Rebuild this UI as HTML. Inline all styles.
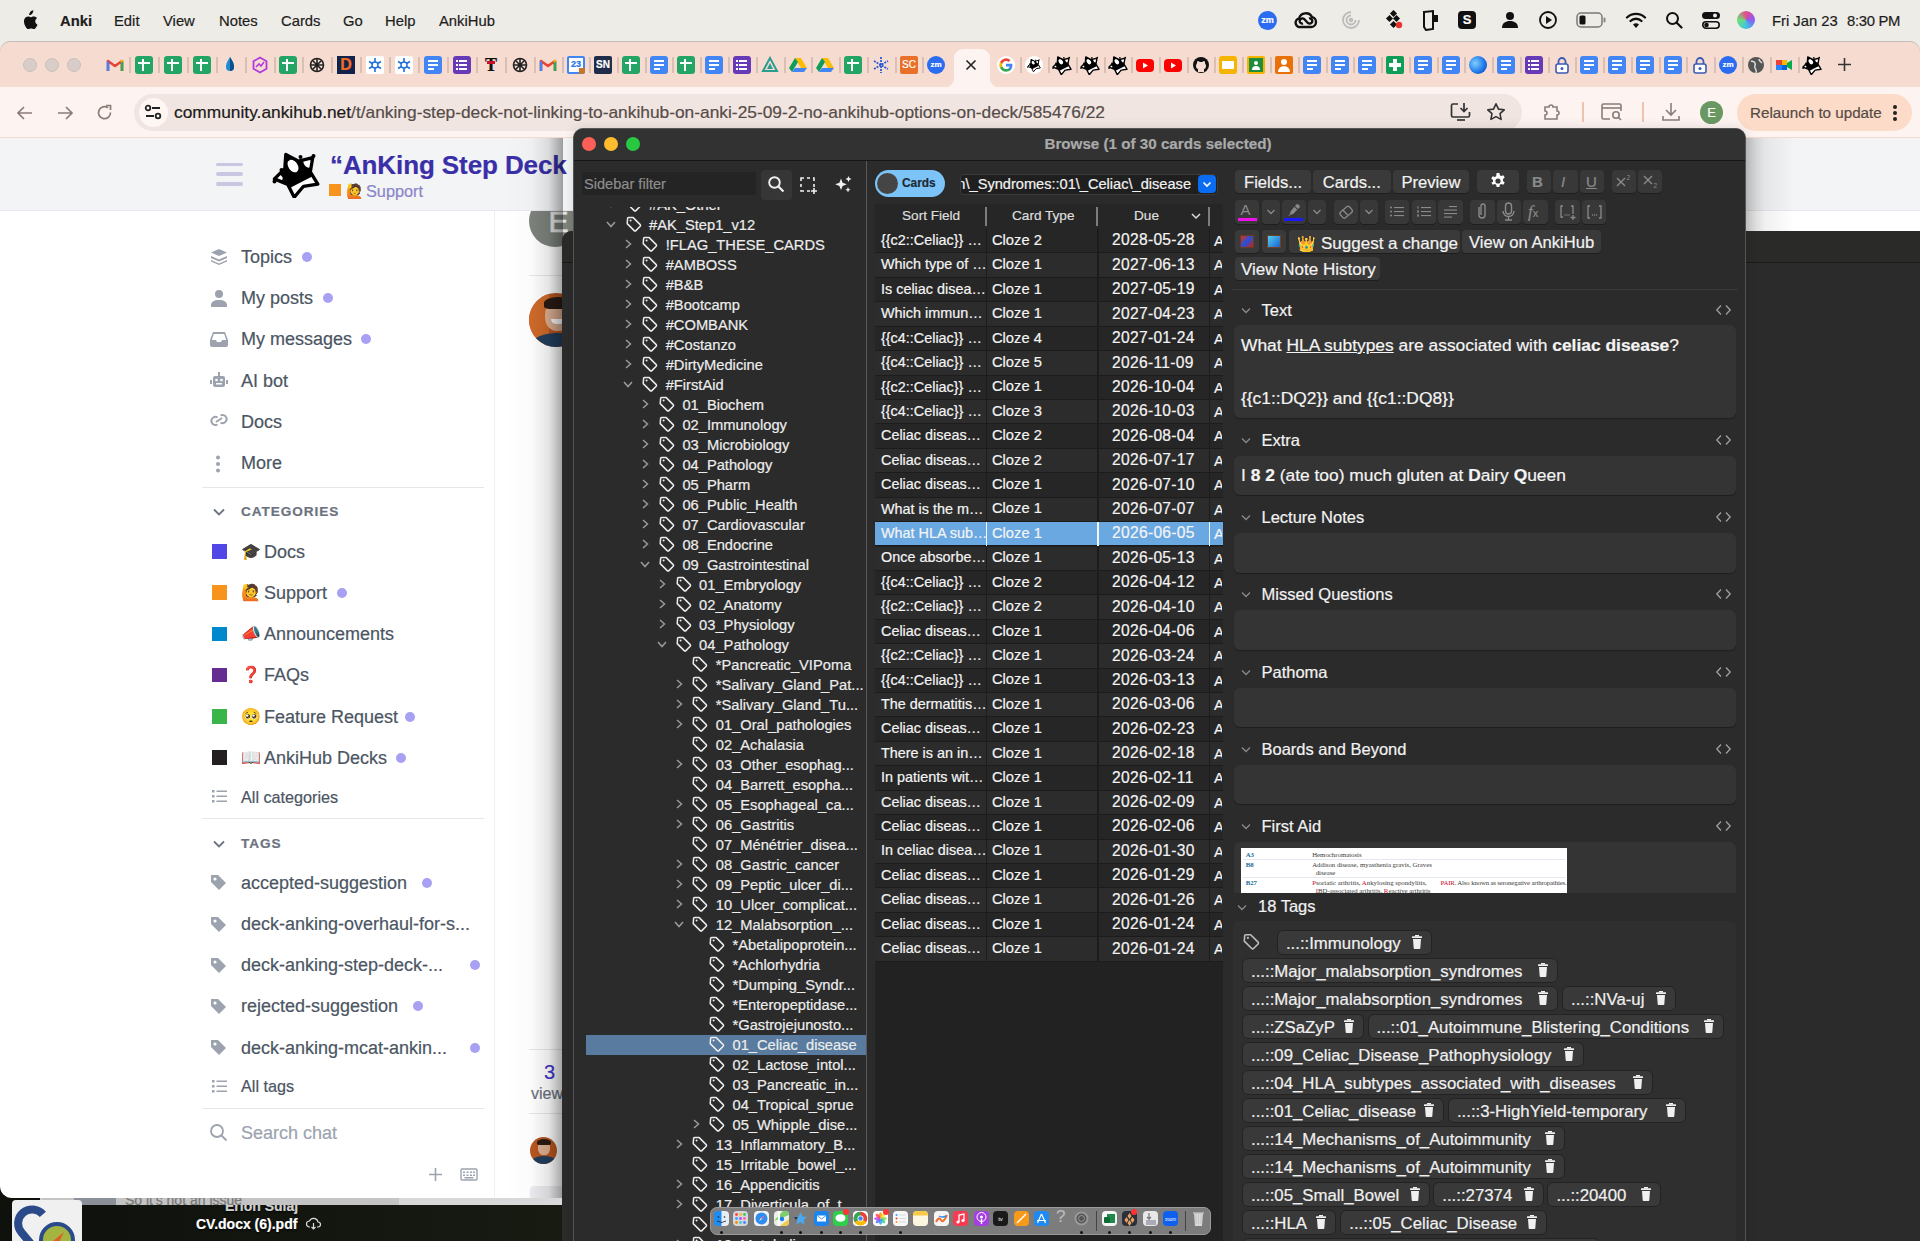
<!DOCTYPE html>
<html><head><meta charset="utf-8">
<style>
*{box-sizing:border-box;margin:0;padding:0}
html,body{width:1920px;height:1241px;overflow:hidden;background:#1a1c14;font-family:"Liberation Sans",sans-serif;position:relative}
.a{position:absolute}
span.a,div.a{-webkit-text-stroke:0.2px currentColor}
.fa{position:absolute;-webkit-text-stroke:0}
#menubar{left:0;top:0;width:1920px;height:42px;background:#eeece6;color:#1d1d1d;font-size:14.8px}
#menubar span.m{position:absolute;top:12.5px;line-height:17px;white-space:nowrap;-webkit-text-stroke:0.2px currentColor}
#tabs{left:0;top:42px;width:1920px;height:46px;background:#f6dcd0;border-radius:10px 10px 0 0;box-shadow:0 -1px 0 #c4beb8}
#toolbar{left:0;top:87px;width:1920px;height:51px;background:#fdf3f0;border-bottom:1px solid #f3d9cf}
</style></head><body>
<svg width="0" height="0" style="position:absolute"><defs><clipPath id="akc"><path d="M22.2 47.3L15.8 34.4 2.4 28.9 12.8 18.8 13.8 4.4 26.6 11.1 40.7 7.7 38.3 21.9 45.8 34.2 31.5 36.3z"/></clipPath><symbol id="ak" viewBox="0 0 48 48"><path d="M22.2 47.3L15.8 34.4 2.4 28.9 12.8 18.8 13.8 4.4 26.6 11.1 40.7 7.7 38.3 21.9 45.8 34.2 31.5 36.3z" fill="#fff"/><g clip-path="url(#akc)"><path d="M0 32L10 42 47 23 44 0 0 0z" fill="#000"/><ellipse cx="21" cy="16" rx="4.6" ry="7" fill="#fff" transform="rotate(-35 21 16)"/><ellipse cx="35.5" cy="12.5" rx="3.8" ry="5.5" fill="#fff" transform="rotate(-30 35.5 12.5)"/><ellipse cx="7" cy="27.5" rx="2.8" ry="4" fill="#fff" transform="rotate(-50 7 27.5)"/></g><path d="M22.2 47.3L15.8 34.4 2.4 28.9 12.8 18.8 13.8 4.4 26.6 11.1 40.7 7.7 38.3 21.9 45.8 34.2 31.5 36.3z" fill="none" stroke="#000" stroke-width="3.3" stroke-linejoin="round"/><g fill="#000"><circle cx="16" cy="9" r="2"/><circle cx="28.5" cy="7" r="2"/><circle cx="41.5" cy="6" r="2"/><circle cx="9.5" cy="20" r="2"/><circle cx="2.5" cy="31.5" r="2"/></g></symbol></defs></svg><div class="a" style="left:0;top:0;width:1920px;height:70px;background:#eeece6"></div>
<div class="a" style="left:0;top:1190px;width:1920px;height:51px;background:linear-gradient(90deg,#0e110c,#171b12 30%,#1e2317 60%,#12150f)"></div>
<span class="a" style="left:225px;top:1198px;font-size:14px;line-height:16px;color:#d0d0d0;font-weight:bold;white-space:nowrap;text-shadow:0 1px 2px #000">Erion Sulaj</span>
<span class="a" style="left:196px;top:1216px;font-size:14px;line-height:16px;color:#fff;font-weight:bold;white-space:nowrap;text-shadow:0 1px 2px #000">CV.docx (6).pdf</span>
<svg class="a" style="left:306px;top:1217px" width="15" height="13" viewBox="0 0 15 13"><path d="M4 10H3.5a3 3 0 0 1 0-6 4.5 4.5 0 0 1 8.5 1 2.5 2.5 0 0 1 0 5H11M7.5 6v6M5.5 10l2 2 2-2" fill="none" stroke="#ddd" stroke-width="1.2"/></svg>
<div class="a" style="left:40px;top:1190px;width:1220px;height:15px;background:#d8d8d8;border-radius:0 0 6px 6px"></div><div class="a" style="left:42px;top:1190px;width:357px;height:15px;background:#c4c4c4"></div>
<div class="a" style="left:74px;top:1190px;width:42px;height:15px;background:#8a8f98"></div>
<span class="a" style="left:125px;top:1193px;font-size:14px;line-height:14px;color:#777">So it's not an issue</span>
<div class="a" style="left:12px;top:1200px;width:70px;height:41px;background:#f0f0f0;border-radius:4px 4px 0 0;overflow:hidden"><svg class="a" style="left:0;top:0" width="70" height="41" viewBox="0 0 70 41"><path d="M10 46V22a14 14 0 0 1 28 0" fill="none" stroke="#2b4a8a" stroke-width="8" transform="rotate(-40 24 28)"/><circle cx="45" cy="40" r="16" fill="#a3b540" stroke="#2b4a8a" stroke-width="4"/><path d="M40 42l12-10-6 12z" fill="#e05a2a"/></svg></div>
<div class="a" style="left:0;top:87px;width:1920px;height:1111px;background:#fff;border-radius:0 0 12px 12px"></div>
<div class="a" style="left:0;top:138px;width:1920px;height:73px;background:#f3f4f6;border-bottom:1px solid #e8e9ee"></div>
<div class="a" style="left:216px;top:162.75px;width:27px;height:3.5px;border-radius:2px;background:#c9c6e2"></div>
<div class="a" style="left:216px;top:172.45px;width:27px;height:3.5px;border-radius:2px;background:#c9c6e2"></div>
<div class="a" style="left:216px;top:182.25px;width:27px;height:3.5px;border-radius:2px;background:#c9c6e2"></div>
<svg class="a" style="left:272px;top:150px;width:48px;height:48px"><use href="#ak"/></svg>
<span class="a" style="left:330px;top:152.3px;font-size:26px;line-height:26px;color:#3a2fa8;white-space:nowrap;font-weight:bold;letter-spacing:-0.1px;">“AnKing Step Deck</span>
<div class="a" style="left:329px;top:184px;width:12px;height:12px;background:#f7941d"></div>
<span class="a" style="left:346px;top:184.1px;font-size:14px;line-height:14px;color:#000;white-space:nowrap;">🙋</span>
<span class="a" style="left:366px;top:183.0px;font-size:16.3px;line-height:16.3px;color:#8b86c8;white-space:nowrap;">Support</span>
<svg class="a" style="left:210px;top:248.0px" width="18" height="17" viewBox="0 0 18 17"><g fill="#9ca3af"><path d="M9 1l8 3.5-8 3.5-8-3.5z"/><path d="M1 8l8 3.5L17 8v2l-8 3.5L1 10z"/><path d="M1 12l8 3.5 8-3.5v1.5L9 17l-8-3.5z"/></g></svg>
<span class="a" style="left:241px;top:247.7px;font-size:18px;line-height:18px;color:#4b5563;white-space:nowrap;">Topics</span>
<div class="a" style="left:302.0px;top:251.5px;width:10px;height:10px;border-radius:50%;background:#a8a0f3"></div>
<svg class="a" style="left:210px;top:289.2px" width="18" height="18" viewBox="0 0 18 18"><circle cx="9" cy="5" r="4" fill="#9ca3af"/><path d="M1 18v-2c0-3 3-5 8-5s8 2 8 5v2z" fill="#9ca3af"/></svg>
<span class="a" style="left:241px;top:288.9px;font-size:18px;line-height:18px;color:#4b5563;white-space:nowrap;">My posts</span>
<div class="a" style="left:323.0px;top:292.7px;width:10px;height:10px;border-radius:50%;background:#a8a0f3"></div>
<svg class="a" style="left:210px;top:330.5px" width="18" height="16" viewBox="0 0 18 16"><path d="M3 1h12l3 8v5a2 2 0 0 1-2 2H2a2 2 0 0 1-2-2V9z" fill="#9ca3af"/><path d="M3.8 3h10.4l2 6H12l-1 2H7L6 9H1.8z" fill="#fff"/></svg>
<span class="a" style="left:241px;top:330.2px;font-size:18px;line-height:18px;color:#4b5563;white-space:nowrap;">My messages</span>
<div class="a" style="left:360.5px;top:334.0px;width:10px;height:10px;border-radius:50%;background:#a8a0f3"></div>
<svg class="a" style="left:210px;top:372.2px" width="18" height="16" viewBox="0 0 18 16"><rect x="3" y="4" width="12" height="11" rx="2" fill="#9ca3af"/><rect x="8" y="0" width="2" height="4" fill="#9ca3af"/><rect x="0" y="8" width="2" height="4" fill="#9ca3af"/><rect x="16" y="8" width="2" height="4" fill="#9ca3af"/><circle cx="6.5" cy="8" r="1.3" fill="#fff"/><circle cx="11.5" cy="8" r="1.3" fill="#fff"/><rect x="6" y="11" width="6" height="1.5" fill="#fff"/></svg>
<span class="a" style="left:241px;top:371.9px;font-size:18px;line-height:18px;color:#4b5563;white-space:nowrap;">AI bot</span>
<svg class="a" style="left:210px;top:413.0px" width="18" height="14" viewBox="0 0 18 14"><g fill="none" stroke="#9ca3af" stroke-width="2"><path d="M7.5 4.5A4 4 0 0 0 2 10a4 4 0 0 0 5.5 1.5"/><path d="M10.5 9.5A4 4 0 0 0 16 4a4 4 0 0 0-5.5-1.5"/><path d="M6 9l6-4"/></g></svg>
<span class="a" style="left:241px;top:412.7px;font-size:18px;line-height:18px;color:#4b5563;white-space:nowrap;">Docs</span>
<svg class="a" style="left:215px;top:454.5px" width="6" height="18" viewBox="0 0 6 18"><g fill="#9ca3af"><circle cx="3" cy="2.5" r="2"/><circle cx="3" cy="9" r="2"/><circle cx="3" cy="15.5" r="2"/></g></svg>
<span class="a" style="left:241px;top:454.2px;font-size:18px;line-height:18px;color:#4b5563;white-space:nowrap;">More</span>
<div class="a" style="left:202px;top:487px;width:282px;height:1px;background:#e5e7eb"></div>
<svg class="a" style="left:212px;top:507px" width="14" height="10" viewBox="0 0 14 10"><path d="M2 2.5l5 5 5-5" fill="none" stroke="#6b7280" stroke-width="1.8"/></svg>
<span class="a" style="left:241px;top:505.3px;font-size:13.6px;line-height:13.6px;color:#6b7280;white-space:nowrap;font-weight:bold;letter-spacing:0.95px;">CATEGORIES</span>
<div class="a" style="left:212px;top:544.05px;width:14.5px;height:14.5px;background:#5146e6"></div>
<span class="a" style="left:241px;top:543.5px;font-size:16px;line-height:16px;color:#000;white-space:nowrap;">🎓</span>
<span class="a" style="left:264px;top:542.5px;font-size:18px;line-height:18px;color:#4b5563;white-space:nowrap;">Docs</span>
<div class="a" style="left:212px;top:585.45px;width:14.5px;height:14.5px;background:#f7941d"></div>
<span class="a" style="left:241px;top:584.9px;font-size:16px;line-height:16px;color:#000;white-space:nowrap;">🙋</span>
<span class="a" style="left:264px;top:583.9px;font-size:18px;line-height:18px;color:#4b5563;white-space:nowrap;">Support</span>
<div class="a" style="left:337.0px;top:587.7px;width:10px;height:10px;border-radius:50%;background:#a8a0f3"></div>
<div class="a" style="left:212px;top:626.55px;width:14.5px;height:14.5px;background:#0088cc"></div>
<span class="a" style="left:241px;top:626.0px;font-size:16px;line-height:16px;color:#000;white-space:nowrap;">📣</span>
<span class="a" style="left:264px;top:625.0px;font-size:18px;line-height:18px;color:#4b5563;white-space:nowrap;">Announcements</span>
<div class="a" style="left:212px;top:667.95px;width:14.5px;height:14.5px;background:#652d90"></div>
<span class="a" style="left:241px;top:667.4px;font-size:16px;line-height:16px;color:#000;white-space:nowrap;">❓</span>
<span class="a" style="left:264px;top:666.4px;font-size:18px;line-height:18px;color:#4b5563;white-space:nowrap;">FAQs</span>
<div class="a" style="left:212px;top:709.35px;width:14.5px;height:14.5px;background:#3ab54a"></div>
<span class="a" style="left:241px;top:708.8px;font-size:16px;line-height:16px;color:#000;white-space:nowrap;">🥺</span>
<span class="a" style="left:264px;top:707.8px;font-size:18px;line-height:18px;color:#4b5563;white-space:nowrap;">Feature Request</span>
<div class="a" style="left:404.7px;top:711.6px;width:10px;height:10px;border-radius:50%;background:#a8a0f3"></div>
<div class="a" style="left:212px;top:750.45px;width:14.5px;height:14.5px;background:#231f20"></div>
<span class="a" style="left:241px;top:749.9px;font-size:16px;line-height:16px;color:#000;white-space:nowrap;">📖</span>
<span class="a" style="left:264px;top:748.9px;font-size:18px;line-height:18px;color:#4b5563;white-space:nowrap;">AnkiHub Decks</span>
<div class="a" style="left:395.6px;top:752.7px;width:10px;height:10px;border-radius:50%;background:#a8a0f3"></div>
<svg class="a" style="left:212px;top:790px" width="15" height="13" viewBox="0 0 15 13"><g fill="#9ca3af"><rect x="0" y="0" width="2.5" height="2.5"/><rect x="0" y="5" width="2.5" height="2.5"/><rect x="0" y="10" width="2.5" height="2.5"/><rect x="4.5" y="0.5" width="10.5" height="1.5"/><rect x="4.5" y="5.5" width="10.5" height="1.5"/><rect x="4.5" y="10.5" width="10.5" height="1.5"/></g></svg>
<span class="a" style="left:241px;top:788.7px;font-size:16.2px;line-height:16.2px;color:#4b5563;white-space:nowrap;">All categories</span>
<div class="a" style="left:202px;top:818px;width:282px;height:1px;background:#e5e7eb"></div>
<svg class="a" style="left:212px;top:838.5px" width="14" height="10" viewBox="0 0 14 10"><path d="M2 2.5l5 5 5-5" fill="none" stroke="#6b7280" stroke-width="1.8"/></svg>
<span class="a" style="left:241px;top:836.8px;font-size:13.6px;line-height:13.6px;color:#6b7280;white-space:nowrap;font-weight:bold;letter-spacing:0.95px;">TAGS</span>
<svg class="a" style="left:210px;top:874.0px" width="17" height="17" viewBox="0 0 17 17"><path d="M1 1h7l8 8-7 7-8-8z" fill="#9ca3af"/><circle cx="5" cy="5" r="1.6" fill="#fff"/></svg>
<span class="a" style="left:241px;top:873.7px;font-size:18px;line-height:18px;color:#4b5563;white-space:nowrap;">accepted-suggestion</span>
<div class="a" style="left:422.0px;top:877.5px;width:10px;height:10px;border-radius:50%;background:#a8a0f3"></div>
<svg class="a" style="left:210px;top:915.5px" width="17" height="17" viewBox="0 0 17 17"><path d="M1 1h7l8 8-7 7-8-8z" fill="#9ca3af"/><circle cx="5" cy="5" r="1.6" fill="#fff"/></svg>
<span class="a" style="left:241px;top:915.2px;font-size:18px;line-height:18px;color:#4b5563;white-space:nowrap;">deck-anking-overhaul-for-s...</span>
<svg class="a" style="left:210px;top:956.5px" width="17" height="17" viewBox="0 0 17 17"><path d="M1 1h7l8 8-7 7-8-8z" fill="#9ca3af"/><circle cx="5" cy="5" r="1.6" fill="#fff"/></svg>
<span class="a" style="left:241px;top:956.2px;font-size:18px;line-height:18px;color:#4b5563;white-space:nowrap;">deck-anking-step-deck-...</span>
<div class="a" style="left:469.8px;top:960.0px;width:10px;height:10px;border-radius:50%;background:#a8a0f3"></div>
<svg class="a" style="left:210px;top:997.5px" width="17" height="17" viewBox="0 0 17 17"><path d="M1 1h7l8 8-7 7-8-8z" fill="#9ca3af"/><circle cx="5" cy="5" r="1.6" fill="#fff"/></svg>
<span class="a" style="left:241px;top:997.2px;font-size:18px;line-height:18px;color:#4b5563;white-space:nowrap;">rejected-suggestion</span>
<div class="a" style="left:412.8px;top:1001.0px;width:10px;height:10px;border-radius:50%;background:#a8a0f3"></div>
<svg class="a" style="left:210px;top:1039.0px" width="17" height="17" viewBox="0 0 17 17"><path d="M1 1h7l8 8-7 7-8-8z" fill="#9ca3af"/><circle cx="5" cy="5" r="1.6" fill="#fff"/></svg>
<span class="a" style="left:241px;top:1038.7px;font-size:18px;line-height:18px;color:#4b5563;white-space:nowrap;">deck-anking-mcat-ankin...</span>
<div class="a" style="left:469.8px;top:1042.5px;width:10px;height:10px;border-radius:50%;background:#a8a0f3"></div>
<svg class="a" style="left:212px;top:1080px" width="15" height="13" viewBox="0 0 15 13"><g fill="#9ca3af"><rect x="0" y="0" width="2.5" height="2.5"/><rect x="0" y="5" width="2.5" height="2.5"/><rect x="0" y="10" width="2.5" height="2.5"/><rect x="4.5" y="0.5" width="10.5" height="1.5"/><rect x="4.5" y="5.5" width="10.5" height="1.5"/><rect x="4.5" y="10.5" width="10.5" height="1.5"/></g></svg>
<span class="a" style="left:241px;top:1078.4px;font-size:16.2px;line-height:16.2px;color:#4b5563;white-space:nowrap;">All tags</span>
<div class="a" style="left:202px;top:1108px;width:282px;height:1px;background:#e5e7eb"></div>
<svg class="a" style="left:209px;top:1123px" width="19" height="19" viewBox="0 0 19 19"><circle cx="8" cy="8" r="6" fill="none" stroke="#9ca3af" stroke-width="1.8"/><path d="M12.5 12.5l5 5" stroke="#9ca3af" stroke-width="1.8"/></svg>
<span class="a" style="left:241px;top:1123.8px;font-size:18px;line-height:18px;color:#9ca3af;white-space:nowrap;">Search chat</span>
<svg class="a" style="left:428px;top:1167px" width="15" height="15" viewBox="0 0 15 15"><path d="M7.5 1v13M1 7.5h13" stroke="#9ca3af" stroke-width="1.6"/></svg>
<svg class="a" style="left:460px;top:1168px" width="18" height="13" viewBox="0 0 18 13"><rect x="1" y="1" width="16" height="11" rx="1" fill="none" stroke="#9ca3af" stroke-width="1.4"/><g fill="#9ca3af"><rect x="3" y="3.5" width="2" height="1.5"/><rect x="6.5" y="3.5" width="2" height="1.5"/><rect x="10" y="3.5" width="2" height="1.5"/><rect x="13" y="3.5" width="2" height="1.5"/><rect x="3" y="6.5" width="2" height="1.5"/><rect x="6.5" y="6.5" width="2" height="1.5"/><rect x="10" y="6.5" width="2" height="1.5"/><rect x="13" y="6.5" width="2" height="1.5"/><rect x="4.5" y="9" width="9" height="1.5"/></g></svg>
<div class="a" style="left:494px;top:211px;width:1px;height:986px;background:#eeeff3"></div>
<div class="a" style="left:520px;top:211px;width:60px;height:40px;overflow:hidden"><div class="a" style="left:9px;top:-16px;width:52px;height:52px;border-radius:50%;background:#7d827c;overflow:hidden"><span class="a" style="left:19.5px;top:10px;font-size:30px;color:#e4e4e4;-webkit-text-stroke:0.7px #e4e4e4">E</span></div></div>
<div class="a" style="left:529px;top:275px;width:40px;height:1px;background:#e5e7eb"></div>
<div class="a" style="left:529px;top:293px;width:54px;height:54px;border-radius:50%;background:#b8561f;overflow:hidden"><div class="a" style="left:0;top:0;width:20px;height:54px;background:#d06a2a"></div><div class="a" style="left:16px;top:8px;width:26px;height:30px;border-radius:45%;background:#dcae90"></div><div class="a" style="left:15px;top:4px;width:28px;height:12px;border-radius:50% 50% 20% 20%;background:#2a1a12"></div><div class="a" style="left:22px;top:26px;width:14px;height:5px;border-radius:0 0 7px 7px;background:#fff"></div><div class="a" style="left:4px;top:40px;width:48px;height:20px;border-radius:50% 50% 0 0;background:#223e5e"></div></div>
<div class="a" style="left:529px;top:1049px;width:40px;height:1px;background:#e5e7eb"></div>
<span class="a" style="left:544px;top:1062.2px;font-size:20px;line-height:20px;color:#3d35c9;white-space:nowrap;">3</span>
<span class="a" style="left:531px;top:1086.2px;font-size:16px;line-height:16px;color:#6b7280;white-space:nowrap;">views</span>
<div class="a" style="left:529px;top:1113px;width:40px;height:1px;background:#e5e7eb"></div>
<div class="a" style="left:530px;top:1137px;width:27px;height:27px;border-radius:50%;background:#b8561f;overflow:hidden"><div class="a" style="left:8px;top:4px;width:12px;height:14px;border-radius:45%;background:#dcae90"></div><div class="a" style="left:7px;top:2px;width:14px;height:6px;border-radius:50% 50% 20% 20%;background:#2a1a12"></div><div class="a" style="left:2px;top:19px;width:24px;height:10px;border-radius:50% 50% 0 0;background:#223e5e"></div></div>
<div class="a" style="left:530px;top:1186px;width:40px;height:12px;border-radius:4px 4px 0 0;background:#ececf0"></div>
<div class="a" style="left:505px;top:138px;width:58px;height:1060px;background:linear-gradient(90deg,rgba(0,0,0,0),rgba(0,0,0,.015) 45%,rgba(0,0,0,.1) 75%,rgba(0,0,0,.36))"></div>
<div class="a" style="left:1745px;top:138px;width:50px;height:95px;background:linear-gradient(90deg,rgba(0,0,0,.22),rgba(0,0,0,.06) 40%,rgba(0,0,0,0))"></div>
<div id="menubar" class="a">
<svg class="a" style="left:20px;top:10px" width="18" height="21" viewBox="0 0 20 23"><path fill="#111" d="M13.6 3.9c.8-1 1.4-2.3 1.2-3.7-1.2.1-2.6.8-3.4 1.8-.8.9-1.4 2.2-1.2 3.5 1.3.1 2.6-.7 3.4-1.6zM16.9 12.4c0-2.3 1.9-3.4 2-3.5-1.1-1.6-2.8-1.8-3.4-1.8-1.4-.2-2.8.8-3.5.8-.7 0-1.8-.8-3-.8-1.6 0-3 .9-3.8 2.3-1.6 2.8-.4 7 1.2 9.3.8 1.1 1.7 2.4 2.9 2.3 1.2 0 1.6-.7 3-.7s1.8.7 3 .7c1.3 0 2.1-1.1 2.8-2.3.9-1.3 1.3-2.5 1.3-2.6-.1 0-2.5-1-2.5-3.7z"/></svg>
<span class="m" style="left:60px;font-weight:bold;">Anki</span>
<span class="m" style="left:114px;">Edit</span>
<span class="m" style="left:163px;">View</span>
<span class="m" style="left:219px;">Notes</span>
<span class="m" style="left:281px;">Cards</span>
<span class="m" style="left:343px;">Go</span>
<span class="m" style="left:385px;">Help</span>
<span class="m" style="left:439px;">AnkiHub</span>
<div class="a" style="left:1258px;top:11px;width:19px;height:19px;border-radius:50%;background:#2b6cf0;color:#fff;font-size:9px;font-weight:bold;text-align:center;line-height:19px">zm</div>
<svg class="a" style="left:1294px;top:10px" width="24" height="20" viewBox="0 0 24 20"><g fill="none" stroke="#111" stroke-width="2.4" stroke-linejoin="round"><path d="M7 17h10a5 5 0 0 0 1-9.9A7 7 0 0 0 5 8.5 4.3 4.3 0 0 0 7 17z"/><path d="M9 13.5a2.6 2.6 0 1 1 0-5c2 0 4 5 6 5a2.6 2.6 0 1 0 0-5"/></g></svg>
<svg class="a" style="left:1341px;top:10px" width="20" height="20" viewBox="0 0 20 20"><g fill="none" stroke="#bbb" stroke-width="1.8"><path d="M10 2a8 8 0 1 0 8 8"/><path d="M10 5.5a4.5 4.5 0 1 0 4.5 4.5"/><circle cx="10" cy="10" r="1.3"/></g></svg>
<svg class="a" style="left:1384px;top:10px" width="20" height="21" viewBox="0 0 20 21"><g fill="#111"><rect x="7" y="1" width="5" height="5" transform="rotate(45 9.5 3.5)"/><rect x="3" y="6" width="5" height="5" transform="rotate(45 5.5 8.5)"/><rect x="10" y="6" width="5" height="5" transform="rotate(45 12.5 8.5)"/><rect x="7" y="12" width="5" height="5" transform="rotate(45 9.5 14.5)"/></g><circle cx="15" cy="15" r="3.2" fill="#e8322d"/></svg>
<svg class="a" style="left:1421px;top:9px" width="20" height="22" viewBox="0 0 20 22"><path d="M3 3l9-1v18l-7 1-2-3z" fill="none" stroke="#111" stroke-width="2"/><rect x="13" y="6" width="4" height="7" fill="#111"/></svg>
<div class="a" style="left:1458px;top:11px;width:18px;height:18px;border-radius:4px;background:#111;color:#fff;font-size:13px;font-weight:bold;text-align:center;line-height:18px">S</div>
<svg class="a" style="left:1501px;top:11px" width="18" height="18" viewBox="0 0 18 18"><circle cx="9" cy="5" r="4" fill="#111"/><path d="M1 17c0-5 3.5-7 8-7s8 2 8 7z" fill="#111"/></svg>
<svg class="a" style="left:1538px;top:10px" width="20" height="20" viewBox="0 0 20 20"><circle cx="10" cy="10" r="8" fill="none" stroke="#111" stroke-width="1.8"/><path d="M8 6l6 4-6 4z" fill="#111"/></svg>
<svg class="a" style="left:1576px;top:12px" width="30" height="16" viewBox="0 0 30 16"><rect x="1" y="1" width="25" height="14" rx="4" fill="none" stroke="#777" stroke-width="1.5"/><rect x="3.5" y="3.5" width="6" height="9" rx="1.5" fill="#111"/><rect x="27.5" y="5.5" width="2" height="5" rx="1" fill="#888"/></svg>
<svg class="a" style="left:1625px;top:11px" width="22" height="18" viewBox="0 0 22 18"><g fill="none" stroke="#111" stroke-width="2.4" stroke-linecap="round"><path d="M2 6.5a13 13 0 0 1 18 0"/><path d="M5.5 10a8 8 0 0 1 11 0"/></g><path d="M8 13.5a4.5 4.5 0 0 1 6 0L11 17z" fill="#111"/></svg>
<svg class="a" style="left:1665px;top:11px" width="18" height="18" viewBox="0 0 18 18"><circle cx="7.5" cy="7.5" r="5.5" fill="none" stroke="#111" stroke-width="2"/><path d="M11.5 11.5l5 5" stroke="#111" stroke-width="2.2" stroke-linecap="round"/></svg>
<svg class="a" style="left:1701px;top:10px" width="20" height="20" viewBox="0 0 20 20"><rect x="1" y="2" width="18" height="7" rx="3.5" fill="#111"/><circle cx="14" cy="5.5" r="2" fill="#eee"/><rect x="1.8" y="11.8" width="16.4" height="6.4" rx="3.2" fill="none" stroke="#111" stroke-width="1.6"/><circle cx="5.5" cy="15" r="2.3" fill="#111"/></svg>
<div class="a" style="left:1737px;top:11px;width:18px;height:18px;border-radius:50%;background:conic-gradient(#e84a8b,#8a5cf6,#3ec6e0,#6ae07a,#e84a8b)"></div>
<span class="m" style="left:1772px">Fri Jan 23</span><span class="m" style="left:1847px;letter-spacing:-0.3px">8:30 PM</span>
</div>
<div id="tabs" class="a">
<div class="a" style="left:23px;top:16px;width:14px;height:14px;border-radius:50%;background:#d8cdc8;border:1px solid #cbbfba"></div>
<div class="a" style="left:45px;top:16px;width:14px;height:14px;border-radius:50%;background:#d8cdc8;border:1px solid #cbbfba"></div>
<div class="a" style="left:67px;top:16px;width:14px;height:14px;border-radius:50%;background:#d8cdc8;border:1px solid #cbbfba"></div>
</div>
<svg class="a" style="left:106px;top:56px;width:18px;height:18px;" viewBox="0 0 18 18"><path d="M2 15V5l7 5 7-5v10" fill="none" stroke="#ea4335" stroke-width="2.6" stroke-linejoin="round"/><path d="M2 15V5.5" stroke="#4285f4" stroke-width="2.6"/><path d="M16 15V5.5" stroke="#34a853" stroke-width="2.6"/><path d="M15 4.5l1.5 1" stroke="#fbbc04" stroke-width="2.6"/></svg>
<div class="a" style="left:135px;top:56px;width:18px;height:18px;background:#23a566;border-radius:3px"><div class="a" style="left:3px;top:6px;width:12px;height:2.2px;background:#fff"></div><div class="a" style="left:7px;top:3px;width:2.2px;height:12px;background:#fff"></div></div>
<div class="a" style="left:164px;top:56px;width:18px;height:18px;background:#23a566;border-radius:3px"><div class="a" style="left:3px;top:6px;width:12px;height:2.2px;background:#fff"></div><div class="a" style="left:7px;top:3px;width:2.2px;height:12px;background:#fff"></div></div>
<div class="a" style="left:193px;top:56px;width:18px;height:18px;background:#23a566;border-radius:3px"><div class="a" style="left:3px;top:6px;width:12px;height:2.2px;background:#fff"></div><div class="a" style="left:7px;top:3px;width:2.2px;height:12px;background:#fff"></div></div>
<svg class="a" style="left:221px;top:56px;width:18px;height:18px;" viewBox="0 0 18 18"><path d="M9 1c3 5 4 7 4 10a4 4 0 0 1-8 0c0-3 1-5 4-10z" fill="#1f8ad6"/><path d="M9 1c3 5 4 7 4 10a4 4 0 0 1-4 4z" fill="#0d4f8a"/></svg>
<svg class="a" style="left:251px;top:56px;width:18px;height:18px;" viewBox="0 0 18 18"><path d="M9 1.5l6.5 3.7v7.6L9 16.5l-6.5-3.7V5.2z" fill="none" stroke="#b23adb" stroke-width="1.8"/><path d="M5 11l3-3 2 2 3-4" fill="none" stroke="#b23adb" stroke-width="1.6"/></svg>
<div class="a" style="left:279px;top:56px;width:18px;height:18px;background:#23a566;border-radius:3px"><div class="a" style="left:3px;top:6px;width:12px;height:2.2px;background:#fff"></div><div class="a" style="left:7px;top:3px;width:2.2px;height:12px;background:#fff"></div></div>
<svg class="a" style="left:308px;top:56px;width:18px;height:18px;" viewBox="0 0 18 18"><g fill="none" stroke="#222" stroke-width="1.6"><circle cx="9" cy="9" r="6.5"/><path d="M5 5l8 8M13 5l-8 8M9 2.5v13M2.5 9h13"/></g></svg>
<div class="a" style="left:337px;top:56px;width:18px;height:18px;background:#13224a;color:#f26b21;font-weight:bold;font-size:16px;line-height:18px;text-align:center">D</div>
<div class="a" style="left:366px;top:56px;width:18px;height:18px;background:#fff;border-radius:2px"></div><svg class="a" style="left:366px;top:56px;width:18px;height:18px;" viewBox="0 0 18 18"><g stroke="#1e6fd9" stroke-width="1.6"><path d="M9 2v14M3 5.5l12 7M3 12.5l12-7"/></g><circle cx="9" cy="9" r="3" fill="#fff" stroke="#1e6fd9" stroke-width="1.4"/></svg>
<div class="a" style="left:395px;top:56px;width:18px;height:18px;background:#fff;border-radius:2px"></div><svg class="a" style="left:395px;top:56px;width:18px;height:18px;" viewBox="0 0 18 18"><g stroke="#1e6fd9" stroke-width="1.6"><path d="M9 2v14M3 5.5l12 7M3 12.5l12-7"/></g><circle cx="9" cy="9" r="3" fill="#fff" stroke="#1e6fd9" stroke-width="1.4"/></svg>
<div class="a" style="left:424px;top:56px;width:18px;height:18px;background:#4285f4;border-radius:3px"><div class="a" style="left:4px;top:4px;width:10px;height:2px;background:#fff;box-shadow:0 4px 0 #fff"></div><div class="a" style="left:4px;top:12px;width:6px;height:2px;background:#fff"></div></div>
<div class="a" style="left:453px;top:56px;width:18px;height:18px;background:#673ab7;border-radius:3px"><div class="a" style="left:6px;top:4px;width:8px;height:2px;background:#fff;box-shadow:0 4px 0 #fff,0 8px 0 #fff"></div><div class="a" style="left:3px;top:4px;width:2px;height:2px;background:#fff;box-shadow:0 4px 0 #fff,0 8px 0 #fff"></div></div>
<div class="a" style="left:482px;top:56px;width:18px;height:18px;color:#111;font-weight:bold;font-size:18px;line-height:18px;text-align:center;font-family:'Liberation Serif',serif">T</div><div class="a" style="left:487px;top:61px;width:8px;height:3px;background:#c8102e"></div>
<svg class="a" style="left:511px;top:56px;width:18px;height:18px;" viewBox="0 0 18 18"><g fill="none" stroke="#222" stroke-width="1.6"><circle cx="9" cy="9" r="6.5"/><path d="M5 5l8 8M13 5l-8 8M9 2.5v13M2.5 9h13"/></g></svg>
<svg class="a" style="left:539px;top:56px;width:18px;height:18px;" viewBox="0 0 18 18"><path d="M2 15V5l7 5 7-5v10" fill="none" stroke="#ea4335" stroke-width="2.6" stroke-linejoin="round"/><path d="M2 15V5.5" stroke="#4285f4" stroke-width="2.6"/><path d="M16 15V5.5" stroke="#34a853" stroke-width="2.6"/><path d="M15 4.5l1.5 1" stroke="#fbbc04" stroke-width="2.6"/></svg>
<div class="a" style="left:567px;top:56px;width:18px;height:18px;background:#fff;border:2px solid #4285f4;border-radius:2px;font-size:9px;color:#1a73e8;text-align:center;line-height:13px;font-weight:bold">23</div><div class="a" style="left:579px;top:68px;width:6px;height:6px;background:#c5762b;border-radius:0 0 3px 0"></div>
<div class="a" style="left:594px;top:56px;width:18px;height:18px;background:#1f2d4a;border-radius:2px;color:#fff;font-size:10px;font-weight:bold;line-height:18px;text-align:center">SN</div>
<div class="a" style="left:622px;top:56px;width:18px;height:18px;background:#23a566;border-radius:3px"><div class="a" style="left:3px;top:6px;width:12px;height:2.2px;background:#fff"></div><div class="a" style="left:7px;top:3px;width:2.2px;height:12px;background:#fff"></div></div>
<div class="a" style="left:650px;top:56px;width:18px;height:18px;background:#4285f4;border-radius:3px"><div class="a" style="left:4px;top:4px;width:10px;height:2px;background:#fff;box-shadow:0 4px 0 #fff"></div><div class="a" style="left:4px;top:12px;width:6px;height:2px;background:#fff"></div></div>
<div class="a" style="left:677px;top:56px;width:18px;height:18px;background:#23a566;border-radius:3px"><div class="a" style="left:3px;top:6px;width:12px;height:2.2px;background:#fff"></div><div class="a" style="left:7px;top:3px;width:2.2px;height:12px;background:#fff"></div></div>
<div class="a" style="left:705px;top:56px;width:18px;height:18px;background:#4285f4;border-radius:3px"><div class="a" style="left:4px;top:4px;width:10px;height:2px;background:#fff;box-shadow:0 4px 0 #fff"></div><div class="a" style="left:4px;top:12px;width:6px;height:2px;background:#fff"></div></div>
<div class="a" style="left:733px;top:56px;width:18px;height:18px;background:#673ab7;border-radius:3px"><div class="a" style="left:6px;top:4px;width:8px;height:2px;background:#fff;box-shadow:0 4px 0 #fff,0 8px 0 #fff"></div><div class="a" style="left:3px;top:4px;width:2px;height:2px;background:#fff;box-shadow:0 4px 0 #fff,0 8px 0 #fff"></div></div>
<svg class="a" style="left:761px;top:56px;width:18px;height:18px;" viewBox="0 0 18 18"><path d="M9 2l7 13H2z" fill="none" stroke="#2a9d8f" stroke-width="2"/><path d="M9 7l3 6H6z" fill="#2a9d8f"/></svg>
<svg class="a" style="left:789px;top:56px;width:18px;height:18px;" viewBox="0 0 18 18"><path d="M6 2h6l6 10h-6z" fill="#fbbc04"/><path d="M6 2L0 12l3 4 6-10z" fill="#0f9d58"/><path d="M3 16h12l3-4H6z" fill="#4285f4"/></svg>
<svg class="a" style="left:816px;top:56px;width:18px;height:18px;" viewBox="0 0 18 18"><path d="M6 2h6l6 10h-6z" fill="#fbbc04"/><path d="M6 2L0 12l3 4 6-10z" fill="#0f9d58"/><path d="M3 16h12l3-4H6z" fill="#4285f4"/></svg>
<div class="a" style="left:844px;top:56px;width:18px;height:18px;background:#23a566;border-radius:3px"><div class="a" style="left:3px;top:6px;width:12px;height:2.2px;background:#fff"></div><div class="a" style="left:7px;top:3px;width:2.2px;height:12px;background:#fff"></div></div>
<svg class="a" style="left:872px;top:56px;width:18px;height:18px;" viewBox="0 0 18 18"><g stroke="#2a5bd7" stroke-width="1.8" stroke-dasharray="2 1"><path d="M9 1v16M2 5l14 8M2 13l14-8"/></g></svg>
<div class="a" style="left:900px;top:56px;width:18px;height:18px;background:#e8702a;border-radius:2px;color:#fff;font-size:10px;line-height:18px;text-align:center">SC</div>
<div class="a" style="left:927px;top:56px;width:18px;height:18px;background:#2b6cf0;border-radius:50%;color:#fff;font-size:8px;font-weight:bold;line-height:18px;text-align:center">zm</div>
<div class="a" style="left:997px;top:56px;width:18px;height:18px;background:#fff;border-radius:50%"></div><svg class="a" style="left:999px;top:58px;width:14px;height:14px" viewBox="0 0 24 24"><path d="M23 12.3c0-.8-.1-1.6-.2-2.3H12v4.4h6.2a5.3 5.3 0 0 1-2.3 3.5v2.9h3.7c2.2-2 3.4-5 3.4-8.5z" fill="#4285f4"/><path d="M12 23.5c3.1 0 5.7-1 7.6-2.8l-3.7-2.9c-1 .7-2.3 1.1-3.9 1.1-3 0-5.5-2-6.4-4.7H1.8v3A11.5 11.5 0 0 0 12 23.5z" fill="#34a853"/><path d="M5.6 14.2a7 7 0 0 1 0-4.4v-3H1.8a11.5 11.5 0 0 0 0 10.4z" fill="#fbbc05"/><path d="M12 5c1.7 0 3.2.6 4.4 1.7l3.3-3.3A11.5 11.5 0 0 0 1.8 6.8l3.8 3C6.5 7 9 5 12 5z" fill="#ea4335"/></svg>
<div class="a" style="left:1025px;top:56px;width:18px;height:18px;border-radius:50%;background:#fff"></div><svg class="a" style="left:1027px;top:58px;width:14px;height:14px"><use href="#ak"/></svg>
<svg class="a" style="left:1052px;top:55px;width:20px;height:20px"><use href="#ak"/></svg>
<svg class="a" style="left:1080px;top:55px;width:20px;height:20px"><use href="#ak"/></svg>
<svg class="a" style="left:1108px;top:55px;width:20px;height:20px"><use href="#ak"/></svg>
<div class="a" style="left:1136px;top:59px;width:18px;height:13px;background:#f00;border-radius:4px"></div><svg class="a" style="left:1136px;top:56px;width:18px;height:18px;" viewBox="0 0 18 18"><path d="M7 6.5l5 3-5 3z" fill="#fff"/></svg>
<div class="a" style="left:1164px;top:59px;width:18px;height:13px;background:#f00;border-radius:4px"></div><svg class="a" style="left:1164px;top:56px;width:18px;height:18px;" viewBox="0 0 18 18"><path d="M7 6.5l5 3-5 3z" fill="#fff"/></svg>
<svg class="a" style="left:1192px;top:56px;width:18px;height:18px;" viewBox="0 0 18 18"><circle cx="9" cy="9" r="8" fill="#111"/><path d="M6 16v-3c-1-.3-2-1-2-3s1-2 1-3 0-2 1-2l2 1h2l2-1c1 0 1 1 1 2s1 1 1 3-1 2.7-2 3v3z" fill="#f6dcd0"/></svg>
<div class="a" style="left:1219px;top:56px;width:18px;height:18px;background:#f4b400;border-radius:3px"><div class="a" style="left:3px;top:5px;width:12px;height:8px;background:#fff"></div></div>
<div class="a" style="left:1247px;top:56px;width:18px;height:18px;background:#1e8e3e;border-radius:2px;border:2px solid #f4b400"><div class="a" style="left:5px;top:3px;width:4px;height:4px;border-radius:50%;background:#fff"></div><div class="a" style="left:3px;top:8px;width:8px;height:4px;border-radius:4px 4px 0 0;background:#fff"></div></div>
<div class="a" style="left:1275px;top:56px;width:18px;height:18px;background:#e8710a;border-radius:2px"><div class="a" style="left:6px;top:3px;width:6px;height:6px;border-radius:50%;background:#fff"></div><div class="a" style="left:3px;top:10px;width:12px;height:6px;border-radius:6px 6px 0 0;background:#fff"></div></div>
<div class="a" style="left:1303px;top:56px;width:18px;height:18px;background:#4285f4;border-radius:3px"><div class="a" style="left:4px;top:4px;width:10px;height:2px;background:#fff;box-shadow:0 4px 0 #fff"></div><div class="a" style="left:4px;top:12px;width:6px;height:2px;background:#fff"></div></div>
<div class="a" style="left:1331px;top:56px;width:18px;height:18px;background:#4285f4;border-radius:3px"><div class="a" style="left:4px;top:4px;width:10px;height:2px;background:#fff;box-shadow:0 4px 0 #fff"></div><div class="a" style="left:4px;top:12px;width:6px;height:2px;background:#fff"></div></div>
<div class="a" style="left:1358px;top:56px;width:18px;height:18px;background:#4285f4;border-radius:3px"><div class="a" style="left:4px;top:4px;width:10px;height:2px;background:#fff;box-shadow:0 4px 0 #fff"></div><div class="a" style="left:4px;top:12px;width:6px;height:2px;background:#fff"></div></div>
<div class="a" style="left:1386px;top:56px;width:18px;height:18px;background:#0f9d58;border-radius:2px"><div class="a" style="left:3px;top:7px;width:12px;height:4px;background:#fff"></div><div class="a" style="left:7px;top:3px;width:4px;height:12px;background:#fff"></div></div>
<div class="a" style="left:1414px;top:56px;width:18px;height:18px;background:#4285f4;border-radius:3px"><div class="a" style="left:4px;top:4px;width:10px;height:2px;background:#fff;box-shadow:0 4px 0 #fff"></div><div class="a" style="left:4px;top:12px;width:6px;height:2px;background:#fff"></div></div>
<div class="a" style="left:1442px;top:56px;width:18px;height:18px;background:#4285f4;border-radius:3px"><div class="a" style="left:4px;top:4px;width:10px;height:2px;background:#fff;box-shadow:0 4px 0 #fff"></div><div class="a" style="left:4px;top:12px;width:6px;height:2px;background:#fff"></div></div>
<div class="a" style="left:1469px;top:56px;width:18px;height:18px;background:radial-gradient(circle at 35% 40%,#7fd0ff,#1a73e8 60%,#0b3d91);border-radius:50%"></div>
<div class="a" style="left:1497px;top:56px;width:18px;height:18px;background:#4285f4;border-radius:3px"><div class="a" style="left:4px;top:4px;width:10px;height:2px;background:#fff;box-shadow:0 4px 0 #fff"></div><div class="a" style="left:4px;top:12px;width:6px;height:2px;background:#fff"></div></div>
<div class="a" style="left:1525px;top:56px;width:18px;height:18px;background:#673ab7;border-radius:3px"><div class="a" style="left:6px;top:4px;width:8px;height:2px;background:#fff;box-shadow:0 4px 0 #fff,0 8px 0 #fff"></div><div class="a" style="left:3px;top:4px;width:2px;height:2px;background:#fff;box-shadow:0 4px 0 #fff,0 8px 0 #fff"></div></div>
<svg class="a" style="left:1553px;top:56px;width:18px;height:18px;" viewBox="0 0 18 18"><path d="M5.5 8V5.5a3.5 3.5 0 0 1 7 0V8" fill="none" stroke="#3b5bb5" stroke-width="1.8"/><rect x="3" y="8" width="12" height="9" rx="2" fill="#fff" stroke="#3b5bb5" stroke-width="1.6"/><circle cx="9" cy="12.5" r="1.5" fill="#3b5bb5"/></svg>
<div class="a" style="left:1580px;top:56px;width:18px;height:18px;background:#4285f4;border-radius:3px"><div class="a" style="left:4px;top:4px;width:10px;height:2px;background:#fff;box-shadow:0 4px 0 #fff"></div><div class="a" style="left:4px;top:12px;width:6px;height:2px;background:#fff"></div></div>
<div class="a" style="left:1608px;top:56px;width:18px;height:18px;background:#4285f4;border-radius:3px"><div class="a" style="left:4px;top:4px;width:10px;height:2px;background:#fff;box-shadow:0 4px 0 #fff"></div><div class="a" style="left:4px;top:12px;width:6px;height:2px;background:#fff"></div></div>
<div class="a" style="left:1636px;top:56px;width:18px;height:18px;background:#4285f4;border-radius:3px"><div class="a" style="left:4px;top:4px;width:10px;height:2px;background:#fff;box-shadow:0 4px 0 #fff"></div><div class="a" style="left:4px;top:12px;width:6px;height:2px;background:#fff"></div></div>
<div class="a" style="left:1664px;top:56px;width:18px;height:18px;background:#4285f4;border-radius:3px"><div class="a" style="left:4px;top:4px;width:10px;height:2px;background:#fff;box-shadow:0 4px 0 #fff"></div><div class="a" style="left:4px;top:12px;width:6px;height:2px;background:#fff"></div></div>
<svg class="a" style="left:1691px;top:56px;width:18px;height:18px;" viewBox="0 0 18 18"><path d="M5.5 8V5.5a3.5 3.5 0 0 1 7 0V8" fill="none" stroke="#3b5bb5" stroke-width="1.8"/><rect x="3" y="8" width="12" height="9" rx="2" fill="#fff" stroke="#3b5bb5" stroke-width="1.6"/><circle cx="9" cy="12.5" r="1.5" fill="#3b5bb5"/></svg>
<div class="a" style="left:1719px;top:56px;width:18px;height:18px;background:#2b6cf0;border-radius:50%;color:#fff;font-size:8px;font-weight:bold;line-height:18px;text-align:center">zm</div>
<svg class="a" style="left:1747px;top:56px;width:18px;height:18px;" viewBox="0 0 18 18"><circle cx="9" cy="9" r="8" fill="#555"/><path d="M4 5c2 1 3 0 4 2s-1 3 0 5 2 3 1 5M12 3c0 2 2 3 3 4" fill="none" stroke="#ddd" stroke-width="1.5"/></svg>
<svg class="a" style="left:1775px;top:56px;width:18px;height:18px;" viewBox="0 0 18 18"><rect x="1" y="4" width="11" height="10" rx="1.5" fill="#00832d"/><path d="M1 4h6v5H1z" fill="#ea4335"/><path d="M7 9h5v5H7z" fill="#0066da"/><path d="M1 9h6v5H2.5A1.5 1.5 0 0 1 1 12.5z" fill="#2684fc"/><path d="M7 4h3.5A1.5 1.5 0 0 1 12 5.5V9H7z" fill="#ffba00"/><path d="M12 7l5-3v10l-5-3z" fill="#00ac47"/></svg>
<svg class="a" style="left:1802px;top:55px;width:20px;height:20px"><use href="#ak"/></svg>
<div class="a" style="left:129px;top:57px;width:1.5px;height:16px;background:#d9bfb4"></div>
<div class="a" style="left:158px;top:57px;width:1.5px;height:16px;background:#d9bfb4"></div>
<div class="a" style="left:187px;top:57px;width:1.5px;height:16px;background:#d9bfb4"></div>
<div class="a" style="left:216px;top:57px;width:1.5px;height:16px;background:#d9bfb4"></div>
<div class="a" style="left:245px;top:57px;width:1.5px;height:16px;background:#d9bfb4"></div>
<div class="a" style="left:274px;top:57px;width:1.5px;height:16px;background:#d9bfb4"></div>
<div class="a" style="left:302px;top:57px;width:1.5px;height:16px;background:#d9bfb4"></div>
<div class="a" style="left:331px;top:57px;width:1.5px;height:16px;background:#d9bfb4"></div>
<div class="a" style="left:360px;top:57px;width:1.5px;height:16px;background:#d9bfb4"></div>
<div class="a" style="left:389px;top:57px;width:1.5px;height:16px;background:#d9bfb4"></div>
<div class="a" style="left:418px;top:57px;width:1.5px;height:16px;background:#d9bfb4"></div>
<div class="a" style="left:447px;top:57px;width:1.5px;height:16px;background:#d9bfb4"></div>
<div class="a" style="left:476px;top:57px;width:1.5px;height:16px;background:#d9bfb4"></div>
<div class="a" style="left:505px;top:57px;width:1.5px;height:16px;background:#d9bfb4"></div>
<div class="a" style="left:534px;top:57px;width:1.5px;height:16px;background:#d9bfb4"></div>
<div class="a" style="left:562px;top:57px;width:1.5px;height:16px;background:#d9bfb4"></div>
<div class="a" style="left:589px;top:57px;width:1.5px;height:16px;background:#d9bfb4"></div>
<div class="a" style="left:617px;top:57px;width:1.5px;height:16px;background:#d9bfb4"></div>
<div class="a" style="left:645px;top:57px;width:1.5px;height:16px;background:#d9bfb4"></div>
<div class="a" style="left:672px;top:57px;width:1.5px;height:16px;background:#d9bfb4"></div>
<div class="a" style="left:700px;top:57px;width:1.5px;height:16px;background:#d9bfb4"></div>
<div class="a" style="left:728px;top:57px;width:1.5px;height:16px;background:#d9bfb4"></div>
<div class="a" style="left:756px;top:57px;width:1.5px;height:16px;background:#d9bfb4"></div>
<div class="a" style="left:784px;top:57px;width:1.5px;height:16px;background:#d9bfb4"></div>
<div class="a" style="left:811px;top:57px;width:1.5px;height:16px;background:#d9bfb4"></div>
<div class="a" style="left:839px;top:57px;width:1.5px;height:16px;background:#d9bfb4"></div>
<div class="a" style="left:867px;top:57px;width:1.5px;height:16px;background:#d9bfb4"></div>
<div class="a" style="left:895px;top:57px;width:1.5px;height:16px;background:#d9bfb4"></div>
<div class="a" style="left:922px;top:57px;width:1.5px;height:16px;background:#d9bfb4"></div>
<div class="a" style="left:1020px;top:57px;width:1.5px;height:16px;background:#d9bfb4"></div>
<div class="a" style="left:1048px;top:57px;width:1.5px;height:16px;background:#d9bfb4"></div>
<div class="a" style="left:1076px;top:57px;width:1.5px;height:16px;background:#d9bfb4"></div>
<div class="a" style="left:1104px;top:57px;width:1.5px;height:16px;background:#d9bfb4"></div>
<div class="a" style="left:1131px;top:57px;width:1.5px;height:16px;background:#d9bfb4"></div>
<div class="a" style="left:1159px;top:57px;width:1.5px;height:16px;background:#d9bfb4"></div>
<div class="a" style="left:1187px;top:57px;width:1.5px;height:16px;background:#d9bfb4"></div>
<div class="a" style="left:1214px;top:57px;width:1.5px;height:16px;background:#d9bfb4"></div>
<div class="a" style="left:1242px;top:57px;width:1.5px;height:16px;background:#d9bfb4"></div>
<div class="a" style="left:1270px;top:57px;width:1.5px;height:16px;background:#d9bfb4"></div>
<div class="a" style="left:1298px;top:57px;width:1.5px;height:16px;background:#d9bfb4"></div>
<div class="a" style="left:1326px;top:57px;width:1.5px;height:16px;background:#d9bfb4"></div>
<div class="a" style="left:1353px;top:57px;width:1.5px;height:16px;background:#d9bfb4"></div>
<div class="a" style="left:1381px;top:57px;width:1.5px;height:16px;background:#d9bfb4"></div>
<div class="a" style="left:1409px;top:57px;width:1.5px;height:16px;background:#d9bfb4"></div>
<div class="a" style="left:1437px;top:57px;width:1.5px;height:16px;background:#d9bfb4"></div>
<div class="a" style="left:1464px;top:57px;width:1.5px;height:16px;background:#d9bfb4"></div>
<div class="a" style="left:1492px;top:57px;width:1.5px;height:16px;background:#d9bfb4"></div>
<div class="a" style="left:1520px;top:57px;width:1.5px;height:16px;background:#d9bfb4"></div>
<div class="a" style="left:1548px;top:57px;width:1.5px;height:16px;background:#d9bfb4"></div>
<div class="a" style="left:1575px;top:57px;width:1.5px;height:16px;background:#d9bfb4"></div>
<div class="a" style="left:1603px;top:57px;width:1.5px;height:16px;background:#d9bfb4"></div>
<div class="a" style="left:1631px;top:57px;width:1.5px;height:16px;background:#d9bfb4"></div>
<div class="a" style="left:1659px;top:57px;width:1.5px;height:16px;background:#d9bfb4"></div>
<div class="a" style="left:1686px;top:57px;width:1.5px;height:16px;background:#d9bfb4"></div>
<div class="a" style="left:1714px;top:57px;width:1.5px;height:16px;background:#d9bfb4"></div>
<div class="a" style="left:1742px;top:57px;width:1.5px;height:16px;background:#d9bfb4"></div>
<div class="a" style="left:1770px;top:57px;width:1.5px;height:16px;background:#d9bfb4"></div>
<div class="a" style="left:1798px;top:57px;width:1.5px;height:16px;background:#d9bfb4"></div>
<svg class="a" style="left:944px;top:49px" width="56" height="39" viewBox="0 0 56 39"><path d="M0 39a10 10 0 0 0 10-10V9a9 9 0 0 1 9-9h18a9 9 0 0 1 9 9v20a10 10 0 0 0 10 10z" fill="#fdf3f0"/></svg>
<svg class="a" style="left:965px;top:59px" width="12" height="12" viewBox="0 0 12 12"><path d="M1.5 1.5l9 9M10.5 1.5l-9 9" stroke="#222" stroke-width="1.6"/></svg>
<svg class="a" style="left:1837px;top:57px" width="15" height="15" viewBox="0 0 15 15"><path d="M7.5 1v13M1 7.5h13" stroke="#333" stroke-width="1.6"/></svg>
<div id="toolbar" class="a">
<svg class="a" style="left:15px;top:16px" width="20" height="20" viewBox="0 0 20 20"><path d="M17 10H3M9 4l-6 6 6 6" fill="none" stroke="#8a7d78" stroke-width="1.7"/></svg>
<svg class="a" style="left:55px;top:16px" width="20" height="20" viewBox="0 0 20 20"><path d="M3 10h14M11 4l6 6-6 6" fill="none" stroke="#8a7d78" stroke-width="1.7"/></svg>
<svg class="a" style="left:95px;top:16px" width="20" height="20" viewBox="0 0 20 20"><path d="M15.5 9.5A6 6 0 1 1 13 4.8" fill="none" stroke="#8a7d78" stroke-width="1.7"/><path d="M11 2.5h4.5V7" fill="none" stroke="#8a7d78" stroke-width="1.7"/></svg>
<div class="a" style="left:134px;top:7px;width:1388px;height:37px;border-radius:19px;background:#f1e5e1"></div>
<div class="a" style="left:139px;top:11px;width:29px;height:29px;border-radius:50%;background:#fdf6f3"></div>
<svg class="a" style="left:144px;top:17px" width="18" height="16" viewBox="0 0 18 16"><g fill="none" stroke="#222" stroke-width="1.8"><circle cx="4" cy="4" r="2.3"/><path d="M8 4h8M2 12h8"/><circle cx="14" cy="12" r="2.3"/></g></svg>
<span class="a" style="left:174px;top:15px;font-size:17.35px;color:#201a18;white-space:nowrap">community.ankihub.net<span style="color:#564c48">/t/anking-step-deck-not-linking-to-ankihub-on-anki-25-09-2-no-ankihub-options-on-deck/585476/22</span></span>
<svg class="a" style="left:1450px;top:15px" width="22" height="20" viewBox="0 0 22 20"><path d="M8 2H3a1.5 1.5 0 0 0-1.5 1.5v10A1.5 1.5 0 0 0 3 15h15a1.5 1.5 0 0 0 1.5-1.5V10" fill="none" stroke="#333" stroke-width="1.7"/><path d="M7 18h8" stroke="#333" stroke-width="1.7"/><path d="M14 1v8M10.5 6l3.5 3.5L17.5 6" fill="none" stroke="#333" stroke-width="1.7"/></svg>
<svg class="a" style="left:1486px;top:15px" width="20" height="20" viewBox="0 0 20 20"><path d="M10 1.8l2.5 5.3 5.7.7-4.2 3.9 1.1 5.7L10 14.6l-5.1 2.8 1.1-5.7L1.8 7.8l5.7-.7z" fill="none" stroke="#333" stroke-width="1.6" stroke-linejoin="round"/></svg>
<svg class="a" style="left:1542px;top:15px" width="20" height="20" viewBox="0 0 20 20"><path d="M3 5h4a2 2 0 0 1 4 0h4v4a2 2 0 0 1 0 4v4H3v-4a2 2 0 0 0 0-4z" fill="none" stroke="#8a7d78" stroke-width="1.6"/></svg>
<div class="a" style="left:1582px;top:15px;width:1.5px;height:20px;background:#f0c3b0"></div>
<svg class="a" style="left:1601px;top:15px" width="22" height="20" viewBox="0 0 22 20"><path d="M20 9V3.5A1.5 1.5 0 0 0 18.5 2h-16A1.5 1.5 0 0 0 1 3.5v12A1.5 1.5 0 0 0 2.5 17H9" fill="none" stroke="#8a7d78" stroke-width="1.6"/><path d="M1 6h19" stroke="#8a7d78" stroke-width="1.6"/><circle cx="15" cy="13" r="3.2" fill="none" stroke="#8a7d78" stroke-width="1.6"/><path d="M17.3 15.3l2.7 2.7" stroke="#8a7d78" stroke-width="1.6"/></svg>
<div class="a" style="left:1642px;top:15px;width:1.5px;height:20px;background:#f0c3b0"></div>
<svg class="a" style="left:1661px;top:14px" width="20" height="22" viewBox="0 0 20 22"><path d="M10 2v12M5 9l5 5 5-5M2 15v4h16v-4" fill="none" stroke="#8a7d78" stroke-width="1.6"/></svg>
<div class="a" style="left:1700px;top:14px;width:23px;height:23px;border-radius:50%;background:#6a9862;color:#fff;font-size:13px;text-align:center;line-height:23px">E</div>
<div class="a" style="left:1737px;top:7px;width:175px;height:37px;border-radius:19px;background:#fcdcc8"></div>
<span class="a" style="left:1750px;top:17px;font-size:15.2px;color:#554a45;white-space:nowrap">Relaunch to update</span>
<div class="a" style="left:1893px;top:18px;width:4px;height:4px;border-radius:50%;background:#222;box-shadow:0 6px 0 #222,0 12px 0 #222"></div>
</div>
<div class="a" style="left:562px;top:231px;width:1358px;height:1010px;background:#2b2b2b;border-radius:10px 0 0 0"></div>
<div class="a" style="left:562px;top:231px;width:1358px;height:32px;background:#2a2a28;border-radius:10px 0 0 0;border-bottom:1px solid #1a1a1a"></div>
<div class="a" style="left:573px;top:128px;width:1173px;height:1200px;border-radius:10px;box-shadow:0 0 12px rgba(0,0,0,.12)"></div>
<div class="a" style="left:573px;top:128px;width:1173px;height:1200px;background:#2b2b2b;border-radius:10px;border:1px solid #555;overflow:hidden">
<div class="a" style="left:0;top:0;width:100%;height:32px;background:#323232;border-bottom:1px solid #161616"></div>
<div class="a" style="left:8px;top:8px;width:14px;height:14px;border-radius:50%;background:#fe5f57"></div>
<div class="a" style="left:30px;top:8px;width:14px;height:14px;border-radius:50%;background:#febc2e"></div>
<div class="a" style="left:52px;top:8px;width:14px;height:14px;border-radius:50%;background:#28c840"></div>
<span class="a" style="left:0;width:1168px;top:6px;font-size:15.2px;line-height:18px;color:#aaaaaa;font-weight:bold;text-align:center;white-space:nowrap">Browse (1 of 30 cards selected)</span>
</div>
<div class="a" style="left:574px;top:161px;width:1171px;height:1080px;overflow:hidden">
<div class="a" style="left:8px;top:11px;width:174px;height:23px;background:#242424;border-radius:2px"></div>
<span class="a" style="left:10px;top:16.3px;font-size:14.6px;line-height:14.6px;color:#8d8d8d;white-space:nowrap;">Sidebar filter</span>
<div class="a" style="left:187px;top:8.5px;width:31px;height:30px;background:#363636;border-radius:4px"></div>
<svg class="a" style="left:193px;top:14px" width="19" height="19" viewBox="0 0 19 19"><circle cx="7.5" cy="7.5" r="5.3" fill="none" stroke="#f0f0f0" stroke-width="1.9"/><path d="M11.5 11.5l5 5" stroke="#f0f0f0" stroke-width="2.2"/></svg>
<svg class="a" style="left:226px;top:15.5px" width="18" height="18" viewBox="0 0 18 18"><path d="M1 4V1h3M7 1h3M13 1h1v3M1 7v3M1 13v1h3M7 14h3M14 7v3" fill="none" stroke="#f0f0f0" stroke-width="1.6"/><path d="M14 11v6M11 14h6" stroke="#f0f0f0" stroke-width="1.6"/></svg>
<svg class="a" style="left:260px;top:14px" width="19" height="19" viewBox="0 0 19 19"><path d="M7 3.5l1.6 4.2 4.2 1.6-4.2 1.6L7 15.1l-1.6-4.2-4.2-1.6 4.2-1.6z" fill="#f0f0f0"/><path d="M14.5 1l.9 2.1 2.1.9-2.1.9-.9 2.1-.9-2.1-2.1-.9 2.1-.9z" fill="#f0f0f0"/><path d="M14 12l.8 1.9 1.9.8-1.9.8-.8 1.9-.8-1.9-1.9-.8 1.9-.8z" fill="#f0f0f0"/></svg>
<div class="a" style="left:292px;top:0;width:1px;height:1080px;background:#5a5a5a"></div>
<div class="a" style="left:0px;top:46px;width:292px;height:1100px;overflow:hidden">
<svg class="a" style="left:31px;top:-8px" width="12" height="10" viewBox="0 0 12 10"><path d="M2 3l4 4.5L10 3" fill="none" stroke="#9b9b9b" stroke-width="1.5"/></svg>
<svg class="a" style="left:51.5px;top:-11px" width="16" height="16" viewBox="0 0 16 16"><path d="M1.6 2.6a1 1 0 0 1 1-1h4.6l7 7a1.2 1.2 0 0 1 0 1.7l-4.3 4.3a1.2 1.2 0 0 1-1.7 0l-7-7z" fill="none" stroke="#ececec" stroke-width="1.5" stroke-linejoin="round"/><circle cx="4.6" cy="4.6" r="1" fill="#ececec"/></svg>
<span class="a" style="left:75.0px;top:-9.5px;font-size:14.7px;line-height:14.7px;color:#ededed;white-space:nowrap;">#AK_Other</span>
<svg class="a" style="left:31px;top:12px" width="12" height="10" viewBox="0 0 12 10"><path d="M2 3l4 4.5L10 3" fill="none" stroke="#9b9b9b" stroke-width="1.5"/></svg>
<svg class="a" style="left:51.5px;top:9px" width="16" height="16" viewBox="0 0 16 16"><path d="M1.6 2.6a1 1 0 0 1 1-1h4.6l7 7a1.2 1.2 0 0 1 0 1.7l-4.3 4.3a1.2 1.2 0 0 1-1.7 0l-7-7z" fill="none" stroke="#ececec" stroke-width="1.5" stroke-linejoin="round"/><circle cx="4.6" cy="4.6" r="1" fill="#ececec"/></svg>
<span class="a" style="left:75.0px;top:10.5px;font-size:14.7px;line-height:14.7px;color:#ededed;white-space:nowrap;">#AK_Step1_v12</span>
<svg class="a" style="left:49px;top:31px" width="10" height="12" viewBox="0 0 10 12"><path d="M3 2l4.5 4L3 10" fill="none" stroke="#9b9b9b" stroke-width="1.5"/></svg>
<svg class="a" style="left:68.2px;top:29px" width="16" height="16" viewBox="0 0 16 16"><path d="M1.6 2.6a1 1 0 0 1 1-1h4.6l7 7a1.2 1.2 0 0 1 0 1.7l-4.3 4.3a1.2 1.2 0 0 1-1.7 0l-7-7z" fill="none" stroke="#ececec" stroke-width="1.5" stroke-linejoin="round"/><circle cx="4.6" cy="4.6" r="1" fill="#ececec"/></svg>
<span class="a" style="left:91.7px;top:30.5px;font-size:14.7px;line-height:14.7px;color:#ededed;white-space:nowrap;">!FLAG_THESE_CARDS</span>
<svg class="a" style="left:49px;top:51px" width="10" height="12" viewBox="0 0 10 12"><path d="M3 2l4.5 4L3 10" fill="none" stroke="#9b9b9b" stroke-width="1.5"/></svg>
<svg class="a" style="left:68.2px;top:49px" width="16" height="16" viewBox="0 0 16 16"><path d="M1.6 2.6a1 1 0 0 1 1-1h4.6l7 7a1.2 1.2 0 0 1 0 1.7l-4.3 4.3a1.2 1.2 0 0 1-1.7 0l-7-7z" fill="none" stroke="#ececec" stroke-width="1.5" stroke-linejoin="round"/><circle cx="4.6" cy="4.6" r="1" fill="#ececec"/></svg>
<span class="a" style="left:91.7px;top:50.5px;font-size:14.7px;line-height:14.7px;color:#ededed;white-space:nowrap;">#AMBOSS</span>
<svg class="a" style="left:49px;top:71px" width="10" height="12" viewBox="0 0 10 12"><path d="M3 2l4.5 4L3 10" fill="none" stroke="#9b9b9b" stroke-width="1.5"/></svg>
<svg class="a" style="left:68.2px;top:69px" width="16" height="16" viewBox="0 0 16 16"><path d="M1.6 2.6a1 1 0 0 1 1-1h4.6l7 7a1.2 1.2 0 0 1 0 1.7l-4.3 4.3a1.2 1.2 0 0 1-1.7 0l-7-7z" fill="none" stroke="#ececec" stroke-width="1.5" stroke-linejoin="round"/><circle cx="4.6" cy="4.6" r="1" fill="#ececec"/></svg>
<span class="a" style="left:91.7px;top:70.5px;font-size:14.7px;line-height:14.7px;color:#ededed;white-space:nowrap;">#B&amp;B</span>
<svg class="a" style="left:49px;top:91px" width="10" height="12" viewBox="0 0 10 12"><path d="M3 2l4.5 4L3 10" fill="none" stroke="#9b9b9b" stroke-width="1.5"/></svg>
<svg class="a" style="left:68.2px;top:89px" width="16" height="16" viewBox="0 0 16 16"><path d="M1.6 2.6a1 1 0 0 1 1-1h4.6l7 7a1.2 1.2 0 0 1 0 1.7l-4.3 4.3a1.2 1.2 0 0 1-1.7 0l-7-7z" fill="none" stroke="#ececec" stroke-width="1.5" stroke-linejoin="round"/><circle cx="4.6" cy="4.6" r="1" fill="#ececec"/></svg>
<span class="a" style="left:91.7px;top:90.5px;font-size:14.7px;line-height:14.7px;color:#ededed;white-space:nowrap;">#Bootcamp</span>
<svg class="a" style="left:49px;top:111px" width="10" height="12" viewBox="0 0 10 12"><path d="M3 2l4.5 4L3 10" fill="none" stroke="#9b9b9b" stroke-width="1.5"/></svg>
<svg class="a" style="left:68.2px;top:109px" width="16" height="16" viewBox="0 0 16 16"><path d="M1.6 2.6a1 1 0 0 1 1-1h4.6l7 7a1.2 1.2 0 0 1 0 1.7l-4.3 4.3a1.2 1.2 0 0 1-1.7 0l-7-7z" fill="none" stroke="#ececec" stroke-width="1.5" stroke-linejoin="round"/><circle cx="4.6" cy="4.6" r="1" fill="#ececec"/></svg>
<span class="a" style="left:91.7px;top:110.5px;font-size:14.7px;line-height:14.7px;color:#ededed;white-space:nowrap;">#COMBANK</span>
<svg class="a" style="left:49px;top:131px" width="10" height="12" viewBox="0 0 10 12"><path d="M3 2l4.5 4L3 10" fill="none" stroke="#9b9b9b" stroke-width="1.5"/></svg>
<svg class="a" style="left:68.2px;top:129px" width="16" height="16" viewBox="0 0 16 16"><path d="M1.6 2.6a1 1 0 0 1 1-1h4.6l7 7a1.2 1.2 0 0 1 0 1.7l-4.3 4.3a1.2 1.2 0 0 1-1.7 0l-7-7z" fill="none" stroke="#ececec" stroke-width="1.5" stroke-linejoin="round"/><circle cx="4.6" cy="4.6" r="1" fill="#ececec"/></svg>
<span class="a" style="left:91.7px;top:130.5px;font-size:14.7px;line-height:14.7px;color:#ededed;white-space:nowrap;">#Costanzo</span>
<svg class="a" style="left:49px;top:151px" width="10" height="12" viewBox="0 0 10 12"><path d="M3 2l4.5 4L3 10" fill="none" stroke="#9b9b9b" stroke-width="1.5"/></svg>
<svg class="a" style="left:68.2px;top:149px" width="16" height="16" viewBox="0 0 16 16"><path d="M1.6 2.6a1 1 0 0 1 1-1h4.6l7 7a1.2 1.2 0 0 1 0 1.7l-4.3 4.3a1.2 1.2 0 0 1-1.7 0l-7-7z" fill="none" stroke="#ececec" stroke-width="1.5" stroke-linejoin="round"/><circle cx="4.6" cy="4.6" r="1" fill="#ececec"/></svg>
<span class="a" style="left:91.7px;top:150.5px;font-size:14.7px;line-height:14.7px;color:#ededed;white-space:nowrap;">#DirtyMedicine</span>
<svg class="a" style="left:48px;top:172px" width="12" height="10" viewBox="0 0 12 10"><path d="M2 3l4 4.5L10 3" fill="none" stroke="#9b9b9b" stroke-width="1.5"/></svg>
<svg class="a" style="left:68.2px;top:169px" width="16" height="16" viewBox="0 0 16 16"><path d="M1.6 2.6a1 1 0 0 1 1-1h4.6l7 7a1.2 1.2 0 0 1 0 1.7l-4.3 4.3a1.2 1.2 0 0 1-1.7 0l-7-7z" fill="none" stroke="#ececec" stroke-width="1.5" stroke-linejoin="round"/><circle cx="4.6" cy="4.6" r="1" fill="#ececec"/></svg>
<span class="a" style="left:91.7px;top:170.5px;font-size:14.7px;line-height:14.7px;color:#ededed;white-space:nowrap;">#FirstAid</span>
<svg class="a" style="left:66px;top:191px" width="10" height="12" viewBox="0 0 10 12"><path d="M3 2l4.5 4L3 10" fill="none" stroke="#9b9b9b" stroke-width="1.5"/></svg>
<svg class="a" style="left:84.9px;top:189px" width="16" height="16" viewBox="0 0 16 16"><path d="M1.6 2.6a1 1 0 0 1 1-1h4.6l7 7a1.2 1.2 0 0 1 0 1.7l-4.3 4.3a1.2 1.2 0 0 1-1.7 0l-7-7z" fill="none" stroke="#ececec" stroke-width="1.5" stroke-linejoin="round"/><circle cx="4.6" cy="4.6" r="1" fill="#ececec"/></svg>
<span class="a" style="left:108.4px;top:190.5px;font-size:14.7px;line-height:14.7px;color:#ededed;white-space:nowrap;">01_Biochem</span>
<svg class="a" style="left:66px;top:211px" width="10" height="12" viewBox="0 0 10 12"><path d="M3 2l4.5 4L3 10" fill="none" stroke="#9b9b9b" stroke-width="1.5"/></svg>
<svg class="a" style="left:84.9px;top:209px" width="16" height="16" viewBox="0 0 16 16"><path d="M1.6 2.6a1 1 0 0 1 1-1h4.6l7 7a1.2 1.2 0 0 1 0 1.7l-4.3 4.3a1.2 1.2 0 0 1-1.7 0l-7-7z" fill="none" stroke="#ececec" stroke-width="1.5" stroke-linejoin="round"/><circle cx="4.6" cy="4.6" r="1" fill="#ececec"/></svg>
<span class="a" style="left:108.4px;top:210.5px;font-size:14.7px;line-height:14.7px;color:#ededed;white-space:nowrap;">02_Immunology</span>
<svg class="a" style="left:66px;top:231px" width="10" height="12" viewBox="0 0 10 12"><path d="M3 2l4.5 4L3 10" fill="none" stroke="#9b9b9b" stroke-width="1.5"/></svg>
<svg class="a" style="left:84.9px;top:229px" width="16" height="16" viewBox="0 0 16 16"><path d="M1.6 2.6a1 1 0 0 1 1-1h4.6l7 7a1.2 1.2 0 0 1 0 1.7l-4.3 4.3a1.2 1.2 0 0 1-1.7 0l-7-7z" fill="none" stroke="#ececec" stroke-width="1.5" stroke-linejoin="round"/><circle cx="4.6" cy="4.6" r="1" fill="#ececec"/></svg>
<span class="a" style="left:108.4px;top:230.5px;font-size:14.7px;line-height:14.7px;color:#ededed;white-space:nowrap;">03_Microbiology</span>
<svg class="a" style="left:66px;top:251px" width="10" height="12" viewBox="0 0 10 12"><path d="M3 2l4.5 4L3 10" fill="none" stroke="#9b9b9b" stroke-width="1.5"/></svg>
<svg class="a" style="left:84.9px;top:249px" width="16" height="16" viewBox="0 0 16 16"><path d="M1.6 2.6a1 1 0 0 1 1-1h4.6l7 7a1.2 1.2 0 0 1 0 1.7l-4.3 4.3a1.2 1.2 0 0 1-1.7 0l-7-7z" fill="none" stroke="#ececec" stroke-width="1.5" stroke-linejoin="round"/><circle cx="4.6" cy="4.6" r="1" fill="#ececec"/></svg>
<span class="a" style="left:108.4px;top:250.5px;font-size:14.7px;line-height:14.7px;color:#ededed;white-space:nowrap;">04_Pathology</span>
<svg class="a" style="left:66px;top:271px" width="10" height="12" viewBox="0 0 10 12"><path d="M3 2l4.5 4L3 10" fill="none" stroke="#9b9b9b" stroke-width="1.5"/></svg>
<svg class="a" style="left:84.9px;top:269px" width="16" height="16" viewBox="0 0 16 16"><path d="M1.6 2.6a1 1 0 0 1 1-1h4.6l7 7a1.2 1.2 0 0 1 0 1.7l-4.3 4.3a1.2 1.2 0 0 1-1.7 0l-7-7z" fill="none" stroke="#ececec" stroke-width="1.5" stroke-linejoin="round"/><circle cx="4.6" cy="4.6" r="1" fill="#ececec"/></svg>
<span class="a" style="left:108.4px;top:270.5px;font-size:14.7px;line-height:14.7px;color:#ededed;white-space:nowrap;">05_Pharm</span>
<svg class="a" style="left:66px;top:291px" width="10" height="12" viewBox="0 0 10 12"><path d="M3 2l4.5 4L3 10" fill="none" stroke="#9b9b9b" stroke-width="1.5"/></svg>
<svg class="a" style="left:84.9px;top:289px" width="16" height="16" viewBox="0 0 16 16"><path d="M1.6 2.6a1 1 0 0 1 1-1h4.6l7 7a1.2 1.2 0 0 1 0 1.7l-4.3 4.3a1.2 1.2 0 0 1-1.7 0l-7-7z" fill="none" stroke="#ececec" stroke-width="1.5" stroke-linejoin="round"/><circle cx="4.6" cy="4.6" r="1" fill="#ececec"/></svg>
<span class="a" style="left:108.4px;top:290.5px;font-size:14.7px;line-height:14.7px;color:#ededed;white-space:nowrap;">06_Public_Health</span>
<svg class="a" style="left:66px;top:311px" width="10" height="12" viewBox="0 0 10 12"><path d="M3 2l4.5 4L3 10" fill="none" stroke="#9b9b9b" stroke-width="1.5"/></svg>
<svg class="a" style="left:84.9px;top:309px" width="16" height="16" viewBox="0 0 16 16"><path d="M1.6 2.6a1 1 0 0 1 1-1h4.6l7 7a1.2 1.2 0 0 1 0 1.7l-4.3 4.3a1.2 1.2 0 0 1-1.7 0l-7-7z" fill="none" stroke="#ececec" stroke-width="1.5" stroke-linejoin="round"/><circle cx="4.6" cy="4.6" r="1" fill="#ececec"/></svg>
<span class="a" style="left:108.4px;top:310.5px;font-size:14.7px;line-height:14.7px;color:#ededed;white-space:nowrap;">07_Cardiovascular</span>
<svg class="a" style="left:66px;top:331px" width="10" height="12" viewBox="0 0 10 12"><path d="M3 2l4.5 4L3 10" fill="none" stroke="#9b9b9b" stroke-width="1.5"/></svg>
<svg class="a" style="left:84.9px;top:329px" width="16" height="16" viewBox="0 0 16 16"><path d="M1.6 2.6a1 1 0 0 1 1-1h4.6l7 7a1.2 1.2 0 0 1 0 1.7l-4.3 4.3a1.2 1.2 0 0 1-1.7 0l-7-7z" fill="none" stroke="#ececec" stroke-width="1.5" stroke-linejoin="round"/><circle cx="4.6" cy="4.6" r="1" fill="#ececec"/></svg>
<span class="a" style="left:108.4px;top:330.5px;font-size:14.7px;line-height:14.7px;color:#ededed;white-space:nowrap;">08_Endocrine</span>
<svg class="a" style="left:65px;top:352px" width="12" height="10" viewBox="0 0 12 10"><path d="M2 3l4 4.5L10 3" fill="none" stroke="#9b9b9b" stroke-width="1.5"/></svg>
<svg class="a" style="left:84.9px;top:349px" width="16" height="16" viewBox="0 0 16 16"><path d="M1.6 2.6a1 1 0 0 1 1-1h4.6l7 7a1.2 1.2 0 0 1 0 1.7l-4.3 4.3a1.2 1.2 0 0 1-1.7 0l-7-7z" fill="none" stroke="#ececec" stroke-width="1.5" stroke-linejoin="round"/><circle cx="4.6" cy="4.6" r="1" fill="#ececec"/></svg>
<span class="a" style="left:108.4px;top:350.5px;font-size:14.7px;line-height:14.7px;color:#ededed;white-space:nowrap;">09_Gastrointestinal</span>
<svg class="a" style="left:83px;top:371px" width="10" height="12" viewBox="0 0 10 12"><path d="M3 2l4.5 4L3 10" fill="none" stroke="#9b9b9b" stroke-width="1.5"/></svg>
<svg class="a" style="left:101.6px;top:369px" width="16" height="16" viewBox="0 0 16 16"><path d="M1.6 2.6a1 1 0 0 1 1-1h4.6l7 7a1.2 1.2 0 0 1 0 1.7l-4.3 4.3a1.2 1.2 0 0 1-1.7 0l-7-7z" fill="none" stroke="#ececec" stroke-width="1.5" stroke-linejoin="round"/><circle cx="4.6" cy="4.6" r="1" fill="#ececec"/></svg>
<span class="a" style="left:125.1px;top:370.5px;font-size:14.7px;line-height:14.7px;color:#ededed;white-space:nowrap;">01_Embryology</span>
<svg class="a" style="left:83px;top:391px" width="10" height="12" viewBox="0 0 10 12"><path d="M3 2l4.5 4L3 10" fill="none" stroke="#9b9b9b" stroke-width="1.5"/></svg>
<svg class="a" style="left:101.6px;top:389px" width="16" height="16" viewBox="0 0 16 16"><path d="M1.6 2.6a1 1 0 0 1 1-1h4.6l7 7a1.2 1.2 0 0 1 0 1.7l-4.3 4.3a1.2 1.2 0 0 1-1.7 0l-7-7z" fill="none" stroke="#ececec" stroke-width="1.5" stroke-linejoin="round"/><circle cx="4.6" cy="4.6" r="1" fill="#ececec"/></svg>
<span class="a" style="left:125.1px;top:390.5px;font-size:14.7px;line-height:14.7px;color:#ededed;white-space:nowrap;">02_Anatomy</span>
<svg class="a" style="left:83px;top:411px" width="10" height="12" viewBox="0 0 10 12"><path d="M3 2l4.5 4L3 10" fill="none" stroke="#9b9b9b" stroke-width="1.5"/></svg>
<svg class="a" style="left:101.6px;top:409px" width="16" height="16" viewBox="0 0 16 16"><path d="M1.6 2.6a1 1 0 0 1 1-1h4.6l7 7a1.2 1.2 0 0 1 0 1.7l-4.3 4.3a1.2 1.2 0 0 1-1.7 0l-7-7z" fill="none" stroke="#ececec" stroke-width="1.5" stroke-linejoin="round"/><circle cx="4.6" cy="4.6" r="1" fill="#ececec"/></svg>
<span class="a" style="left:125.1px;top:410.5px;font-size:14.7px;line-height:14.7px;color:#ededed;white-space:nowrap;">03_Physiology</span>
<svg class="a" style="left:82px;top:432px" width="12" height="10" viewBox="0 0 12 10"><path d="M2 3l4 4.5L10 3" fill="none" stroke="#9b9b9b" stroke-width="1.5"/></svg>
<svg class="a" style="left:101.6px;top:429px" width="16" height="16" viewBox="0 0 16 16"><path d="M1.6 2.6a1 1 0 0 1 1-1h4.6l7 7a1.2 1.2 0 0 1 0 1.7l-4.3 4.3a1.2 1.2 0 0 1-1.7 0l-7-7z" fill="none" stroke="#ececec" stroke-width="1.5" stroke-linejoin="round"/><circle cx="4.6" cy="4.6" r="1" fill="#ececec"/></svg>
<span class="a" style="left:125.1px;top:430.5px;font-size:14.7px;line-height:14.7px;color:#ededed;white-space:nowrap;">04_Pathology</span>
<svg class="a" style="left:118.3px;top:449px" width="16" height="16" viewBox="0 0 16 16"><path d="M1.6 2.6a1 1 0 0 1 1-1h4.6l7 7a1.2 1.2 0 0 1 0 1.7l-4.3 4.3a1.2 1.2 0 0 1-1.7 0l-7-7z" fill="none" stroke="#ececec" stroke-width="1.5" stroke-linejoin="round"/><circle cx="4.6" cy="4.6" r="1" fill="#ececec"/></svg>
<span class="a" style="left:141.8px;top:450.5px;font-size:14.7px;line-height:14.7px;color:#ededed;white-space:nowrap;">*Pancreatic_VIPoma</span>
<svg class="a" style="left:100px;top:471px" width="10" height="12" viewBox="0 0 10 12"><path d="M3 2l4.5 4L3 10" fill="none" stroke="#9b9b9b" stroke-width="1.5"/></svg>
<svg class="a" style="left:118.3px;top:469px" width="16" height="16" viewBox="0 0 16 16"><path d="M1.6 2.6a1 1 0 0 1 1-1h4.6l7 7a1.2 1.2 0 0 1 0 1.7l-4.3 4.3a1.2 1.2 0 0 1-1.7 0l-7-7z" fill="none" stroke="#ececec" stroke-width="1.5" stroke-linejoin="round"/><circle cx="4.6" cy="4.6" r="1" fill="#ececec"/></svg>
<span class="a" style="left:141.8px;top:470.5px;font-size:14.7px;line-height:14.7px;color:#ededed;white-space:nowrap;">*Salivary_Gland_Pat...</span>
<svg class="a" style="left:100px;top:491px" width="10" height="12" viewBox="0 0 10 12"><path d="M3 2l4.5 4L3 10" fill="none" stroke="#9b9b9b" stroke-width="1.5"/></svg>
<svg class="a" style="left:118.3px;top:489px" width="16" height="16" viewBox="0 0 16 16"><path d="M1.6 2.6a1 1 0 0 1 1-1h4.6l7 7a1.2 1.2 0 0 1 0 1.7l-4.3 4.3a1.2 1.2 0 0 1-1.7 0l-7-7z" fill="none" stroke="#ececec" stroke-width="1.5" stroke-linejoin="round"/><circle cx="4.6" cy="4.6" r="1" fill="#ececec"/></svg>
<span class="a" style="left:141.8px;top:490.5px;font-size:14.7px;line-height:14.7px;color:#ededed;white-space:nowrap;">*Salivary_Gland_Tu...</span>
<svg class="a" style="left:100px;top:511px" width="10" height="12" viewBox="0 0 10 12"><path d="M3 2l4.5 4L3 10" fill="none" stroke="#9b9b9b" stroke-width="1.5"/></svg>
<svg class="a" style="left:118.3px;top:509px" width="16" height="16" viewBox="0 0 16 16"><path d="M1.6 2.6a1 1 0 0 1 1-1h4.6l7 7a1.2 1.2 0 0 1 0 1.7l-4.3 4.3a1.2 1.2 0 0 1-1.7 0l-7-7z" fill="none" stroke="#ececec" stroke-width="1.5" stroke-linejoin="round"/><circle cx="4.6" cy="4.6" r="1" fill="#ececec"/></svg>
<span class="a" style="left:141.8px;top:510.5px;font-size:14.7px;line-height:14.7px;color:#ededed;white-space:nowrap;">01_Oral_pathologies</span>
<svg class="a" style="left:118.3px;top:529px" width="16" height="16" viewBox="0 0 16 16"><path d="M1.6 2.6a1 1 0 0 1 1-1h4.6l7 7a1.2 1.2 0 0 1 0 1.7l-4.3 4.3a1.2 1.2 0 0 1-1.7 0l-7-7z" fill="none" stroke="#ececec" stroke-width="1.5" stroke-linejoin="round"/><circle cx="4.6" cy="4.6" r="1" fill="#ececec"/></svg>
<span class="a" style="left:141.8px;top:530.5px;font-size:14.7px;line-height:14.7px;color:#ededed;white-space:nowrap;">02_Achalasia</span>
<svg class="a" style="left:100px;top:551px" width="10" height="12" viewBox="0 0 10 12"><path d="M3 2l4.5 4L3 10" fill="none" stroke="#9b9b9b" stroke-width="1.5"/></svg>
<svg class="a" style="left:118.3px;top:549px" width="16" height="16" viewBox="0 0 16 16"><path d="M1.6 2.6a1 1 0 0 1 1-1h4.6l7 7a1.2 1.2 0 0 1 0 1.7l-4.3 4.3a1.2 1.2 0 0 1-1.7 0l-7-7z" fill="none" stroke="#ececec" stroke-width="1.5" stroke-linejoin="round"/><circle cx="4.6" cy="4.6" r="1" fill="#ececec"/></svg>
<span class="a" style="left:141.8px;top:550.5px;font-size:14.7px;line-height:14.7px;color:#ededed;white-space:nowrap;">03_Other_esophag...</span>
<svg class="a" style="left:118.3px;top:569px" width="16" height="16" viewBox="0 0 16 16"><path d="M1.6 2.6a1 1 0 0 1 1-1h4.6l7 7a1.2 1.2 0 0 1 0 1.7l-4.3 4.3a1.2 1.2 0 0 1-1.7 0l-7-7z" fill="none" stroke="#ececec" stroke-width="1.5" stroke-linejoin="round"/><circle cx="4.6" cy="4.6" r="1" fill="#ececec"/></svg>
<span class="a" style="left:141.8px;top:570.5px;font-size:14.7px;line-height:14.7px;color:#ededed;white-space:nowrap;">04_Barrett_esopha...</span>
<svg class="a" style="left:100px;top:591px" width="10" height="12" viewBox="0 0 10 12"><path d="M3 2l4.5 4L3 10" fill="none" stroke="#9b9b9b" stroke-width="1.5"/></svg>
<svg class="a" style="left:118.3px;top:589px" width="16" height="16" viewBox="0 0 16 16"><path d="M1.6 2.6a1 1 0 0 1 1-1h4.6l7 7a1.2 1.2 0 0 1 0 1.7l-4.3 4.3a1.2 1.2 0 0 1-1.7 0l-7-7z" fill="none" stroke="#ececec" stroke-width="1.5" stroke-linejoin="round"/><circle cx="4.6" cy="4.6" r="1" fill="#ececec"/></svg>
<span class="a" style="left:141.8px;top:590.5px;font-size:14.7px;line-height:14.7px;color:#ededed;white-space:nowrap;">05_Esophageal_ca...</span>
<svg class="a" style="left:100px;top:611px" width="10" height="12" viewBox="0 0 10 12"><path d="M3 2l4.5 4L3 10" fill="none" stroke="#9b9b9b" stroke-width="1.5"/></svg>
<svg class="a" style="left:118.3px;top:609px" width="16" height="16" viewBox="0 0 16 16"><path d="M1.6 2.6a1 1 0 0 1 1-1h4.6l7 7a1.2 1.2 0 0 1 0 1.7l-4.3 4.3a1.2 1.2 0 0 1-1.7 0l-7-7z" fill="none" stroke="#ececec" stroke-width="1.5" stroke-linejoin="round"/><circle cx="4.6" cy="4.6" r="1" fill="#ececec"/></svg>
<span class="a" style="left:141.8px;top:610.5px;font-size:14.7px;line-height:14.7px;color:#ededed;white-space:nowrap;">06_Gastritis</span>
<svg class="a" style="left:118.3px;top:629px" width="16" height="16" viewBox="0 0 16 16"><path d="M1.6 2.6a1 1 0 0 1 1-1h4.6l7 7a1.2 1.2 0 0 1 0 1.7l-4.3 4.3a1.2 1.2 0 0 1-1.7 0l-7-7z" fill="none" stroke="#ececec" stroke-width="1.5" stroke-linejoin="round"/><circle cx="4.6" cy="4.6" r="1" fill="#ececec"/></svg>
<span class="a" style="left:141.8px;top:630.5px;font-size:14.7px;line-height:14.7px;color:#ededed;white-space:nowrap;">07_Ménétrier_disea...</span>
<svg class="a" style="left:100px;top:651px" width="10" height="12" viewBox="0 0 10 12"><path d="M3 2l4.5 4L3 10" fill="none" stroke="#9b9b9b" stroke-width="1.5"/></svg>
<svg class="a" style="left:118.3px;top:649px" width="16" height="16" viewBox="0 0 16 16"><path d="M1.6 2.6a1 1 0 0 1 1-1h4.6l7 7a1.2 1.2 0 0 1 0 1.7l-4.3 4.3a1.2 1.2 0 0 1-1.7 0l-7-7z" fill="none" stroke="#ececec" stroke-width="1.5" stroke-linejoin="round"/><circle cx="4.6" cy="4.6" r="1" fill="#ececec"/></svg>
<span class="a" style="left:141.8px;top:650.5px;font-size:14.7px;line-height:14.7px;color:#ededed;white-space:nowrap;">08_Gastric_cancer</span>
<svg class="a" style="left:100px;top:671px" width="10" height="12" viewBox="0 0 10 12"><path d="M3 2l4.5 4L3 10" fill="none" stroke="#9b9b9b" stroke-width="1.5"/></svg>
<svg class="a" style="left:118.3px;top:669px" width="16" height="16" viewBox="0 0 16 16"><path d="M1.6 2.6a1 1 0 0 1 1-1h4.6l7 7a1.2 1.2 0 0 1 0 1.7l-4.3 4.3a1.2 1.2 0 0 1-1.7 0l-7-7z" fill="none" stroke="#ececec" stroke-width="1.5" stroke-linejoin="round"/><circle cx="4.6" cy="4.6" r="1" fill="#ececec"/></svg>
<span class="a" style="left:141.8px;top:670.5px;font-size:14.7px;line-height:14.7px;color:#ededed;white-space:nowrap;">09_Peptic_ulcer_di...</span>
<svg class="a" style="left:100px;top:691px" width="10" height="12" viewBox="0 0 10 12"><path d="M3 2l4.5 4L3 10" fill="none" stroke="#9b9b9b" stroke-width="1.5"/></svg>
<svg class="a" style="left:118.3px;top:689px" width="16" height="16" viewBox="0 0 16 16"><path d="M1.6 2.6a1 1 0 0 1 1-1h4.6l7 7a1.2 1.2 0 0 1 0 1.7l-4.3 4.3a1.2 1.2 0 0 1-1.7 0l-7-7z" fill="none" stroke="#ececec" stroke-width="1.5" stroke-linejoin="round"/><circle cx="4.6" cy="4.6" r="1" fill="#ececec"/></svg>
<span class="a" style="left:141.8px;top:690.5px;font-size:14.7px;line-height:14.7px;color:#ededed;white-space:nowrap;">10_Ulcer_complicat...</span>
<svg class="a" style="left:99px;top:712px" width="12" height="10" viewBox="0 0 12 10"><path d="M2 3l4 4.5L10 3" fill="none" stroke="#9b9b9b" stroke-width="1.5"/></svg>
<svg class="a" style="left:118.3px;top:709px" width="16" height="16" viewBox="0 0 16 16"><path d="M1.6 2.6a1 1 0 0 1 1-1h4.6l7 7a1.2 1.2 0 0 1 0 1.7l-4.3 4.3a1.2 1.2 0 0 1-1.7 0l-7-7z" fill="none" stroke="#ececec" stroke-width="1.5" stroke-linejoin="round"/><circle cx="4.6" cy="4.6" r="1" fill="#ececec"/></svg>
<span class="a" style="left:141.8px;top:710.5px;font-size:14.7px;line-height:14.7px;color:#ededed;white-space:nowrap;">12_Malabsorption_...</span>
<svg class="a" style="left:135.0px;top:729px" width="16" height="16" viewBox="0 0 16 16"><path d="M1.6 2.6a1 1 0 0 1 1-1h4.6l7 7a1.2 1.2 0 0 1 0 1.7l-4.3 4.3a1.2 1.2 0 0 1-1.7 0l-7-7z" fill="none" stroke="#ececec" stroke-width="1.5" stroke-linejoin="round"/><circle cx="4.6" cy="4.6" r="1" fill="#ececec"/></svg>
<span class="a" style="left:158.5px;top:730.5px;font-size:14.7px;line-height:14.7px;color:#ededed;white-space:nowrap;">*Abetalipoprotein...</span>
<svg class="a" style="left:135.0px;top:749px" width="16" height="16" viewBox="0 0 16 16"><path d="M1.6 2.6a1 1 0 0 1 1-1h4.6l7 7a1.2 1.2 0 0 1 0 1.7l-4.3 4.3a1.2 1.2 0 0 1-1.7 0l-7-7z" fill="none" stroke="#ececec" stroke-width="1.5" stroke-linejoin="round"/><circle cx="4.6" cy="4.6" r="1" fill="#ececec"/></svg>
<span class="a" style="left:158.5px;top:750.5px;font-size:14.7px;line-height:14.7px;color:#ededed;white-space:nowrap;">*Achlorhydria</span>
<svg class="a" style="left:135.0px;top:769px" width="16" height="16" viewBox="0 0 16 16"><path d="M1.6 2.6a1 1 0 0 1 1-1h4.6l7 7a1.2 1.2 0 0 1 0 1.7l-4.3 4.3a1.2 1.2 0 0 1-1.7 0l-7-7z" fill="none" stroke="#ececec" stroke-width="1.5" stroke-linejoin="round"/><circle cx="4.6" cy="4.6" r="1" fill="#ececec"/></svg>
<span class="a" style="left:158.5px;top:770.5px;font-size:14.7px;line-height:14.7px;color:#ededed;white-space:nowrap;">*Dumping_Syndr...</span>
<svg class="a" style="left:135.0px;top:789px" width="16" height="16" viewBox="0 0 16 16"><path d="M1.6 2.6a1 1 0 0 1 1-1h4.6l7 7a1.2 1.2 0 0 1 0 1.7l-4.3 4.3a1.2 1.2 0 0 1-1.7 0l-7-7z" fill="none" stroke="#ececec" stroke-width="1.5" stroke-linejoin="round"/><circle cx="4.6" cy="4.6" r="1" fill="#ececec"/></svg>
<span class="a" style="left:158.5px;top:790.5px;font-size:14.7px;line-height:14.7px;color:#ededed;white-space:nowrap;">*Enteropeptidase...</span>
<svg class="a" style="left:135.0px;top:809px" width="16" height="16" viewBox="0 0 16 16"><path d="M1.6 2.6a1 1 0 0 1 1-1h4.6l7 7a1.2 1.2 0 0 1 0 1.7l-4.3 4.3a1.2 1.2 0 0 1-1.7 0l-7-7z" fill="none" stroke="#ececec" stroke-width="1.5" stroke-linejoin="round"/><circle cx="4.6" cy="4.6" r="1" fill="#ececec"/></svg>
<span class="a" style="left:158.5px;top:810.5px;font-size:14.7px;line-height:14.7px;color:#ededed;white-space:nowrap;">*Gastrojejunosto...</span>
<div class="a" style="left:11.5px;top:827.5px;width:281.1px;height:20px;background:#587b9f"></div>
<svg class="a" style="left:135.0px;top:829px" width="16" height="16" viewBox="0 0 16 16"><path d="M1.6 2.6a1 1 0 0 1 1-1h4.6l7 7a1.2 1.2 0 0 1 0 1.7l-4.3 4.3a1.2 1.2 0 0 1-1.7 0l-7-7z" fill="none" stroke="#ececec" stroke-width="1.5" stroke-linejoin="round"/><circle cx="4.6" cy="4.6" r="1" fill="#ececec"/></svg>
<span class="a" style="left:158.5px;top:830.5px;font-size:14.7px;line-height:14.7px;color:#ededed;white-space:nowrap;">01_Celiac_disease</span>
<svg class="a" style="left:135.0px;top:849px" width="16" height="16" viewBox="0 0 16 16"><path d="M1.6 2.6a1 1 0 0 1 1-1h4.6l7 7a1.2 1.2 0 0 1 0 1.7l-4.3 4.3a1.2 1.2 0 0 1-1.7 0l-7-7z" fill="none" stroke="#ececec" stroke-width="1.5" stroke-linejoin="round"/><circle cx="4.6" cy="4.6" r="1" fill="#ececec"/></svg>
<span class="a" style="left:158.5px;top:850.5px;font-size:14.7px;line-height:14.7px;color:#ededed;white-space:nowrap;">02_Lactose_intol...</span>
<svg class="a" style="left:135.0px;top:869px" width="16" height="16" viewBox="0 0 16 16"><path d="M1.6 2.6a1 1 0 0 1 1-1h4.6l7 7a1.2 1.2 0 0 1 0 1.7l-4.3 4.3a1.2 1.2 0 0 1-1.7 0l-7-7z" fill="none" stroke="#ececec" stroke-width="1.5" stroke-linejoin="round"/><circle cx="4.6" cy="4.6" r="1" fill="#ececec"/></svg>
<span class="a" style="left:158.5px;top:870.5px;font-size:14.7px;line-height:14.7px;color:#ededed;white-space:nowrap;">03_Pancreatic_in...</span>
<svg class="a" style="left:135.0px;top:889px" width="16" height="16" viewBox="0 0 16 16"><path d="M1.6 2.6a1 1 0 0 1 1-1h4.6l7 7a1.2 1.2 0 0 1 0 1.7l-4.3 4.3a1.2 1.2 0 0 1-1.7 0l-7-7z" fill="none" stroke="#ececec" stroke-width="1.5" stroke-linejoin="round"/><circle cx="4.6" cy="4.6" r="1" fill="#ececec"/></svg>
<span class="a" style="left:158.5px;top:890.5px;font-size:14.7px;line-height:14.7px;color:#ededed;white-space:nowrap;">04_Tropical_sprue</span>
<svg class="a" style="left:117px;top:911px" width="10" height="12" viewBox="0 0 10 12"><path d="M3 2l4.5 4L3 10" fill="none" stroke="#9b9b9b" stroke-width="1.5"/></svg>
<svg class="a" style="left:135.0px;top:909px" width="16" height="16" viewBox="0 0 16 16"><path d="M1.6 2.6a1 1 0 0 1 1-1h4.6l7 7a1.2 1.2 0 0 1 0 1.7l-4.3 4.3a1.2 1.2 0 0 1-1.7 0l-7-7z" fill="none" stroke="#ececec" stroke-width="1.5" stroke-linejoin="round"/><circle cx="4.6" cy="4.6" r="1" fill="#ececec"/></svg>
<span class="a" style="left:158.5px;top:910.5px;font-size:14.7px;line-height:14.7px;color:#ededed;white-space:nowrap;">05_Whipple_dise...</span>
<svg class="a" style="left:100px;top:931px" width="10" height="12" viewBox="0 0 10 12"><path d="M3 2l4.5 4L3 10" fill="none" stroke="#9b9b9b" stroke-width="1.5"/></svg>
<svg class="a" style="left:118.3px;top:929px" width="16" height="16" viewBox="0 0 16 16"><path d="M1.6 2.6a1 1 0 0 1 1-1h4.6l7 7a1.2 1.2 0 0 1 0 1.7l-4.3 4.3a1.2 1.2 0 0 1-1.7 0l-7-7z" fill="none" stroke="#ececec" stroke-width="1.5" stroke-linejoin="round"/><circle cx="4.6" cy="4.6" r="1" fill="#ececec"/></svg>
<span class="a" style="left:141.8px;top:930.5px;font-size:14.7px;line-height:14.7px;color:#ededed;white-space:nowrap;">13_Inflammatory_B...</span>
<svg class="a" style="left:118.3px;top:949px" width="16" height="16" viewBox="0 0 16 16"><path d="M1.6 2.6a1 1 0 0 1 1-1h4.6l7 7a1.2 1.2 0 0 1 0 1.7l-4.3 4.3a1.2 1.2 0 0 1-1.7 0l-7-7z" fill="none" stroke="#ececec" stroke-width="1.5" stroke-linejoin="round"/><circle cx="4.6" cy="4.6" r="1" fill="#ececec"/></svg>
<span class="a" style="left:141.8px;top:950.5px;font-size:14.7px;line-height:14.7px;color:#ededed;white-space:nowrap;">15_Irritable_bowel_...</span>
<svg class="a" style="left:100px;top:971px" width="10" height="12" viewBox="0 0 10 12"><path d="M3 2l4.5 4L3 10" fill="none" stroke="#9b9b9b" stroke-width="1.5"/></svg>
<svg class="a" style="left:118.3px;top:969px" width="16" height="16" viewBox="0 0 16 16"><path d="M1.6 2.6a1 1 0 0 1 1-1h4.6l7 7a1.2 1.2 0 0 1 0 1.7l-4.3 4.3a1.2 1.2 0 0 1-1.7 0l-7-7z" fill="none" stroke="#ececec" stroke-width="1.5" stroke-linejoin="round"/><circle cx="4.6" cy="4.6" r="1" fill="#ececec"/></svg>
<span class="a" style="left:141.8px;top:970.5px;font-size:14.7px;line-height:14.7px;color:#ededed;white-space:nowrap;">16_Appendicitis</span>
<svg class="a" style="left:100px;top:991px" width="10" height="12" viewBox="0 0 10 12"><path d="M3 2l4.5 4L3 10" fill="none" stroke="#9b9b9b" stroke-width="1.5"/></svg>
<svg class="a" style="left:118.3px;top:989px" width="16" height="16" viewBox="0 0 16 16"><path d="M1.6 2.6a1 1 0 0 1 1-1h4.6l7 7a1.2 1.2 0 0 1 0 1.7l-4.3 4.3a1.2 1.2 0 0 1-1.7 0l-7-7z" fill="none" stroke="#ececec" stroke-width="1.5" stroke-linejoin="round"/><circle cx="4.6" cy="4.6" r="1" fill="#ececec"/></svg>
<span class="a" style="left:141.8px;top:990.5px;font-size:14.7px;line-height:14.7px;color:#ededed;white-space:nowrap;">17_Diverticula_of_t...</span>
<svg class="a" style="left:118.3px;top:1009px" width="16" height="16" viewBox="0 0 16 16"><path d="M1.6 2.6a1 1 0 0 1 1-1h4.6l7 7a1.2 1.2 0 0 1 0 1.7l-4.3 4.3a1.2 1.2 0 0 1-1.7 0l-7-7z" fill="none" stroke="#ececec" stroke-width="1.5" stroke-linejoin="round"/><circle cx="4.6" cy="4.6" r="1" fill="#ececec"/></svg>
<span class="a" style="left:141.8px;top:1010.5px;font-size:14.7px;line-height:14.7px;color:#ededed;white-space:nowrap;">18_Malabsorption...</span>
<svg class="a" style="left:100px;top:1031px" width="10" height="12" viewBox="0 0 10 12"><path d="M3 2l4.5 4L3 10" fill="none" stroke="#9b9b9b" stroke-width="1.5"/></svg>
<svg class="a" style="left:118.3px;top:1029px" width="16" height="16" viewBox="0 0 16 16"><path d="M1.6 2.6a1 1 0 0 1 1-1h4.6l7 7a1.2 1.2 0 0 1 0 1.7l-4.3 4.3a1.2 1.2 0 0 1-1.7 0l-7-7z" fill="none" stroke="#ececec" stroke-width="1.5" stroke-linejoin="round"/><circle cx="4.6" cy="4.6" r="1" fill="#ececec"/></svg>
<span class="a" style="left:141.8px;top:1030.5px;font-size:14.7px;line-height:14.7px;color:#ededed;white-space:nowrap;">19_Metabolic...</span>
</div>
<div class="a" style="left:300.5px;top:9px;width:70px;height:27px;border-radius:14px;background:#7cc4f7"></div>
<div class="a" style="left:303px;top:12px;width:21px;height:21px;border-radius:50%;background:#454545"></div>
<span class="a" style="left:328px;top:16.7px;font-size:11.9px;line-height:11.9px;color:#1d2a35;white-space:nowrap;font-weight:bold;">Cards</span>
<div class="a" style="left:386px;top:12.5px;width:258px;height:21px;border-radius:4px;background:#1f1f1f;border:1px solid #3a3a3a;overflow:hidden"><span class="a" style="right:26px;top:0.5px;font-size:14.6px;line-height:18px;color:#f2f2f2;white-space:nowrap">n\_Syndromes::01\_Celiac\_disease</span></div>
<div class="a" style="left:624px;top:14px;width:18px;height:18px;border-radius:4px;background:#0a6cf0"></div>
<svg class="a" style="left:627px;top:17px" width="12" height="12" viewBox="0 0 12 12"><path d="M2.5 4.5L6 8l3.5-3.5" fill="none" stroke="#fff" stroke-width="1.7"/></svg>
<div class="a" style="left:301px;top:43px;width:348px;height:1100px;background:#222"></div>
<div class="a" style="left:301px;top:43px;width:348px;height:25px;background:#262626"></div>
<div class="a" style="left:410.5px;top:46px;width:2px;height:19px;background:#7d7d7d"></div>
<div class="a" style="left:522.3px;top:46px;width:2px;height:19px;background:#7d7d7d"></div>
<div class="a" style="left:633.5px;top:46px;width:2px;height:19px;background:#7d7d7d"></div>
<span class="a" style="left:328px;top:48.3px;font-size:13.6px;line-height:13.6px;color:#dedede;white-space:nowrap;font-weight:500;">Sort Field</span>
<span class="a" style="left:438px;top:48.3px;font-size:13.6px;line-height:13.6px;color:#dedede;white-space:nowrap;">Card Type</span>
<span class="a" style="left:560px;top:48.3px;font-size:13.6px;line-height:13.6px;color:#dedede;white-space:nowrap;">Due</span>
<svg class="a" style="left:616px;top:50px" width="12" height="10" viewBox="0 0 12 10"><path d="M2 3l4 4 4-4" fill="none" stroke="#dcdcdc" stroke-width="1.5"/></svg>
<div class="a" style="left:301px;top:68.0px;width:348px;height:24.42px;background:#262626;border-bottom:1px solid #1c1c1c"></div>
<div class="a" style="left:411.5px;top:68.0px;width:1.5px;height:24.42px;background:#1c1c1c"></div>
<div class="a" style="left:523.3px;top:68.0px;width:1.5px;height:24.42px;background:#1c1c1c"></div>
<div class="a" style="left:634.5px;top:68.0px;width:1.5px;height:24.42px;background:#1c1c1c"></div>
<span class="a" style="left:307px;top:71.9px;font-size:14.4px;line-height:14.4px;color:#f4f4f4;white-space:nowrap;">{{c2::Celiac}} …</span>
<span class="a" style="left:418px;top:71.8px;font-size:14.7px;line-height:14.7px;color:#f4f4f4;white-space:nowrap;">Cloze 2</span>
<span class="a" style="left:538px;top:71.4px;font-size:15.6px;line-height:15.6px;color:#f4f4f4;white-space:nowrap;letter-spacing:.3px;">2028-05-28</span>
<div class="a" style="left:638px;top:71.0px;width:10px;height:18px;overflow:hidden"><span class="a" style="left:2px;top:1px;font-size:15px;line-height:16px;color:#f4f4f4">A</span></div>
<div class="a" style="left:301px;top:92.4px;width:348px;height:24.42px;background:#2c2c2c;border-bottom:1px solid #1c1c1c"></div>
<div class="a" style="left:411.5px;top:92.4px;width:1.5px;height:24.42px;background:#1c1c1c"></div>
<div class="a" style="left:523.3px;top:92.4px;width:1.5px;height:24.42px;background:#1c1c1c"></div>
<div class="a" style="left:634.5px;top:92.4px;width:1.5px;height:24.42px;background:#1c1c1c"></div>
<span class="a" style="left:307px;top:96.4px;font-size:14.4px;line-height:14.4px;color:#f4f4f4;white-space:nowrap;">Which type of …</span>
<span class="a" style="left:418px;top:96.2px;font-size:14.7px;line-height:14.7px;color:#f4f4f4;white-space:nowrap;">Cloze 1</span>
<span class="a" style="left:538px;top:95.8px;font-size:15.6px;line-height:15.6px;color:#f4f4f4;white-space:nowrap;letter-spacing:.3px;">2027-06-13</span>
<div class="a" style="left:638px;top:95.4px;width:10px;height:18px;overflow:hidden"><span class="a" style="left:2px;top:1px;font-size:15px;line-height:16px;color:#f4f4f4">A</span></div>
<div class="a" style="left:301px;top:116.8px;width:348px;height:24.42px;background:#262626;border-bottom:1px solid #1c1c1c"></div>
<div class="a" style="left:411.5px;top:116.8px;width:1.5px;height:24.42px;background:#1c1c1c"></div>
<div class="a" style="left:523.3px;top:116.8px;width:1.5px;height:24.42px;background:#1c1c1c"></div>
<div class="a" style="left:634.5px;top:116.8px;width:1.5px;height:24.42px;background:#1c1c1c"></div>
<span class="a" style="left:307px;top:120.8px;font-size:14.4px;line-height:14.4px;color:#f4f4f4;white-space:nowrap;">Is celiac disea…</span>
<span class="a" style="left:418px;top:120.6px;font-size:14.7px;line-height:14.7px;color:#f4f4f4;white-space:nowrap;">Cloze 1</span>
<span class="a" style="left:538px;top:120.2px;font-size:15.6px;line-height:15.6px;color:#f4f4f4;white-space:nowrap;letter-spacing:.3px;">2027-05-19</span>
<div class="a" style="left:638px;top:119.8px;width:10px;height:18px;overflow:hidden"><span class="a" style="left:2px;top:1px;font-size:15px;line-height:16px;color:#f4f4f4">A</span></div>
<div class="a" style="left:301px;top:141.3px;width:348px;height:24.42px;background:#2c2c2c;border-bottom:1px solid #1c1c1c"></div>
<div class="a" style="left:411.5px;top:141.3px;width:1.5px;height:24.42px;background:#1c1c1c"></div>
<div class="a" style="left:523.3px;top:141.3px;width:1.5px;height:24.42px;background:#1c1c1c"></div>
<div class="a" style="left:634.5px;top:141.3px;width:1.5px;height:24.42px;background:#1c1c1c"></div>
<span class="a" style="left:307px;top:145.2px;font-size:14.4px;line-height:14.4px;color:#f4f4f4;white-space:nowrap;">Which immun…</span>
<span class="a" style="left:418px;top:145.1px;font-size:14.7px;line-height:14.7px;color:#f4f4f4;white-space:nowrap;">Cloze 1</span>
<span class="a" style="left:538px;top:144.6px;font-size:15.6px;line-height:15.6px;color:#f4f4f4;white-space:nowrap;letter-spacing:.3px;">2027-04-23</span>
<div class="a" style="left:638px;top:144.3px;width:10px;height:18px;overflow:hidden"><span class="a" style="left:2px;top:1px;font-size:15px;line-height:16px;color:#f4f4f4">A</span></div>
<div class="a" style="left:301px;top:165.7px;width:348px;height:24.42px;background:#262626;border-bottom:1px solid #1c1c1c"></div>
<div class="a" style="left:411.5px;top:165.7px;width:1.5px;height:24.42px;background:#1c1c1c"></div>
<div class="a" style="left:523.3px;top:165.7px;width:1.5px;height:24.42px;background:#1c1c1c"></div>
<div class="a" style="left:634.5px;top:165.7px;width:1.5px;height:24.42px;background:#1c1c1c"></div>
<span class="a" style="left:307px;top:169.6px;font-size:14.4px;line-height:14.4px;color:#f4f4f4;white-space:nowrap;">{{c4::Celiac}} …</span>
<span class="a" style="left:418px;top:169.5px;font-size:14.7px;line-height:14.7px;color:#f4f4f4;white-space:nowrap;">Cloze 4</span>
<span class="a" style="left:538px;top:169.0px;font-size:15.6px;line-height:15.6px;color:#f4f4f4;white-space:nowrap;letter-spacing:.3px;">2027-01-24</span>
<div class="a" style="left:638px;top:168.7px;width:10px;height:18px;overflow:hidden"><span class="a" style="left:2px;top:1px;font-size:15px;line-height:16px;color:#f4f4f4">A</span></div>
<div class="a" style="left:301px;top:190.1px;width:348px;height:24.42px;background:#2c2c2c;border-bottom:1px solid #1c1c1c"></div>
<div class="a" style="left:411.5px;top:190.1px;width:1.5px;height:24.42px;background:#1c1c1c"></div>
<div class="a" style="left:523.3px;top:190.1px;width:1.5px;height:24.42px;background:#1c1c1c"></div>
<div class="a" style="left:634.5px;top:190.1px;width:1.5px;height:24.42px;background:#1c1c1c"></div>
<span class="a" style="left:307px;top:194.0px;font-size:14.4px;line-height:14.4px;color:#f4f4f4;white-space:nowrap;">{{c4::Celiac}} …</span>
<span class="a" style="left:418px;top:193.9px;font-size:14.7px;line-height:14.7px;color:#f4f4f4;white-space:nowrap;">Cloze 5</span>
<span class="a" style="left:538px;top:193.5px;font-size:15.6px;line-height:15.6px;color:#f4f4f4;white-space:nowrap;letter-spacing:.3px;">2026-11-09</span>
<div class="a" style="left:638px;top:193.1px;width:10px;height:18px;overflow:hidden"><span class="a" style="left:2px;top:1px;font-size:15px;line-height:16px;color:#f4f4f4">A</span></div>
<div class="a" style="left:301px;top:214.5px;width:348px;height:24.42px;background:#262626;border-bottom:1px solid #1c1c1c"></div>
<div class="a" style="left:411.5px;top:214.5px;width:1.5px;height:24.42px;background:#1c1c1c"></div>
<div class="a" style="left:523.3px;top:214.5px;width:1.5px;height:24.42px;background:#1c1c1c"></div>
<div class="a" style="left:634.5px;top:214.5px;width:1.5px;height:24.42px;background:#1c1c1c"></div>
<span class="a" style="left:307px;top:218.5px;font-size:14.4px;line-height:14.4px;color:#f4f4f4;white-space:nowrap;">{{c2::Celiac}} …</span>
<span class="a" style="left:418px;top:218.3px;font-size:14.7px;line-height:14.7px;color:#f4f4f4;white-space:nowrap;">Cloze 1</span>
<span class="a" style="left:538px;top:217.9px;font-size:15.6px;line-height:15.6px;color:#f4f4f4;white-space:nowrap;letter-spacing:.3px;">2026-10-04</span>
<div class="a" style="left:638px;top:217.5px;width:10px;height:18px;overflow:hidden"><span class="a" style="left:2px;top:1px;font-size:15px;line-height:16px;color:#f4f4f4">A</span></div>
<div class="a" style="left:301px;top:238.9px;width:348px;height:24.42px;background:#2c2c2c;border-bottom:1px solid #1c1c1c"></div>
<div class="a" style="left:411.5px;top:238.9px;width:1.5px;height:24.42px;background:#1c1c1c"></div>
<div class="a" style="left:523.3px;top:238.9px;width:1.5px;height:24.42px;background:#1c1c1c"></div>
<div class="a" style="left:634.5px;top:238.9px;width:1.5px;height:24.42px;background:#1c1c1c"></div>
<span class="a" style="left:307px;top:242.9px;font-size:14.4px;line-height:14.4px;color:#f4f4f4;white-space:nowrap;">{{c4::Celiac}} …</span>
<span class="a" style="left:418px;top:242.7px;font-size:14.7px;line-height:14.7px;color:#f4f4f4;white-space:nowrap;">Cloze 3</span>
<span class="a" style="left:538px;top:242.3px;font-size:15.6px;line-height:15.6px;color:#f4f4f4;white-space:nowrap;letter-spacing:.3px;">2026-10-03</span>
<div class="a" style="left:638px;top:241.9px;width:10px;height:18px;overflow:hidden"><span class="a" style="left:2px;top:1px;font-size:15px;line-height:16px;color:#f4f4f4">A</span></div>
<div class="a" style="left:301px;top:263.4px;width:348px;height:24.42px;background:#262626;border-bottom:1px solid #1c1c1c"></div>
<div class="a" style="left:411.5px;top:263.4px;width:1.5px;height:24.42px;background:#1c1c1c"></div>
<div class="a" style="left:523.3px;top:263.4px;width:1.5px;height:24.42px;background:#1c1c1c"></div>
<div class="a" style="left:634.5px;top:263.4px;width:1.5px;height:24.42px;background:#1c1c1c"></div>
<span class="a" style="left:307px;top:267.3px;font-size:14.4px;line-height:14.4px;color:#f4f4f4;white-space:nowrap;">Celiac diseas…</span>
<span class="a" style="left:418px;top:267.2px;font-size:14.7px;line-height:14.7px;color:#f4f4f4;white-space:nowrap;">Cloze 2</span>
<span class="a" style="left:538px;top:266.7px;font-size:15.6px;line-height:15.6px;color:#f4f4f4;white-space:nowrap;letter-spacing:.3px;">2026-08-04</span>
<div class="a" style="left:638px;top:266.4px;width:10px;height:18px;overflow:hidden"><span class="a" style="left:2px;top:1px;font-size:15px;line-height:16px;color:#f4f4f4">A</span></div>
<div class="a" style="left:301px;top:287.8px;width:348px;height:24.42px;background:#2c2c2c;border-bottom:1px solid #1c1c1c"></div>
<div class="a" style="left:411.5px;top:287.8px;width:1.5px;height:24.42px;background:#1c1c1c"></div>
<div class="a" style="left:523.3px;top:287.8px;width:1.5px;height:24.42px;background:#1c1c1c"></div>
<div class="a" style="left:634.5px;top:287.8px;width:1.5px;height:24.42px;background:#1c1c1c"></div>
<span class="a" style="left:307px;top:291.7px;font-size:14.4px;line-height:14.4px;color:#f4f4f4;white-space:nowrap;">Celiac diseas…</span>
<span class="a" style="left:418px;top:291.6px;font-size:14.7px;line-height:14.7px;color:#f4f4f4;white-space:nowrap;">Cloze 2</span>
<span class="a" style="left:538px;top:291.1px;font-size:15.6px;line-height:15.6px;color:#f4f4f4;white-space:nowrap;letter-spacing:.3px;">2026-07-17</span>
<div class="a" style="left:638px;top:290.8px;width:10px;height:18px;overflow:hidden"><span class="a" style="left:2px;top:1px;font-size:15px;line-height:16px;color:#f4f4f4">A</span></div>
<div class="a" style="left:301px;top:312.2px;width:348px;height:24.42px;background:#262626;border-bottom:1px solid #1c1c1c"></div>
<div class="a" style="left:411.5px;top:312.2px;width:1.5px;height:24.42px;background:#1c1c1c"></div>
<div class="a" style="left:523.3px;top:312.2px;width:1.5px;height:24.42px;background:#1c1c1c"></div>
<div class="a" style="left:634.5px;top:312.2px;width:1.5px;height:24.42px;background:#1c1c1c"></div>
<span class="a" style="left:307px;top:316.1px;font-size:14.4px;line-height:14.4px;color:#f4f4f4;white-space:nowrap;">Celiac diseas…</span>
<span class="a" style="left:418px;top:316.0px;font-size:14.7px;line-height:14.7px;color:#f4f4f4;white-space:nowrap;">Cloze 1</span>
<span class="a" style="left:538px;top:315.6px;font-size:15.6px;line-height:15.6px;color:#f4f4f4;white-space:nowrap;letter-spacing:.3px;">2026-07-10</span>
<div class="a" style="left:638px;top:315.2px;width:10px;height:18px;overflow:hidden"><span class="a" style="left:2px;top:1px;font-size:15px;line-height:16px;color:#f4f4f4">A</span></div>
<div class="a" style="left:301px;top:336.6px;width:348px;height:24.42px;background:#2c2c2c;border-bottom:1px solid #1c1c1c"></div>
<div class="a" style="left:411.5px;top:336.6px;width:1.5px;height:24.42px;background:#1c1c1c"></div>
<div class="a" style="left:523.3px;top:336.6px;width:1.5px;height:24.42px;background:#1c1c1c"></div>
<div class="a" style="left:634.5px;top:336.6px;width:1.5px;height:24.42px;background:#1c1c1c"></div>
<span class="a" style="left:307px;top:340.6px;font-size:14.4px;line-height:14.4px;color:#f4f4f4;white-space:nowrap;">What is the m…</span>
<span class="a" style="left:418px;top:340.4px;font-size:14.7px;line-height:14.7px;color:#f4f4f4;white-space:nowrap;">Cloze 1</span>
<span class="a" style="left:538px;top:340.0px;font-size:15.6px;line-height:15.6px;color:#f4f4f4;white-space:nowrap;letter-spacing:.3px;">2026-07-07</span>
<div class="a" style="left:638px;top:339.6px;width:10px;height:18px;overflow:hidden"><span class="a" style="left:2px;top:1px;font-size:15px;line-height:16px;color:#f4f4f4">A</span></div>
<div class="a" style="left:301px;top:361.0px;width:348px;height:24.42px;background:#6aa8e2;border-bottom:1px solid #1c1c1c"></div>
<div class="a" style="left:411.5px;top:361.0px;width:1.5px;height:24.42px;background:#f0f6fc"></div>
<div class="a" style="left:523.3px;top:361.0px;width:1.5px;height:24.42px;background:#f0f6fc"></div>
<div class="a" style="left:634.5px;top:361.0px;width:1.5px;height:24.42px;background:#f0f6fc"></div>
<span class="a" style="left:307px;top:365.0px;font-size:14.4px;line-height:14.4px;color:#f4f4f4;white-space:nowrap;">What HLA sub…</span>
<span class="a" style="left:418px;top:364.8px;font-size:14.7px;line-height:14.7px;color:#f4f4f4;white-space:nowrap;">Cloze 1</span>
<span class="a" style="left:538px;top:364.4px;font-size:15.6px;line-height:15.6px;color:#f4f4f4;white-space:nowrap;letter-spacing:.3px;">2026-06-05</span>
<div class="a" style="left:638px;top:364.0px;width:10px;height:18px;overflow:hidden"><span class="a" style="left:2px;top:1px;font-size:15px;line-height:16px;color:#f4f4f4">A</span></div>
<div class="a" style="left:301px;top:385.5px;width:348px;height:24.42px;background:#2c2c2c;border-bottom:1px solid #1c1c1c"></div>
<div class="a" style="left:411.5px;top:385.5px;width:1.5px;height:24.42px;background:#1c1c1c"></div>
<div class="a" style="left:523.3px;top:385.5px;width:1.5px;height:24.42px;background:#1c1c1c"></div>
<div class="a" style="left:634.5px;top:385.5px;width:1.5px;height:24.42px;background:#1c1c1c"></div>
<span class="a" style="left:307px;top:389.4px;font-size:14.4px;line-height:14.4px;color:#f4f4f4;white-space:nowrap;">Once absorbe…</span>
<span class="a" style="left:418px;top:389.3px;font-size:14.7px;line-height:14.7px;color:#f4f4f4;white-space:nowrap;">Cloze 1</span>
<span class="a" style="left:538px;top:388.8px;font-size:15.6px;line-height:15.6px;color:#f4f4f4;white-space:nowrap;letter-spacing:.3px;">2026-05-13</span>
<div class="a" style="left:638px;top:388.5px;width:10px;height:18px;overflow:hidden"><span class="a" style="left:2px;top:1px;font-size:15px;line-height:16px;color:#f4f4f4">A</span></div>
<div class="a" style="left:301px;top:409.9px;width:348px;height:24.42px;background:#262626;border-bottom:1px solid #1c1c1c"></div>
<div class="a" style="left:411.5px;top:409.9px;width:1.5px;height:24.42px;background:#1c1c1c"></div>
<div class="a" style="left:523.3px;top:409.9px;width:1.5px;height:24.42px;background:#1c1c1c"></div>
<div class="a" style="left:634.5px;top:409.9px;width:1.5px;height:24.42px;background:#1c1c1c"></div>
<span class="a" style="left:307px;top:413.8px;font-size:14.4px;line-height:14.4px;color:#f4f4f4;white-space:nowrap;">{{c4::Celiac}} …</span>
<span class="a" style="left:418px;top:413.7px;font-size:14.7px;line-height:14.7px;color:#f4f4f4;white-space:nowrap;">Cloze 2</span>
<span class="a" style="left:538px;top:413.2px;font-size:15.6px;line-height:15.6px;color:#f4f4f4;white-space:nowrap;letter-spacing:.3px;">2026-04-12</span>
<div class="a" style="left:638px;top:412.9px;width:10px;height:18px;overflow:hidden"><span class="a" style="left:2px;top:1px;font-size:15px;line-height:16px;color:#f4f4f4">A</span></div>
<div class="a" style="left:301px;top:434.3px;width:348px;height:24.42px;background:#2c2c2c;border-bottom:1px solid #1c1c1c"></div>
<div class="a" style="left:411.5px;top:434.3px;width:1.5px;height:24.42px;background:#1c1c1c"></div>
<div class="a" style="left:523.3px;top:434.3px;width:1.5px;height:24.42px;background:#1c1c1c"></div>
<div class="a" style="left:634.5px;top:434.3px;width:1.5px;height:24.42px;background:#1c1c1c"></div>
<span class="a" style="left:307px;top:438.2px;font-size:14.4px;line-height:14.4px;color:#f4f4f4;white-space:nowrap;">{{c2::Celiac}} …</span>
<span class="a" style="left:418px;top:438.1px;font-size:14.7px;line-height:14.7px;color:#f4f4f4;white-space:nowrap;">Cloze 2</span>
<span class="a" style="left:538px;top:437.7px;font-size:15.6px;line-height:15.6px;color:#f4f4f4;white-space:nowrap;letter-spacing:.3px;">2026-04-10</span>
<div class="a" style="left:638px;top:437.3px;width:10px;height:18px;overflow:hidden"><span class="a" style="left:2px;top:1px;font-size:15px;line-height:16px;color:#f4f4f4">A</span></div>
<div class="a" style="left:301px;top:458.7px;width:348px;height:24.42px;background:#262626;border-bottom:1px solid #1c1c1c"></div>
<div class="a" style="left:411.5px;top:458.7px;width:1.5px;height:24.42px;background:#1c1c1c"></div>
<div class="a" style="left:523.3px;top:458.7px;width:1.5px;height:24.42px;background:#1c1c1c"></div>
<div class="a" style="left:634.5px;top:458.7px;width:1.5px;height:24.42px;background:#1c1c1c"></div>
<span class="a" style="left:307px;top:462.7px;font-size:14.4px;line-height:14.4px;color:#f4f4f4;white-space:nowrap;">Celiac diseas…</span>
<span class="a" style="left:418px;top:462.5px;font-size:14.7px;line-height:14.7px;color:#f4f4f4;white-space:nowrap;">Cloze 1</span>
<span class="a" style="left:538px;top:462.1px;font-size:15.6px;line-height:15.6px;color:#f4f4f4;white-space:nowrap;letter-spacing:.3px;">2026-04-06</span>
<div class="a" style="left:638px;top:461.7px;width:10px;height:18px;overflow:hidden"><span class="a" style="left:2px;top:1px;font-size:15px;line-height:16px;color:#f4f4f4">A</span></div>
<div class="a" style="left:301px;top:483.1px;width:348px;height:24.42px;background:#2c2c2c;border-bottom:1px solid #1c1c1c"></div>
<div class="a" style="left:411.5px;top:483.1px;width:1.5px;height:24.42px;background:#1c1c1c"></div>
<div class="a" style="left:523.3px;top:483.1px;width:1.5px;height:24.42px;background:#1c1c1c"></div>
<div class="a" style="left:634.5px;top:483.1px;width:1.5px;height:24.42px;background:#1c1c1c"></div>
<span class="a" style="left:307px;top:487.1px;font-size:14.4px;line-height:14.4px;color:#f4f4f4;white-space:nowrap;">{{c2::Celiac}} …</span>
<span class="a" style="left:418px;top:486.9px;font-size:14.7px;line-height:14.7px;color:#f4f4f4;white-space:nowrap;">Cloze 1</span>
<span class="a" style="left:538px;top:486.5px;font-size:15.6px;line-height:15.6px;color:#f4f4f4;white-space:nowrap;letter-spacing:.3px;">2026-03-24</span>
<div class="a" style="left:638px;top:486.1px;width:10px;height:18px;overflow:hidden"><span class="a" style="left:2px;top:1px;font-size:15px;line-height:16px;color:#f4f4f4">A</span></div>
<div class="a" style="left:301px;top:507.6px;width:348px;height:24.42px;background:#262626;border-bottom:1px solid #1c1c1c"></div>
<div class="a" style="left:411.5px;top:507.6px;width:1.5px;height:24.42px;background:#1c1c1c"></div>
<div class="a" style="left:523.3px;top:507.6px;width:1.5px;height:24.42px;background:#1c1c1c"></div>
<div class="a" style="left:634.5px;top:507.6px;width:1.5px;height:24.42px;background:#1c1c1c"></div>
<span class="a" style="left:307px;top:511.5px;font-size:14.4px;line-height:14.4px;color:#f4f4f4;white-space:nowrap;">{{c4::Celiac}} …</span>
<span class="a" style="left:418px;top:511.4px;font-size:14.7px;line-height:14.7px;color:#f4f4f4;white-space:nowrap;">Cloze 1</span>
<span class="a" style="left:538px;top:510.9px;font-size:15.6px;line-height:15.6px;color:#f4f4f4;white-space:nowrap;letter-spacing:.3px;">2026-03-13</span>
<div class="a" style="left:638px;top:510.6px;width:10px;height:18px;overflow:hidden"><span class="a" style="left:2px;top:1px;font-size:15px;line-height:16px;color:#f4f4f4">A</span></div>
<div class="a" style="left:301px;top:532.0px;width:348px;height:24.42px;background:#2c2c2c;border-bottom:1px solid #1c1c1c"></div>
<div class="a" style="left:411.5px;top:532.0px;width:1.5px;height:24.42px;background:#1c1c1c"></div>
<div class="a" style="left:523.3px;top:532.0px;width:1.5px;height:24.42px;background:#1c1c1c"></div>
<div class="a" style="left:634.5px;top:532.0px;width:1.5px;height:24.42px;background:#1c1c1c"></div>
<span class="a" style="left:307px;top:535.9px;font-size:14.4px;line-height:14.4px;color:#f4f4f4;white-space:nowrap;">The dermatitis…</span>
<span class="a" style="left:418px;top:535.8px;font-size:14.7px;line-height:14.7px;color:#f4f4f4;white-space:nowrap;">Cloze 1</span>
<span class="a" style="left:538px;top:535.3px;font-size:15.6px;line-height:15.6px;color:#f4f4f4;white-space:nowrap;letter-spacing:.3px;">2026-03-06</span>
<div class="a" style="left:638px;top:535.0px;width:10px;height:18px;overflow:hidden"><span class="a" style="left:2px;top:1px;font-size:15px;line-height:16px;color:#f4f4f4">A</span></div>
<div class="a" style="left:301px;top:556.4px;width:348px;height:24.42px;background:#262626;border-bottom:1px solid #1c1c1c"></div>
<div class="a" style="left:411.5px;top:556.4px;width:1.5px;height:24.42px;background:#1c1c1c"></div>
<div class="a" style="left:523.3px;top:556.4px;width:1.5px;height:24.42px;background:#1c1c1c"></div>
<div class="a" style="left:634.5px;top:556.4px;width:1.5px;height:24.42px;background:#1c1c1c"></div>
<span class="a" style="left:307px;top:560.3px;font-size:14.4px;line-height:14.4px;color:#f4f4f4;white-space:nowrap;">Celiac diseas…</span>
<span class="a" style="left:418px;top:560.2px;font-size:14.7px;line-height:14.7px;color:#f4f4f4;white-space:nowrap;">Cloze 1</span>
<span class="a" style="left:538px;top:559.8px;font-size:15.6px;line-height:15.6px;color:#f4f4f4;white-space:nowrap;letter-spacing:.3px;">2026-02-23</span>
<div class="a" style="left:638px;top:559.4px;width:10px;height:18px;overflow:hidden"><span class="a" style="left:2px;top:1px;font-size:15px;line-height:16px;color:#f4f4f4">A</span></div>
<div class="a" style="left:301px;top:580.8px;width:348px;height:24.42px;background:#2c2c2c;border-bottom:1px solid #1c1c1c"></div>
<div class="a" style="left:411.5px;top:580.8px;width:1.5px;height:24.42px;background:#1c1c1c"></div>
<div class="a" style="left:523.3px;top:580.8px;width:1.5px;height:24.42px;background:#1c1c1c"></div>
<div class="a" style="left:634.5px;top:580.8px;width:1.5px;height:24.42px;background:#1c1c1c"></div>
<span class="a" style="left:307px;top:584.8px;font-size:14.4px;line-height:14.4px;color:#f4f4f4;white-space:nowrap;">There is an in…</span>
<span class="a" style="left:418px;top:584.6px;font-size:14.7px;line-height:14.7px;color:#f4f4f4;white-space:nowrap;">Cloze 1</span>
<span class="a" style="left:538px;top:584.2px;font-size:15.6px;line-height:15.6px;color:#f4f4f4;white-space:nowrap;letter-spacing:.3px;">2026-02-18</span>
<div class="a" style="left:638px;top:583.8px;width:10px;height:18px;overflow:hidden"><span class="a" style="left:2px;top:1px;font-size:15px;line-height:16px;color:#f4f4f4">A</span></div>
<div class="a" style="left:301px;top:605.2px;width:348px;height:24.42px;background:#262626;border-bottom:1px solid #1c1c1c"></div>
<div class="a" style="left:411.5px;top:605.2px;width:1.5px;height:24.42px;background:#1c1c1c"></div>
<div class="a" style="left:523.3px;top:605.2px;width:1.5px;height:24.42px;background:#1c1c1c"></div>
<div class="a" style="left:634.5px;top:605.2px;width:1.5px;height:24.42px;background:#1c1c1c"></div>
<span class="a" style="left:307px;top:609.2px;font-size:14.4px;line-height:14.4px;color:#f4f4f4;white-space:nowrap;">In patients wit…</span>
<span class="a" style="left:418px;top:609.0px;font-size:14.7px;line-height:14.7px;color:#f4f4f4;white-space:nowrap;">Cloze 1</span>
<span class="a" style="left:538px;top:608.6px;font-size:15.6px;line-height:15.6px;color:#f4f4f4;white-space:nowrap;letter-spacing:.3px;">2026-02-11</span>
<div class="a" style="left:638px;top:608.2px;width:10px;height:18px;overflow:hidden"><span class="a" style="left:2px;top:1px;font-size:15px;line-height:16px;color:#f4f4f4">A</span></div>
<div class="a" style="left:301px;top:629.7px;width:348px;height:24.42px;background:#2c2c2c;border-bottom:1px solid #1c1c1c"></div>
<div class="a" style="left:411.5px;top:629.7px;width:1.5px;height:24.42px;background:#1c1c1c"></div>
<div class="a" style="left:523.3px;top:629.7px;width:1.5px;height:24.42px;background:#1c1c1c"></div>
<div class="a" style="left:634.5px;top:629.7px;width:1.5px;height:24.42px;background:#1c1c1c"></div>
<span class="a" style="left:307px;top:633.6px;font-size:14.4px;line-height:14.4px;color:#f4f4f4;white-space:nowrap;">Celiac diseas…</span>
<span class="a" style="left:418px;top:633.5px;font-size:14.7px;line-height:14.7px;color:#f4f4f4;white-space:nowrap;">Cloze 1</span>
<span class="a" style="left:538px;top:633.0px;font-size:15.6px;line-height:15.6px;color:#f4f4f4;white-space:nowrap;letter-spacing:.3px;">2026-02-09</span>
<div class="a" style="left:638px;top:632.7px;width:10px;height:18px;overflow:hidden"><span class="a" style="left:2px;top:1px;font-size:15px;line-height:16px;color:#f4f4f4">A</span></div>
<div class="a" style="left:301px;top:654.1px;width:348px;height:24.42px;background:#262626;border-bottom:1px solid #1c1c1c"></div>
<div class="a" style="left:411.5px;top:654.1px;width:1.5px;height:24.42px;background:#1c1c1c"></div>
<div class="a" style="left:523.3px;top:654.1px;width:1.5px;height:24.42px;background:#1c1c1c"></div>
<div class="a" style="left:634.5px;top:654.1px;width:1.5px;height:24.42px;background:#1c1c1c"></div>
<span class="a" style="left:307px;top:658.0px;font-size:14.4px;line-height:14.4px;color:#f4f4f4;white-space:nowrap;">Celiac diseas…</span>
<span class="a" style="left:418px;top:657.9px;font-size:14.7px;line-height:14.7px;color:#f4f4f4;white-space:nowrap;">Cloze 1</span>
<span class="a" style="left:538px;top:657.4px;font-size:15.6px;line-height:15.6px;color:#f4f4f4;white-space:nowrap;letter-spacing:.3px;">2026-02-06</span>
<div class="a" style="left:638px;top:657.1px;width:10px;height:18px;overflow:hidden"><span class="a" style="left:2px;top:1px;font-size:15px;line-height:16px;color:#f4f4f4">A</span></div>
<div class="a" style="left:301px;top:678.5px;width:348px;height:24.42px;background:#2c2c2c;border-bottom:1px solid #1c1c1c"></div>
<div class="a" style="left:411.5px;top:678.5px;width:1.5px;height:24.42px;background:#1c1c1c"></div>
<div class="a" style="left:523.3px;top:678.5px;width:1.5px;height:24.42px;background:#1c1c1c"></div>
<div class="a" style="left:634.5px;top:678.5px;width:1.5px;height:24.42px;background:#1c1c1c"></div>
<span class="a" style="left:307px;top:682.4px;font-size:14.4px;line-height:14.4px;color:#f4f4f4;white-space:nowrap;">In celiac disea…</span>
<span class="a" style="left:418px;top:682.3px;font-size:14.7px;line-height:14.7px;color:#f4f4f4;white-space:nowrap;">Cloze 1</span>
<span class="a" style="left:538px;top:681.9px;font-size:15.6px;line-height:15.6px;color:#f4f4f4;white-space:nowrap;letter-spacing:.3px;">2026-01-30</span>
<div class="a" style="left:638px;top:681.5px;width:10px;height:18px;overflow:hidden"><span class="a" style="left:2px;top:1px;font-size:15px;line-height:16px;color:#f4f4f4">A</span></div>
<div class="a" style="left:301px;top:702.9px;width:348px;height:24.42px;background:#262626;border-bottom:1px solid #1c1c1c"></div>
<div class="a" style="left:411.5px;top:702.9px;width:1.5px;height:24.42px;background:#1c1c1c"></div>
<div class="a" style="left:523.3px;top:702.9px;width:1.5px;height:24.42px;background:#1c1c1c"></div>
<div class="a" style="left:634.5px;top:702.9px;width:1.5px;height:24.42px;background:#1c1c1c"></div>
<span class="a" style="left:307px;top:706.9px;font-size:14.4px;line-height:14.4px;color:#f4f4f4;white-space:nowrap;">Celiac diseas…</span>
<span class="a" style="left:418px;top:706.7px;font-size:14.7px;line-height:14.7px;color:#f4f4f4;white-space:nowrap;">Cloze 1</span>
<span class="a" style="left:538px;top:706.3px;font-size:15.6px;line-height:15.6px;color:#f4f4f4;white-space:nowrap;letter-spacing:.3px;">2026-01-29</span>
<div class="a" style="left:638px;top:705.9px;width:10px;height:18px;overflow:hidden"><span class="a" style="left:2px;top:1px;font-size:15px;line-height:16px;color:#f4f4f4">A</span></div>
<div class="a" style="left:301px;top:727.3px;width:348px;height:24.42px;background:#2c2c2c;border-bottom:1px solid #1c1c1c"></div>
<div class="a" style="left:411.5px;top:727.3px;width:1.5px;height:24.42px;background:#1c1c1c"></div>
<div class="a" style="left:523.3px;top:727.3px;width:1.5px;height:24.42px;background:#1c1c1c"></div>
<div class="a" style="left:634.5px;top:727.3px;width:1.5px;height:24.42px;background:#1c1c1c"></div>
<span class="a" style="left:307px;top:731.3px;font-size:14.4px;line-height:14.4px;color:#f4f4f4;white-space:nowrap;">Celiac diseas…</span>
<span class="a" style="left:418px;top:731.1px;font-size:14.7px;line-height:14.7px;color:#f4f4f4;white-space:nowrap;">Cloze 1</span>
<span class="a" style="left:538px;top:730.7px;font-size:15.6px;line-height:15.6px;color:#f4f4f4;white-space:nowrap;letter-spacing:.3px;">2026-01-26</span>
<div class="a" style="left:638px;top:730.3px;width:10px;height:18px;overflow:hidden"><span class="a" style="left:2px;top:1px;font-size:15px;line-height:16px;color:#f4f4f4">A</span></div>
<div class="a" style="left:301px;top:751.8px;width:348px;height:24.42px;background:#262626;border-bottom:1px solid #1c1c1c"></div>
<div class="a" style="left:411.5px;top:751.8px;width:1.5px;height:24.42px;background:#1c1c1c"></div>
<div class="a" style="left:523.3px;top:751.8px;width:1.5px;height:24.42px;background:#1c1c1c"></div>
<div class="a" style="left:634.5px;top:751.8px;width:1.5px;height:24.42px;background:#1c1c1c"></div>
<span class="a" style="left:307px;top:755.7px;font-size:14.4px;line-height:14.4px;color:#f4f4f4;white-space:nowrap;">Celiac diseas…</span>
<span class="a" style="left:418px;top:755.6px;font-size:14.7px;line-height:14.7px;color:#f4f4f4;white-space:nowrap;">Cloze 1</span>
<span class="a" style="left:538px;top:755.1px;font-size:15.6px;line-height:15.6px;color:#f4f4f4;white-space:nowrap;letter-spacing:.3px;">2026-01-24</span>
<div class="a" style="left:638px;top:754.8px;width:10px;height:18px;overflow:hidden"><span class="a" style="left:2px;top:1px;font-size:15px;line-height:16px;color:#f4f4f4">A</span></div>
<div class="a" style="left:301px;top:776.2px;width:348px;height:24.42px;background:#2c2c2c;border-bottom:1px solid #1c1c1c"></div>
<div class="a" style="left:411.5px;top:776.2px;width:1.5px;height:24.42px;background:#1c1c1c"></div>
<div class="a" style="left:523.3px;top:776.2px;width:1.5px;height:24.42px;background:#1c1c1c"></div>
<div class="a" style="left:634.5px;top:776.2px;width:1.5px;height:24.42px;background:#1c1c1c"></div>
<span class="a" style="left:307px;top:780.1px;font-size:14.4px;line-height:14.4px;color:#f4f4f4;white-space:nowrap;">Celiac diseas…</span>
<span class="a" style="left:418px;top:780.0px;font-size:14.7px;line-height:14.7px;color:#f4f4f4;white-space:nowrap;">Cloze 1</span>
<span class="a" style="left:538px;top:779.5px;font-size:15.6px;line-height:15.6px;color:#f4f4f4;white-space:nowrap;letter-spacing:.3px;">2026-01-24</span>
<div class="a" style="left:638px;top:779.2px;width:10px;height:18px;overflow:hidden"><span class="a" style="left:2px;top:1px;font-size:15px;line-height:16px;color:#f4f4f4">A</span></div>
<div class="a" style="left:661.2px;top:8.5px;width:75.79999999999995px;height:23.0px;background:#3a3a3a;border-radius:4px;box-shadow:0 1px 0 #1e1e1e"></div>
<span class="a" style="left:699.0999999999999px;top:13.9px;font-size:16.6px;line-height:16.6px;color:#f2f2f2;white-space:nowrap;transform:translateX(-50%);">Fields...</span>
<div class="a" style="left:739px;top:8.5px;width:77.5px;height:23.0px;background:#3a3a3a;border-radius:4px;box-shadow:0 1px 0 #1e1e1e"></div>
<span class="a" style="left:777.75px;top:13.9px;font-size:16.6px;line-height:16.6px;color:#f2f2f2;white-space:nowrap;transform:translateX(-50%);">Cards...</span>
<div class="a" style="left:818.5px;top:8.5px;width:76.90000000000009px;height:23.0px;background:#3a3a3a;border-radius:4px;box-shadow:0 1px 0 #1e1e1e"></div>
<span class="a" style="left:856.95px;top:13.9px;font-size:16.6px;line-height:16.6px;color:#f2f2f2;white-space:nowrap;transform:translateX(-50%);">Preview</span>
<div class="a" style="left:903.4000000000001px;top:8.5px;width:41.59999999999991px;height:23.0px;background:#3a3a3a;border-radius:4px;box-shadow:0 1px 0 #1e1e1e"></div>
<svg class="a" style="left:915px;top:11px" width="18" height="18" viewBox="0 0 18 18"><path fill="#fff" d="M7.6 1h2.8l.4 2.2 1.4.8 2.1-.8 1.4 2.4-1.7 1.5v1.8l1.7 1.5-1.4 2.4-2.1-.8-1.4.8-.4 2.2H7.6l-.4-2.2-1.4-.8-2.1.8-1.4-2.4L4 9.9V8.1L2.3 6.6l1.4-2.4 2.1.8 1.4-.8z"/><circle cx="9" cy="9" r="2.6" fill="#3a3a3a"/></svg>
<div class="a" style="left:953px;top:8.5px;width:24.40000000000009px;height:23.0px;background:#383838;border-radius:4px;box-shadow:0 1px 0 #1e1e1e"></div>
<div class="a" style="left:979px;top:8.5px;width:24.799999999999955px;height:23.0px;background:#383838;border-radius:4px;box-shadow:0 1px 0 #1e1e1e"></div>
<div class="a" style="left:1006px;top:8.5px;width:24.299999999999955px;height:23.0px;background:#383838;border-radius:4px;box-shadow:0 1px 0 #1e1e1e"></div>
<div class="a" style="left:1037.8px;top:8.5px;width:24.200000000000045px;height:23.0px;background:#383838;border-radius:4px;box-shadow:0 1px 0 #1e1e1e"></div>
<div class="a" style="left:1064px;top:8.5px;width:24.40000000000009px;height:23.0px;background:#383838;border-radius:4px;box-shadow:0 1px 0 #1e1e1e"></div>
<span class="a" style="left:958px;top:13.2px;font-size:15px;line-height:15px;color:#8a8a8a;white-space:nowrap;font-weight:bold;">B</span>
<span class="a" style="left:987px;top:13.2px;font-size:15px;line-height:15px;color:#8a8a8a;white-space:nowrap;font-style:italic;">I</span>
<span class="a" style="left:1012px;top:13.2px;font-size:15px;line-height:15px;color:#8a8a8a;white-space:nowrap;text-decoration:underline;">U</span>
<svg class="a" style="left:1041px;top:12px" width="18" height="16" viewBox="0 0 18 16"><path d="M2 5l8 8M10 5l-8 8" stroke="#8a8a8a" stroke-width="1.4"/><text x="11.5" y="6.5" font-size="6.5" fill="#8a8a8a" font-family="Liberation Sans">2</text></svg>
<svg class="a" style="left:1068px;top:12px" width="18" height="16" viewBox="0 0 18 16"><path d="M2 3l8 8M10 3l-8 8" stroke="#8a8a8a" stroke-width="1.4"/><text x="11.5" y="15" font-size="6.5" fill="#8a8a8a" font-family="Liberation Sans">2</text></svg>
<div class="a" style="left:661px;top:39px;width:24px;height:23.599999999999994px;background:#383838;border-radius:4px;box-shadow:0 1px 0 #1e1e1e"></div>
<div class="a" style="left:687.5px;top:39px;width:18.299999999999955px;height:23.599999999999994px;background:#383838;border-radius:4px;box-shadow:0 1px 0 #1e1e1e"></div>
<div class="a" style="left:707.5px;top:39px;width:24.299999999999955px;height:23.599999999999994px;background:#383838;border-radius:4px;box-shadow:0 1px 0 #1e1e1e"></div>
<div class="a" style="left:734px;top:39px;width:18px;height:23.599999999999994px;background:#383838;border-radius:4px;box-shadow:0 1px 0 #1e1e1e"></div>
<div class="a" style="left:759.5px;top:39px;width:24.0px;height:23.599999999999994px;background:#383838;border-radius:4px;box-shadow:0 1px 0 #1e1e1e"></div>
<div class="a" style="left:785.5px;top:39px;width:18.5px;height:23.599999999999994px;background:#383838;border-radius:4px;box-shadow:0 1px 0 #1e1e1e"></div>
<div class="a" style="left:811px;top:39px;width:24px;height:23.599999999999994px;background:#383838;border-radius:4px;box-shadow:0 1px 0 #1e1e1e"></div>
<div class="a" style="left:837.5px;top:39px;width:24.5px;height:23.599999999999994px;background:#383838;border-radius:4px;box-shadow:0 1px 0 #1e1e1e"></div>
<div class="a" style="left:864px;top:39px;width:25px;height:23.599999999999994px;background:#383838;border-radius:4px;box-shadow:0 1px 0 #1e1e1e"></div>
<div class="a" style="left:896.3px;top:39px;width:24.5px;height:23.599999999999994px;background:#383838;border-radius:4px;box-shadow:0 1px 0 #1e1e1e"></div>
<div class="a" style="left:922.5px;top:39px;width:24.5px;height:23.599999999999994px;background:#383838;border-radius:4px;box-shadow:0 1px 0 #1e1e1e"></div>
<div class="a" style="left:949px;top:39px;width:24.5px;height:23.599999999999994px;background:#383838;border-radius:4px;box-shadow:0 1px 0 #1e1e1e"></div>
<div class="a" style="left:981px;top:39px;width:24.5px;height:23.599999999999994px;background:#383838;border-radius:4px;box-shadow:0 1px 0 #1e1e1e"></div>
<div class="a" style="left:1007.5px;top:39px;width:24.5px;height:23.599999999999994px;background:#383838;border-radius:4px;box-shadow:0 1px 0 #1e1e1e"></div>
<span class="a" style="left:666.5px;top:40.6px;font-size:15px;line-height:15px;color:#8a8a8a;white-space:nowrap;-webkit-text-stroke:0;">A</span>
<div class="a" style="left:663.5px;top:57px;width:19px;height:3px;background:#ee11ee"></div>
<div class="a" style="left:710px;top:57px;width:19px;height:3px;background:#1a1aff"></div>
<svg class="a" style="left:713px;top:42px" width="14" height="14" viewBox="0 0 14 14"><path d="M9.5 1.5a1.3 1.3 0 0 1 1.8 0l1.2 1.2a1.3 1.3 0 0 1 0 1.8L11 6 8 3z" fill="#8a8a8a"/><path d="M7.3 3.7l3 3-4.5 4.5-2.2.3-1.6 1.6-.5-.5 1.6-1.6.3-2.2z" fill="#8a8a8a"/></svg>
<svg class="a" style="left:691.5999999999999px;top:47px" width="10" height="8" viewBox="0 0 10 8"><path d="M1.5 2l3.5 3.5L8.5 2" fill="none" stroke="#8a8a8a" stroke-width="1.3"/></svg>
<svg class="a" style="left:738px;top:47px" width="10" height="8" viewBox="0 0 10 8"><path d="M1.5 2l3.5 3.5L8.5 2" fill="none" stroke="#8a8a8a" stroke-width="1.3"/></svg>
<svg class="a" style="left:789.7px;top:47px" width="10" height="8" viewBox="0 0 10 8"><path d="M1.5 2l3.5 3.5L8.5 2" fill="none" stroke="#8a8a8a" stroke-width="1.3"/></svg>
<svg class="a" style="left:763px;top:42px" width="18" height="18" viewBox="0 0 18 18"><rect x="3" y="5.5" width="12" height="7.5" rx="2" fill="none" stroke="#8a8a8a" stroke-width="1.3" transform="rotate(-40 9 9)"/><path d="M5.2 8.6l4.8 5" stroke="#8a8a8a" stroke-width="1.3" transform="translate(0.6 -1.6)"/></svg>
<svg class="a" style="left:815px;top:43px" width="17" height="15" viewBox="0 0 17 15"><g fill="#8a8a8a"><circle cx="2" cy="3.5" r="1"/><circle cx="2" cy="7.5" r="1"/><circle cx="2" cy="11.5" r="1"/><rect x="5" y="3" width="10" height="1.1"/><rect x="5" y="7" width="10" height="1.1"/><rect x="5" y="11" width="10" height="1.1"/></g></svg>
<svg class="a" style="left:841.5px;top:43px" width="17" height="15" viewBox="0 0 17 15"><g fill="#8a8a8a"><rect x="1.5" y="2.3" width="1" height="2.4"/><rect x="1.2" y="6.3" width="1.6" height="2.4"/><rect x="1.2" y="10.3" width="1.6" height="2.4"/><rect x="5" y="3" width="10" height="1.1"/><rect x="5" y="7" width="10" height="1.1"/><rect x="5" y="11" width="10" height="1.1"/></g></svg>
<svg class="a" style="left:868px;top:43px" width="17" height="15" viewBox="0 0 17 15"><g fill="#8a8a8a"><rect x="7" y="2" width="8" height="1.1"/><rect x="2" y="5.5" width="13" height="1.1"/><rect x="2" y="9" width="13" height="1.1"/><rect x="2" y="12.5" width="8" height="1.1"/></g></svg>
<svg class="a" style="left:901px;top:41px" width="14" height="19" viewBox="0 0 14 19"><path d="M4 5v8a3 3 0 0 0 6 0V4a2 2 0 0 0-4 0v9" fill="none" stroke="#8a8a8a" stroke-width="1.4"/></svg>
<svg class="a" style="left:927px;top:41px" width="15" height="20" viewBox="0 0 15 20"><rect x="4.5" y="1" width="6" height="11" rx="3" fill="none" stroke="#8a8a8a" stroke-width="1.4"/><path d="M2 9a5.5 5.5 0 0 0 11 0M7.5 14.5V18M4 18h7" fill="none" stroke="#8a8a8a" stroke-width="1.4"/></svg>
<span class="a" style="left:954px;top:42.2px;font-size:17px;line-height:17px;color:#8a8a8a;white-space:nowrap;"><i style="font-family:Liberation Serif">f</i><span style="font-size:11px">x</span></span>
<svg class="a" style="left:985px;top:43px" width="18" height="17" viewBox="0 0 18 17"><path d="M4 2H2v11h2M12 2h2v8" fill="none" stroke="#8a8a8a" stroke-width="1.3"/><g fill="#8a8a8a"><circle cx="6" cy="11" r=".7"/><circle cx="8" cy="11" r=".7"/><circle cx="10" cy="11" r=".7"/></g><path d="M14 11v5M11.5 13.5h5" stroke="#8a8a8a" stroke-width="1.3"/></svg>
<svg class="a" style="left:1011.5px;top:43px" width="18" height="17" viewBox="0 0 18 17"><path d="M4 2H2v12h2M13 2h2v12h-2" fill="none" stroke="#8a8a8a" stroke-width="1.3"/><g fill="#8a8a8a"><circle cx="6.5" cy="11" r=".7"/><circle cx="8.5" cy="11" r=".7"/><circle cx="10.5" cy="11" r=".7"/></g></svg>
<div class="a" style="left:661px;top:68.69999999999999px;width:24px;height:23.700000000000017px;background:#3a3a3a;border-radius:4px;box-shadow:0 1px 0 #1e1e1e"></div>
<div class="a" style="left:687.5px;top:68.69999999999999px;width:24.5px;height:23.700000000000017px;background:#3a3a3a;border-radius:4px;box-shadow:0 1px 0 #1e1e1e"></div>
<div class="a" style="left:714.5px;top:68.69999999999999px;width:171.0px;height:23.700000000000017px;background:#3a3a3a;border-radius:4px;box-shadow:0 1px 0 #1e1e1e"></div>
<div class="a" style="left:888px;top:68.69999999999999px;width:138.5px;height:23.700000000000017px;background:#3a3a3a;border-radius:4px;box-shadow:0 1px 0 #1e1e1e"></div>
<div class="a" style="left:666px;top:73.5px;width:14px;height:13px;background:linear-gradient(135deg,#e03010,#2050e0 50%,#d02010);border:1px solid #6a3a20"></div>
<div class="a" style="left:693px;top:73.5px;width:14px;height:13px;background:linear-gradient(135deg,#4fd0f0,#2060d0);border:1px solid #704020"></div>
<span class="a" style="left:723px;top:74.7px;font-size:15px;line-height:15px;color:#fc0;white-space:nowrap;">👑</span>
<span class="a" style="left:747px;top:73.7px;font-size:17px;line-height:17px;color:#f2f2f2;white-space:nowrap;">Suggest a change</span>
<span class="a" style="left:895px;top:73.9px;font-size:16.6px;line-height:16.6px;color:#f2f2f2;white-space:nowrap;">View on AnkiHub</span>
<div class="a" style="left:661px;top:95.80000000000001px;width:145px;height:23.0px;background:#3a3a3a;border-radius:4px;box-shadow:0 1px 0 #1e1e1e"></div>
<span class="a" style="left:667px;top:100.2px;font-size:17px;line-height:17px;color:#f2f2f2;white-space:nowrap;">View Note History</span>
<div class="a" style="left:658px;top:128px;width:506px;height:1px;background:#393939"></div>
<svg class="a" style="left:666px;top:145px" width="12" height="9" viewBox="0 0 12 9"><path d="M2 2.5l4 4 4-4" fill="none" stroke="#8a8a8a" stroke-width="1.3"/></svg>
<span class="a" style="left:687.5px;top:140.9px;font-size:16.5px;line-height:16.5px;color:#f2f2f2;white-space:nowrap;">Text</span>
<svg class="a" style="left:1141px;top:143px" width="17" height="12" viewBox="0 0 17 12"><path d="M6 1.5L1.8 6 6 10.5M11 1.5L15.2 6 11 10.5" fill="none" stroke="#a0a0a0" stroke-width="1.3"/></svg>
<div class="a" style="left:660px;top:164.2px;width:502px;height:92.80000000000001px;background:#343434;border-radius:6px;box-shadow:0 1px 1px #1e1e1e,0 0 0 1px #2c2c2c"></div>
<svg class="a" style="left:666px;top:275px" width="12" height="9" viewBox="0 0 12 9"><path d="M2 2.5l4 4 4-4" fill="none" stroke="#8a8a8a" stroke-width="1.3"/></svg>
<span class="a" style="left:687.5px;top:270.9px;font-size:16.5px;line-height:16.5px;color:#f2f2f2;white-space:nowrap;">Extra</span>
<svg class="a" style="left:1141px;top:273px" width="17" height="12" viewBox="0 0 17 12"><path d="M6 1.5L1.8 6 6 10.5M11 1.5L15.2 6 11 10.5" fill="none" stroke="#a0a0a0" stroke-width="1.3"/></svg>
<div class="a" style="left:660px;top:295px;width:502px;height:39px;background:#343434;border-radius:6px;box-shadow:0 1px 1px #1e1e1e,0 0 0 1px #2c2c2c"></div>
<svg class="a" style="left:666px;top:352px" width="12" height="9" viewBox="0 0 12 9"><path d="M2 2.5l4 4 4-4" fill="none" stroke="#8a8a8a" stroke-width="1.3"/></svg>
<span class="a" style="left:687.5px;top:347.9px;font-size:16.5px;line-height:16.5px;color:#f2f2f2;white-space:nowrap;">Lecture Notes</span>
<svg class="a" style="left:1141px;top:350px" width="17" height="12" viewBox="0 0 17 12"><path d="M6 1.5L1.8 6 6 10.5M11 1.5L15.2 6 11 10.5" fill="none" stroke="#a0a0a0" stroke-width="1.3"/></svg>
<div class="a" style="left:660px;top:372px;width:502px;height:39.5px;background:#343434;border-radius:6px;box-shadow:0 1px 1px #1e1e1e,0 0 0 1px #2c2c2c"></div>
<svg class="a" style="left:666px;top:429px" width="12" height="9" viewBox="0 0 12 9"><path d="M2 2.5l4 4 4-4" fill="none" stroke="#8a8a8a" stroke-width="1.3"/></svg>
<span class="a" style="left:687.5px;top:424.9px;font-size:16.5px;line-height:16.5px;color:#f2f2f2;white-space:nowrap;">Missed Questions</span>
<svg class="a" style="left:1141px;top:427px" width="17" height="12" viewBox="0 0 17 12"><path d="M6 1.5L1.8 6 6 10.5M11 1.5L15.2 6 11 10.5" fill="none" stroke="#a0a0a0" stroke-width="1.3"/></svg>
<div class="a" style="left:660px;top:449px;width:502px;height:40px;background:#343434;border-radius:6px;box-shadow:0 1px 1px #1e1e1e,0 0 0 1px #2c2c2c"></div>
<svg class="a" style="left:666px;top:507px" width="12" height="9" viewBox="0 0 12 9"><path d="M2 2.5l4 4 4-4" fill="none" stroke="#8a8a8a" stroke-width="1.3"/></svg>
<span class="a" style="left:687.5px;top:502.9px;font-size:16.5px;line-height:16.5px;color:#f2f2f2;white-space:nowrap;">Pathoma</span>
<svg class="a" style="left:1141px;top:505px" width="17" height="12" viewBox="0 0 17 12"><path d="M6 1.5L1.8 6 6 10.5M11 1.5L15.2 6 11 10.5" fill="none" stroke="#a0a0a0" stroke-width="1.3"/></svg>
<div class="a" style="left:660px;top:526.5px;width:502px;height:39.5px;background:#343434;border-radius:6px;box-shadow:0 1px 1px #1e1e1e,0 0 0 1px #2c2c2c"></div>
<svg class="a" style="left:666px;top:584px" width="12" height="9" viewBox="0 0 12 9"><path d="M2 2.5l4 4 4-4" fill="none" stroke="#8a8a8a" stroke-width="1.3"/></svg>
<span class="a" style="left:687.5px;top:579.9px;font-size:16.5px;line-height:16.5px;color:#f2f2f2;white-space:nowrap;">Boards and Beyond</span>
<svg class="a" style="left:1141px;top:582px" width="17" height="12" viewBox="0 0 17 12"><path d="M6 1.5L1.8 6 6 10.5M11 1.5L15.2 6 11 10.5" fill="none" stroke="#a0a0a0" stroke-width="1.3"/></svg>
<div class="a" style="left:660px;top:603.5px;width:502px;height:39.5px;background:#343434;border-radius:6px;box-shadow:0 1px 1px #1e1e1e,0 0 0 1px #2c2c2c"></div>
<svg class="a" style="left:666px;top:661px" width="12" height="9" viewBox="0 0 12 9"><path d="M2 2.5l4 4 4-4" fill="none" stroke="#8a8a8a" stroke-width="1.3"/></svg>
<span class="a" style="left:687.5px;top:656.9px;font-size:16.5px;line-height:16.5px;color:#f2f2f2;white-space:nowrap;">First Aid</span>
<svg class="a" style="left:1141px;top:659px" width="17" height="12" viewBox="0 0 17 12"><path d="M6 1.5L1.8 6 6 10.5M11 1.5L15.2 6 11 10.5" fill="none" stroke="#a0a0a0" stroke-width="1.3"/></svg>
<div class="a" style="left:660px;top:681px;width:502px;height:58px;background:#343434;border-radius:6px;box-shadow:0 1px 1px #1e1e1e,0 0 0 1px #2c2c2c"></div>
<div class="a" style="left:667px;top:174px;font-size:17.4px;line-height:20px;color:#f4f4f4;white-space:nowrap">What <u>HLA subtypes</u> are associated with <b>celiac disease</b>?</div>
<div class="a" style="left:667px;top:227px;font-size:17.4px;line-height:20px;color:#f4f4f4;white-space:nowrap">{{c1::DQ2}} and {{c1::DQ8}}</div>
<div class="a" style="left:667px;top:304px;font-size:17.4px;line-height:20px;color:#f4f4f4;white-space:nowrap">I <b>8 2</b> (ate too) much gluten at <b>D</b>airy <b>Q</b>ueen</div>
<div class="a" style="left:666.7px;top:687px;width:326px;height:45px;background:#fff;overflow:hidden;font-family:Liberation Serif,serif;font-size:6.8px;line-height:8px;color:#3a3a3a;white-space:nowrap"><div class="a" style="left:2px;top:11px;width:322px;height:1px;background:#e4e8f0"></div><div class="a" style="left:2px;top:28.5px;width:322px;height:1px;background:#e4e8f0"></div><span class="fa" style="left:5px;top:2.6px;color:#1a6a9a;font-weight:bold">A3</span><span class="fa" style="left:71.5px;top:2.6px">Hemochromatosis</span><span class="fa" style="left:5px;top:12.7px;color:#1a6a9a;font-weight:bold">B8</span><span class="fa" style="left:71.5px;top:12.7px">Addison disease, myasthenia gravis, Graves</span><span class="fa" style="left:75px;top:21px">disease</span><span class="fa" style="left:5px;top:31px;color:#1a6a9a;font-weight:bold">B27</span><span class="fa" style="left:71.5px;top:31px"><span style="color:#c8102e">P</span>soriatic arthritis, <span style="color:#c8102e">A</span>nkylosing spondylitis,</span><span class="fa" style="left:199.7px;top:31px;letter-spacing:-.15px"><span style="color:#c8102e">PAIR</span>. Also known as seronegative arthropathies.</span><span class="fa" style="left:75px;top:39px"><span style="color:#c8102e">I</span>BD-associated arthritis, <span style="color:#c8102e">R</span>eactive arthritis</span></div>
<div class="a" style="left:654px;top:732px;width:517px;height:30px;background:#2b2b2b"></div>
<svg class="a" style="left:662px;top:742px" width="12" height="9" viewBox="0 0 12 9"><path d="M2 2.5l4 4 4-4" fill="none" stroke="#8a8a8a" stroke-width="1.3"/></svg>
<span class="a" style="left:684px;top:737.4px;font-size:16.5px;line-height:16.5px;color:#f2f2f2;white-space:nowrap;">18 Tags</span>
<div class="a" style="left:659.3px;top:760.2px;width:502.70000000000005px;height:400px;background:#2f2f2f;border-radius:6px"></div>
<svg class="a" style="left:669px;top:772px" width="17" height="17" viewBox="0 0 16 16"><path d="M1.6 2.6a1 1 0 0 1 1-1h4.6l7 7a1.2 1.2 0 0 1 0 1.7l-4.3 4.3a1.2 1.2 0 0 1-1.7 0l-7-7z" fill="none" stroke="#bdbdbd" stroke-width="1.5" stroke-linejoin="round"/><circle cx="4.6" cy="4.6" r="1" fill="#bdbdbd"/></svg>
<div class="a" style="left:702.9000000000001px;top:769.0px;width:155.3px;height:25px;background:#393939;border-radius:6px;border:1px solid #232323"></div>
<span class="a" style="left:711.9000000000001px;top:774.6px;font-size:16.8px;line-height:16.8px;color:#f0f0f0;white-space:nowrap;">...::Immunology</span>
<svg class="a" style="left:837.2px;top:774.3px" width="12" height="14" viewBox="0 0 12 14"><rect x="1" y="1.3" width="10" height="1.8" rx=".5" fill="#f0f0f0"/><rect x="4" y="0" width="4" height="1.5" fill="#f0f0f0"/><path d="M2 4h8l-.7 9.2a.8.8 0 0 1-.8.8h-5a.8.8 0 0 1-.8-.8z" fill="#f0f0f0"/></svg>
<div class="a" style="left:668px;top:797.0px;width:316.3px;height:25px;background:#393939;border-radius:6px;border:1px solid #232323"></div>
<span class="a" style="left:677px;top:802.6px;font-size:16.8px;line-height:16.8px;color:#f0f0f0;white-space:nowrap;">...::Major_malabsorption_syndromes</span>
<svg class="a" style="left:963.3px;top:802.3px" width="12" height="14" viewBox="0 0 12 14"><rect x="1" y="1.3" width="10" height="1.8" rx=".5" fill="#f0f0f0"/><rect x="4" y="0" width="4" height="1.5" fill="#f0f0f0"/><path d="M2 4h8l-.7 9.2a.8.8 0 0 1-.8.8h-5a.8.8 0 0 1-.8-.8z" fill="#f0f0f0"/></svg>
<div class="a" style="left:668px;top:825.0px;width:316.3px;height:25px;background:#393939;border-radius:6px;border:1px solid #232323"></div>
<span class="a" style="left:677px;top:830.6px;font-size:16.8px;line-height:16.8px;color:#f0f0f0;white-space:nowrap;">...::Major_malabsorption_syndromes</span>
<svg class="a" style="left:963.3px;top:830.3px" width="12" height="14" viewBox="0 0 12 14"><rect x="1" y="1.3" width="10" height="1.8" rx=".5" fill="#f0f0f0"/><rect x="4" y="0" width="4" height="1.5" fill="#f0f0f0"/><path d="M2 4h8l-.7 9.2a.8.8 0 0 1-.8.8h-5a.8.8 0 0 1-.8-.8z" fill="#f0f0f0"/></svg>
<div class="a" style="left:988px;top:825.0px;width:114.4px;height:25px;background:#393939;border-radius:6px;border:1px solid #232323"></div>
<span class="a" style="left:997px;top:830.6px;font-size:16.8px;line-height:16.8px;color:#f0f0f0;white-space:nowrap;">...::NVa-uj</span>
<svg class="a" style="left:1081.4px;top:830.3px" width="12" height="14" viewBox="0 0 12 14"><rect x="1" y="1.3" width="10" height="1.8" rx=".5" fill="#f0f0f0"/><rect x="4" y="0" width="4" height="1.5" fill="#f0f0f0"/><path d="M2 4h8l-.7 9.2a.8.8 0 0 1-.8.8h-5a.8.8 0 0 1-.8-.8z" fill="#f0f0f0"/></svg>
<div class="a" style="left:668px;top:853.0px;width:122.0px;height:25px;background:#393939;border-radius:6px;border:1px solid #232323"></div>
<span class="a" style="left:677px;top:858.6px;font-size:16.8px;line-height:16.8px;color:#f0f0f0;white-space:nowrap;">...::ZSaZyP</span>
<svg class="a" style="left:769.0px;top:858.3px" width="12" height="14" viewBox="0 0 12 14"><rect x="1" y="1.3" width="10" height="1.8" rx=".5" fill="#f0f0f0"/><rect x="4" y="0" width="4" height="1.5" fill="#f0f0f0"/><path d="M2 4h8l-.7 9.2a.8.8 0 0 1-.8.8h-5a.8.8 0 0 1-.8-.8z" fill="#f0f0f0"/></svg>
<div class="a" style="left:793.5999999999999px;top:853.0px;width:356.6px;height:25px;background:#393939;border-radius:6px;border:1px solid #232323"></div>
<span class="a" style="left:802.5999999999999px;top:858.6px;font-size:16.8px;line-height:16.8px;color:#f0f0f0;white-space:nowrap;">...::01_Autoimmune_Blistering_Conditions</span>
<svg class="a" style="left:1129.2px;top:858.3px" width="12" height="14" viewBox="0 0 12 14"><rect x="1" y="1.3" width="10" height="1.8" rx=".5" fill="#f0f0f0"/><rect x="4" y="0" width="4" height="1.5" fill="#f0f0f0"/><path d="M2 4h8l-.7 9.2a.8.8 0 0 1-.8.8h-5a.8.8 0 0 1-.8-.8z" fill="#f0f0f0"/></svg>
<div class="a" style="left:668px;top:881.0px;width:341.5px;height:25px;background:#393939;border-radius:6px;border:1px solid #232323"></div>
<span class="a" style="left:677px;top:886.6px;font-size:16.8px;line-height:16.8px;color:#f0f0f0;white-space:nowrap;">...::09_Celiac_Disease_Pathophysiology</span>
<svg class="a" style="left:988.5px;top:886.3px" width="12" height="14" viewBox="0 0 12 14"><rect x="1" y="1.3" width="10" height="1.8" rx=".5" fill="#f0f0f0"/><rect x="4" y="0" width="4" height="1.5" fill="#f0f0f0"/><path d="M2 4h8l-.7 9.2a.8.8 0 0 1-.8.8h-5a.8.8 0 0 1-.8-.8z" fill="#f0f0f0"/></svg>
<div class="a" style="left:668px;top:909.0px;width:411.0px;height:25px;background:#393939;border-radius:6px;border:1px solid #232323"></div>
<span class="a" style="left:677px;top:914.6px;font-size:16.8px;line-height:16.8px;color:#f0f0f0;white-space:nowrap;">...::04_HLA_subtypes_associated_with_diseases</span>
<svg class="a" style="left:1058.0px;top:914.3px" width="12" height="14" viewBox="0 0 12 14"><rect x="1" y="1.3" width="10" height="1.8" rx=".5" fill="#f0f0f0"/><rect x="4" y="0" width="4" height="1.5" fill="#f0f0f0"/><path d="M2 4h8l-.7 9.2a.8.8 0 0 1-.8.8h-5a.8.8 0 0 1-.8-.8z" fill="#f0f0f0"/></svg>
<div class="a" style="left:668px;top:937.0px;width:201.5px;height:25px;background:#393939;border-radius:6px;border:1px solid #232323"></div>
<span class="a" style="left:677px;top:942.6px;font-size:16.8px;line-height:16.8px;color:#f0f0f0;white-space:nowrap;">...::01_Celiac_disease</span>
<svg class="a" style="left:848.5px;top:942.3px" width="12" height="14" viewBox="0 0 12 14"><rect x="1" y="1.3" width="10" height="1.8" rx=".5" fill="#f0f0f0"/><rect x="4" y="0" width="4" height="1.5" fill="#f0f0f0"/><path d="M2 4h8l-.7 9.2a.8.8 0 0 1-.8.8h-5a.8.8 0 0 1-.8-.8z" fill="#f0f0f0"/></svg>
<div class="a" style="left:873.9000000000001px;top:937.0px;width:238.1px;height:25px;background:#393939;border-radius:6px;border:1px solid #232323"></div>
<span class="a" style="left:882.9000000000001px;top:942.6px;font-size:16.8px;line-height:16.8px;color:#f0f0f0;white-space:nowrap;">...::3-HighYield-temporary</span>
<svg class="a" style="left:1091.0px;top:942.3px" width="12" height="14" viewBox="0 0 12 14"><rect x="1" y="1.3" width="10" height="1.8" rx=".5" fill="#f0f0f0"/><rect x="4" y="0" width="4" height="1.5" fill="#f0f0f0"/><path d="M2 4h8l-.7 9.2a.8.8 0 0 1-.8.8h-5a.8.8 0 0 1-.8-.8z" fill="#f0f0f0"/></svg>
<div class="a" style="left:668px;top:965.0px;width:322.5px;height:25px;background:#393939;border-radius:6px;border:1px solid #232323"></div>
<span class="a" style="left:677px;top:970.6px;font-size:16.8px;line-height:16.8px;color:#f0f0f0;white-space:nowrap;">...::14_Mechanisms_of_Autoimmunity</span>
<svg class="a" style="left:969.5px;top:970.3px" width="12" height="14" viewBox="0 0 12 14"><rect x="1" y="1.3" width="10" height="1.8" rx=".5" fill="#f0f0f0"/><rect x="4" y="0" width="4" height="1.5" fill="#f0f0f0"/><path d="M2 4h8l-.7 9.2a.8.8 0 0 1-.8.8h-5a.8.8 0 0 1-.8-.8z" fill="#f0f0f0"/></svg>
<div class="a" style="left:668px;top:993.0px;width:322.5px;height:25px;background:#393939;border-radius:6px;border:1px solid #232323"></div>
<span class="a" style="left:677px;top:998.6px;font-size:16.8px;line-height:16.8px;color:#f0f0f0;white-space:nowrap;">...::14_Mechanisms_of_Autoimmunity</span>
<svg class="a" style="left:969.5px;top:998.3px" width="12" height="14" viewBox="0 0 12 14"><rect x="1" y="1.3" width="10" height="1.8" rx=".5" fill="#f0f0f0"/><rect x="4" y="0" width="4" height="1.5" fill="#f0f0f0"/><path d="M2 4h8l-.7 9.2a.8.8 0 0 1-.8.8h-5a.8.8 0 0 1-.8-.8z" fill="#f0f0f0"/></svg>
<div class="a" style="left:668px;top:1021.0px;width:187.6px;height:25px;background:#393939;border-radius:6px;border:1px solid #232323"></div>
<span class="a" style="left:677px;top:1026.6px;font-size:16.8px;line-height:16.8px;color:#f0f0f0;white-space:nowrap;">...::05_Small_Bowel</span>
<svg class="a" style="left:834.6px;top:1026.3px" width="12" height="14" viewBox="0 0 12 14"><rect x="1" y="1.3" width="10" height="1.8" rx=".5" fill="#f0f0f0"/><rect x="4" y="0" width="4" height="1.5" fill="#f0f0f0"/><path d="M2 4h8l-.7 9.2a.8.8 0 0 1-.8.8h-5a.8.8 0 0 1-.8-.8z" fill="#f0f0f0"/></svg>
<div class="a" style="left:859.3px;top:1021.0px;width:110.4px;height:25px;background:#393939;border-radius:6px;border:1px solid #232323"></div>
<span class="a" style="left:868.3px;top:1026.6px;font-size:16.8px;line-height:16.8px;color:#f0f0f0;white-space:nowrap;">...::27374</span>
<svg class="a" style="left:948.7px;top:1026.3px" width="12" height="14" viewBox="0 0 12 14"><rect x="1" y="1.3" width="10" height="1.8" rx=".5" fill="#f0f0f0"/><rect x="4" y="0" width="4" height="1.5" fill="#f0f0f0"/><path d="M2 4h8l-.7 9.2a.8.8 0 0 1-.8.8h-5a.8.8 0 0 1-.8-.8z" fill="#f0f0f0"/></svg>
<div class="a" style="left:973.4000000000001px;top:1021.0px;width:113.6px;height:25px;background:#393939;border-radius:6px;border:1px solid #232323"></div>
<span class="a" style="left:982.4000000000001px;top:1026.6px;font-size:16.8px;line-height:16.8px;color:#f0f0f0;white-space:nowrap;">...::20400</span>
<svg class="a" style="left:1066.0px;top:1026.3px" width="12" height="14" viewBox="0 0 12 14"><rect x="1" y="1.3" width="10" height="1.8" rx=".5" fill="#f0f0f0"/><rect x="4" y="0" width="4" height="1.5" fill="#f0f0f0"/><path d="M2 4h8l-.7 9.2a.8.8 0 0 1-.8.8h-5a.8.8 0 0 1-.8-.8z" fill="#f0f0f0"/></svg>
<div class="a" style="left:668px;top:1049.0px;width:94.0px;height:25px;background:#393939;border-radius:6px;border:1px solid #232323"></div>
<span class="a" style="left:677px;top:1054.6px;font-size:16.8px;line-height:16.8px;color:#f0f0f0;white-space:nowrap;">...::HLA</span>
<svg class="a" style="left:741.0px;top:1054.3px" width="12" height="14" viewBox="0 0 12 14"><rect x="1" y="1.3" width="10" height="1.8" rx=".5" fill="#f0f0f0"/><rect x="4" y="0" width="4" height="1.5" fill="#f0f0f0"/><path d="M2 4h8l-.7 9.2a.8.8 0 0 1-.8.8h-5a.8.8 0 0 1-.8-.8z" fill="#f0f0f0"/></svg>
<div class="a" style="left:766.3px;top:1049.0px;width:206.7px;height:25px;background:#393939;border-radius:6px;border:1px solid #232323"></div>
<span class="a" style="left:775.3px;top:1054.6px;font-size:16.8px;line-height:16.8px;color:#f0f0f0;white-space:nowrap;">...::05_Celiac_Disease</span>
<svg class="a" style="left:952.0px;top:1054.3px" width="12" height="14" viewBox="0 0 12 14"><rect x="1" y="1.3" width="10" height="1.8" rx=".5" fill="#f0f0f0"/><rect x="4" y="0" width="4" height="1.5" fill="#f0f0f0"/><path d="M2 4h8l-.7 9.2a.8.8 0 0 1-.8.8h-5a.8.8 0 0 1-.8-.8z" fill="#f0f0f0"/></svg>
<div class="a" style="left:668px;top:1077.0px;width:358.0px;height:25px;background:#393939;border-radius:6px;border:1px solid #232323"></div>
<span class="a" style="left:677px;top:1082.6px;font-size:16.8px;line-height:16.8px;color:#f0f0f0;white-space:nowrap;">...::04_Gastrointestinal_Pathology</span>
<svg class="a" style="left:1005.0px;top:1082.3px" width="12" height="14" viewBox="0 0 12 14"><rect x="1" y="1.3" width="10" height="1.8" rx=".5" fill="#f0f0f0"/><rect x="4" y="0" width="4" height="1.5" fill="#f0f0f0"/><path d="M2 4h8l-.7 9.2a.8.8 0 0 1-.8.8h-5a.8.8 0 0 1-.8-.8z" fill="#f0f0f0"/></svg>
</div>
<div class="a" style="left:709.5px;top:1207px;width:501px;height:28px;background:#7c7c7c;border-radius:7px;border:1px solid #9a9a9a"></div>
<div class="a" style="left:713.5px;top:1211px;width:15px;height:15px;border-radius:4px;background:transparent;overflow:hidden"><svg class="a" style="left:0;top:0" width="15" height="15" viewBox="0 0 15 15"><rect width="8" height="15" fill="#1e8cf0"/><rect x="7.5" width="7.5" height="15" fill="#e8eef5"/><circle cx="4.5" cy="6" r=".8" fill="#222"/><circle cx="10.5" cy="6" r=".8" fill="#222"/><path d="M3 10q4.5 3 9 0" fill="none" stroke="#222" stroke-width=".8"/></svg></div>
<div class="a" style="left:733.1px;top:1211px;width:15px;height:15px;border-radius:4px;background:transparent;overflow:hidden"><svg class="a" style="left:0;top:0" width="15" height="15" viewBox="0 0 15 15"><rect width="15" height="15" fill="#d8d8dc"/><circle cx="3.5" cy="3.5" r="1.4" fill="#f44"/><circle cx="7.5" cy="3.5" r="1.4" fill="#fb3"/><circle cx="11.5" cy="3.5" r="1.4" fill="#3c6"/><circle cx="3.5" cy="7.5" r="1.4" fill="#3af"/><circle cx="7.5" cy="7.5" r="1.4" fill="#a5f"/><circle cx="11.5" cy="7.5" r="1.4" fill="#f6a"/><circle cx="3.5" cy="11.5" r="1.4" fill="#f80"/><circle cx="7.5" cy="11.5" r="1.4" fill="#4cd"/><circle cx="11.5" cy="11.5" r="1.4" fill="#48f"/></svg></div>
<div class="a" style="left:753.5px;top:1211px;width:15px;height:15px;border-radius:4px;background:transparent;overflow:hidden"><svg class="a" style="left:0;top:0" width="15" height="15" viewBox="0 0 15 15"><rect width="15" height="15" fill="#f2f2f2"/><circle cx="7.5" cy="7.5" r="6" fill="#2f8cf0"/><path d="M10 5L8 8 5 10 7 7z" fill="#fff"/><path d="M10 5L8 8 7 7z" fill="#f33"/></svg></div>
<div class="a" style="left:773.5px;top:1211px;width:15px;height:15px;border-radius:4px;background:transparent;overflow:hidden"><svg class="a" style="left:0;top:0" width="15" height="15" viewBox="0 0 15 15"><rect width="15" height="15" fill="#e9f1e4"/><path d="M0 10L15 4V0H9z" fill="#7ccf6c"/><path d="M0 15h6L15 8v7z" fill="#f2c94c"/><path d="M5 0v15" stroke="#fff" stroke-width="2"/><circle cx="8" cy="8" r="2.2" fill="#1a7cf0"/></svg></div>
<div class="a" style="left:793.4px;top:1211px;width:15px;height:15px;border-radius:4px;background:transparent;overflow:hidden"><svg class="a" style="left:0;top:0" width="15" height="15" viewBox="0 0 15 15"><path d="M7.5 1l2 4.5 4.5.5-3.3 3 1 4.5-4.2-2.3-4.2 2.3 1-4.5L1 6l4.5-.5z" fill="#4aa7f0"/><path d="M1 6h4L3 9z" fill="#333"/></svg></div>
<div class="a" style="left:813.5px;top:1211px;width:15px;height:15px;border-radius:4px;background:transparent;overflow:hidden"><svg class="a" style="left:0;top:0" width="15" height="15" viewBox="0 0 15 15"><rect width="15" height="15" fill="#1a84f0"/><rect x="3" y="4.5" width="9" height="6" fill="#fff"/><path d="M3 4.5l4.5 3.5L12 4.5" fill="none" stroke="#1a84f0" stroke-width=".8"/></svg></div>
<div class="a" style="left:833.3px;top:1211px;width:15px;height:15px;border-radius:4px;background:transparent;overflow:hidden"><svg class="a" style="left:0;top:0" width="15" height="15" viewBox="0 0 15 15"><rect width="15" height="15" fill="#2fcf4a"/><ellipse cx="7.5" cy="7" rx="5" ry="3.8" fill="#fff"/></svg></div>
<div class="a" style="left:853.4px;top:1211px;width:15px;height:15px;border-radius:4px;background:#fff;overflow:hidden"><svg class="a" style="left:0;top:0" width="15" height="15" viewBox="0 0 15 15"><circle cx="7.5" cy="7.5" r="6.8" fill="#ea4335"/><path d="M7.5 7.5L1.6 11A6.8 6.8 0 0 0 13.4 11z" fill="#fbbc04"/><path d="M7.5 7.5L1.6 11A6.8 6.8 0 0 1 1.6 4 6.8 6.8 0 0 1 7.5.7z" fill="#34a853"/><circle cx="7.5" cy="7.5" r="3" fill="#fff"/><circle cx="7.5" cy="7.5" r="2.2" fill="#4285f4"/></svg></div>
<div class="a" style="left:873.3px;top:1211px;width:15px;height:15px;border-radius:4px;background:transparent;overflow:hidden"><svg class="a" style="left:0;top:0" width="15" height="15" viewBox="0 0 15 15"><rect width="15" height="15" fill="#fff"/><ellipse cx="7.5" cy="4.2" rx="1.6" ry="3" fill="#f90" transform="rotate(0 7.5 7.5)" opacity=".85"/><ellipse cx="7.5" cy="4.2" rx="1.6" ry="3" fill="#fd3" transform="rotate(45 7.5 7.5)" opacity=".85"/><ellipse cx="7.5" cy="4.2" rx="1.6" ry="3" fill="#9d4" transform="rotate(90 7.5 7.5)" opacity=".85"/><ellipse cx="7.5" cy="4.2" rx="1.6" ry="3" fill="#3c9" transform="rotate(135 7.5 7.5)" opacity=".85"/><ellipse cx="7.5" cy="4.2" rx="1.6" ry="3" fill="#3ae" transform="rotate(180 7.5 7.5)" opacity=".85"/><ellipse cx="7.5" cy="4.2" rx="1.6" ry="3" fill="#66f" transform="rotate(225 7.5 7.5)" opacity=".85"/><ellipse cx="7.5" cy="4.2" rx="1.6" ry="3" fill="#c4e" transform="rotate(270 7.5 7.5)" opacity=".85"/><ellipse cx="7.5" cy="4.2" rx="1.6" ry="3" fill="#f46" transform="rotate(315 7.5 7.5)" opacity=".85"/></svg></div>
<div class="a" style="left:893.3px;top:1211px;width:15px;height:15px;border-radius:4px;background:transparent;overflow:hidden"><svg class="a" style="left:0;top:0" width="15" height="15" viewBox="0 0 15 15"><rect width="15" height="15" fill="#f8f8f8"/><circle cx="3.5" cy="4" r="1" fill="#39f"/><circle cx="3.5" cy="7.5" r="1" fill="#f33"/><circle cx="3.5" cy="11" r="1" fill="#f90"/><path d="M6 4h7M6 7.5h7M6 11h7" stroke="#ccc" stroke-width=".7"/></svg></div>
<div class="a" style="left:913.2px;top:1211px;width:15px;height:15px;border-radius:4px;background:transparent;overflow:hidden"><svg class="a" style="left:0;top:0" width="15" height="15" viewBox="0 0 15 15"><rect width="15" height="15" fill="#fbf6e0"/><rect width="15" height="4.5" fill="#f7c948"/></svg></div>
<div class="a" style="left:933.5px;top:1211px;width:15px;height:15px;border-radius:4px;background:transparent;overflow:hidden"><svg class="a" style="left:0;top:0" width="15" height="15" viewBox="0 0 15 15"><rect width="15" height="15" fill="#f5f5f5"/><path d="M2 11q3-6 5-2t6-5" fill="none" stroke="#f07030" stroke-width="2"/><path d="M5 5q3 2 7 0" fill="none" stroke="#2a8af0" stroke-width="1.4"/></svg></div>
<div class="a" style="left:953.2px;top:1211px;width:15px;height:15px;border-radius:4px;background:transparent;overflow:hidden"><svg class="a" style="left:0;top:0" width="15" height="15" viewBox="0 0 15 15"><rect width="15" height="15" fill="#fa3a50"/><path d="M6 11V4l5-1v6.5" fill="none" stroke="#fff" stroke-width="1.3"/><circle cx="5" cy="11" r="1.6" fill="#fff"/><circle cx="10" cy="9.5" r="1.6" fill="#fff"/></svg></div>
<div class="a" style="left:973.5px;top:1211px;width:15px;height:15px;border-radius:4px;background:transparent;overflow:hidden"><svg class="a" style="left:0;top:0" width="15" height="15" viewBox="0 0 15 15"><rect width="15" height="15" fill="#a43ee0"/><circle cx="7.5" cy="6" r="4.5" fill="none" stroke="#fff" stroke-width="1"/><circle cx="7.5" cy="6" r="1.5" fill="#fff"/><rect x="6.8" y="8" width="1.4" height="5" fill="#fff"/></svg></div>
<div class="a" style="left:993.1px;top:1211px;width:15px;height:15px;border-radius:4px;background:transparent;overflow:hidden"><svg class="a" style="left:0;top:0" width="15" height="15" viewBox="0 0 15 15"><rect width="15" height="15" fill="#1a1a1a"/><text x="7.5" y="10" font-size="6" fill="#fff" text-anchor="middle" font-family="Liberation Sans">tv</text></svg></div>
<div class="a" style="left:1013.5px;top:1211px;width:15px;height:15px;border-radius:4px;background:transparent;overflow:hidden"><svg class="a" style="left:0;top:0" width="15" height="15" viewBox="0 0 15 15"><rect width="15" height="15" fill="#f79a1a"/><path d="M3 12L12 3" stroke="#fff" stroke-width="1.5"/></svg></div>
<div class="a" style="left:1033.5px;top:1211px;width:15px;height:15px;border-radius:4px;background:transparent;overflow:hidden"><svg class="a" style="left:0;top:0" width="15" height="15" viewBox="0 0 15 15"><rect width="15" height="15" fill="#1e8af5"/><path d="M7.5 3l-4 9M7.5 3l4 9M3 9.5h9" fill="none" stroke="#fff" stroke-width="1.2"/></svg></div>
<span class="a" style="left:1056px;top:1208px;font-size:17px;line-height:18px;color:#bbb">?</span>
<div class="a" style="left:1073.5px;top:1211px;width:15px;height:15px;border-radius:4px;background:transparent;overflow:hidden"><svg class="a" style="left:0;top:0" width="15" height="15" viewBox="0 0 15 15"><circle cx="7.5" cy="7.5" r="7" fill="#999"/><circle cx="7.5" cy="7.5" r="5" fill="#555"/><circle cx="7.5" cy="7.5" r="3" fill="none" stroke="#aaa" stroke-width=".8"/></svg></div>
<div class="a" style="left:1102.1px;top:1211px;width:15px;height:15px;border-radius:4px;background:transparent;overflow:hidden"><svg class="a" style="left:0;top:0" width="15" height="15" viewBox="0 0 15 15"><rect width="15" height="15" fill="#f5f5f5"/><rect x="5" y="3" width="8" height="9" fill="#1e8a4a"/><rect x="2" y="6" width="6" height="6" rx="1" fill="#0e6a36"/></svg></div>
<div class="a" style="left:1122.2px;top:1211px;width:15px;height:15px;border-radius:4px;background:transparent;overflow:hidden"><svg class="a" style="left:0;top:0" width="15" height="15" viewBox="0 0 15 15"><rect width="15" height="15" fill="#2a2f3a"/><path d="M7.5 2l2 3-2 3-2-3zM4.5 6l2 3-2 3-2-3zM10.5 6l2 3-2 3-2-3zM7.5 9l2 3-2 3-2-3z" fill="#e8a060"/></svg></div>
<div class="a" style="left:1142.5px;top:1211px;width:15px;height:15px;border-radius:4px;background:transparent;overflow:hidden"><svg class="a" style="left:0;top:0" width="15" height="15" viewBox="0 0 15 15"><rect width="15" height="15" fill="#e8e8e8"/><rect x="3" y="9" width="10" height="5" fill="#aab"/><path d="M6 2v6l-2-2M6 8l2-2" stroke="#777" stroke-width="1.2" fill="none"/></svg></div>
<div class="a" style="left:1162.5px;top:1211px;width:15px;height:15px;border-radius:4px;background:transparent;overflow:hidden"><svg class="a" style="left:0;top:0" width="15" height="15" viewBox="0 0 15 15"><rect width="15" height="15" fill="#1060f0"/><text x="7.5" y="9.5" font-size="4.5" fill="#fff" text-anchor="middle" font-family="Liberation Sans">zoom</text></svg></div>
<div class="a" style="left:1190.8px;top:1211px;width:15px;height:15px;border-radius:4px;background:transparent;overflow:hidden"><svg class="a" style="left:0;top:0" width="15" height="15" viewBox="0 0 15 15"><path d="M3 2h9l-1 13H4z" fill="#d8d8d8"/><path d="M2 2h11" stroke="#bbb" stroke-width="1.5"/><path d="M5 4v9M7.5 4v9M10 4v9" stroke="#bbb" stroke-width=".6"/></svg></div>
<div class="a" style="left:719.5px;top:1230.5px;width:3px;height:3px;border-radius:50%;background:#111"></div>
<div class="a" style="left:779.5px;top:1230.5px;width:3px;height:3px;border-radius:50%;background:#111"></div>
<div class="a" style="left:799.4px;top:1230.5px;width:3px;height:3px;border-radius:50%;background:#111"></div>
<div class="a" style="left:819.5px;top:1230.5px;width:3px;height:3px;border-radius:50%;background:#111"></div>
<div class="a" style="left:839.3px;top:1230.5px;width:3px;height:3px;border-radius:50%;background:#111"></div>
<div class="a" style="left:859.4px;top:1230.5px;width:3px;height:3px;border-radius:50%;background:#111"></div>
<div class="a" style="left:899.3px;top:1230.5px;width:3px;height:3px;border-radius:50%;background:#111"></div>
<div class="a" style="left:1079.5px;top:1230.5px;width:3px;height:3px;border-radius:50%;background:#111"></div>
<div class="a" style="left:1108.1px;top:1230.5px;width:3px;height:3px;border-radius:50%;background:#111"></div>
<div class="a" style="left:1128.2px;top:1230.5px;width:3px;height:3px;border-radius:50%;background:#111"></div>
<div class="a" style="left:1148.5px;top:1230.5px;width:3px;height:3px;border-radius:50%;background:#111"></div>
<div class="a" style="left:1168.5px;top:1230.5px;width:3px;height:3px;border-radius:50%;background:#111"></div>
<div class="a" style="left:1096px;top:1211px;width:1px;height:20px;background:#444"></div>
<div class="a" style="left:1184.8px;top:1211px;width:1px;height:20px;background:#444"></div>
<div class="a" style="left:843px;top:1209px;width:6px;height:6px;border-radius:50%;background:#f33"></div>
<div class="a" style="left:883px;top:1209px;width:6px;height:6px;border-radius:50%;background:#f33"></div>
<div class="a" style="left:1131px;top:1209px;width:6px;height:6px;border-radius:50%;background:#f33"></div>
</body></html>
